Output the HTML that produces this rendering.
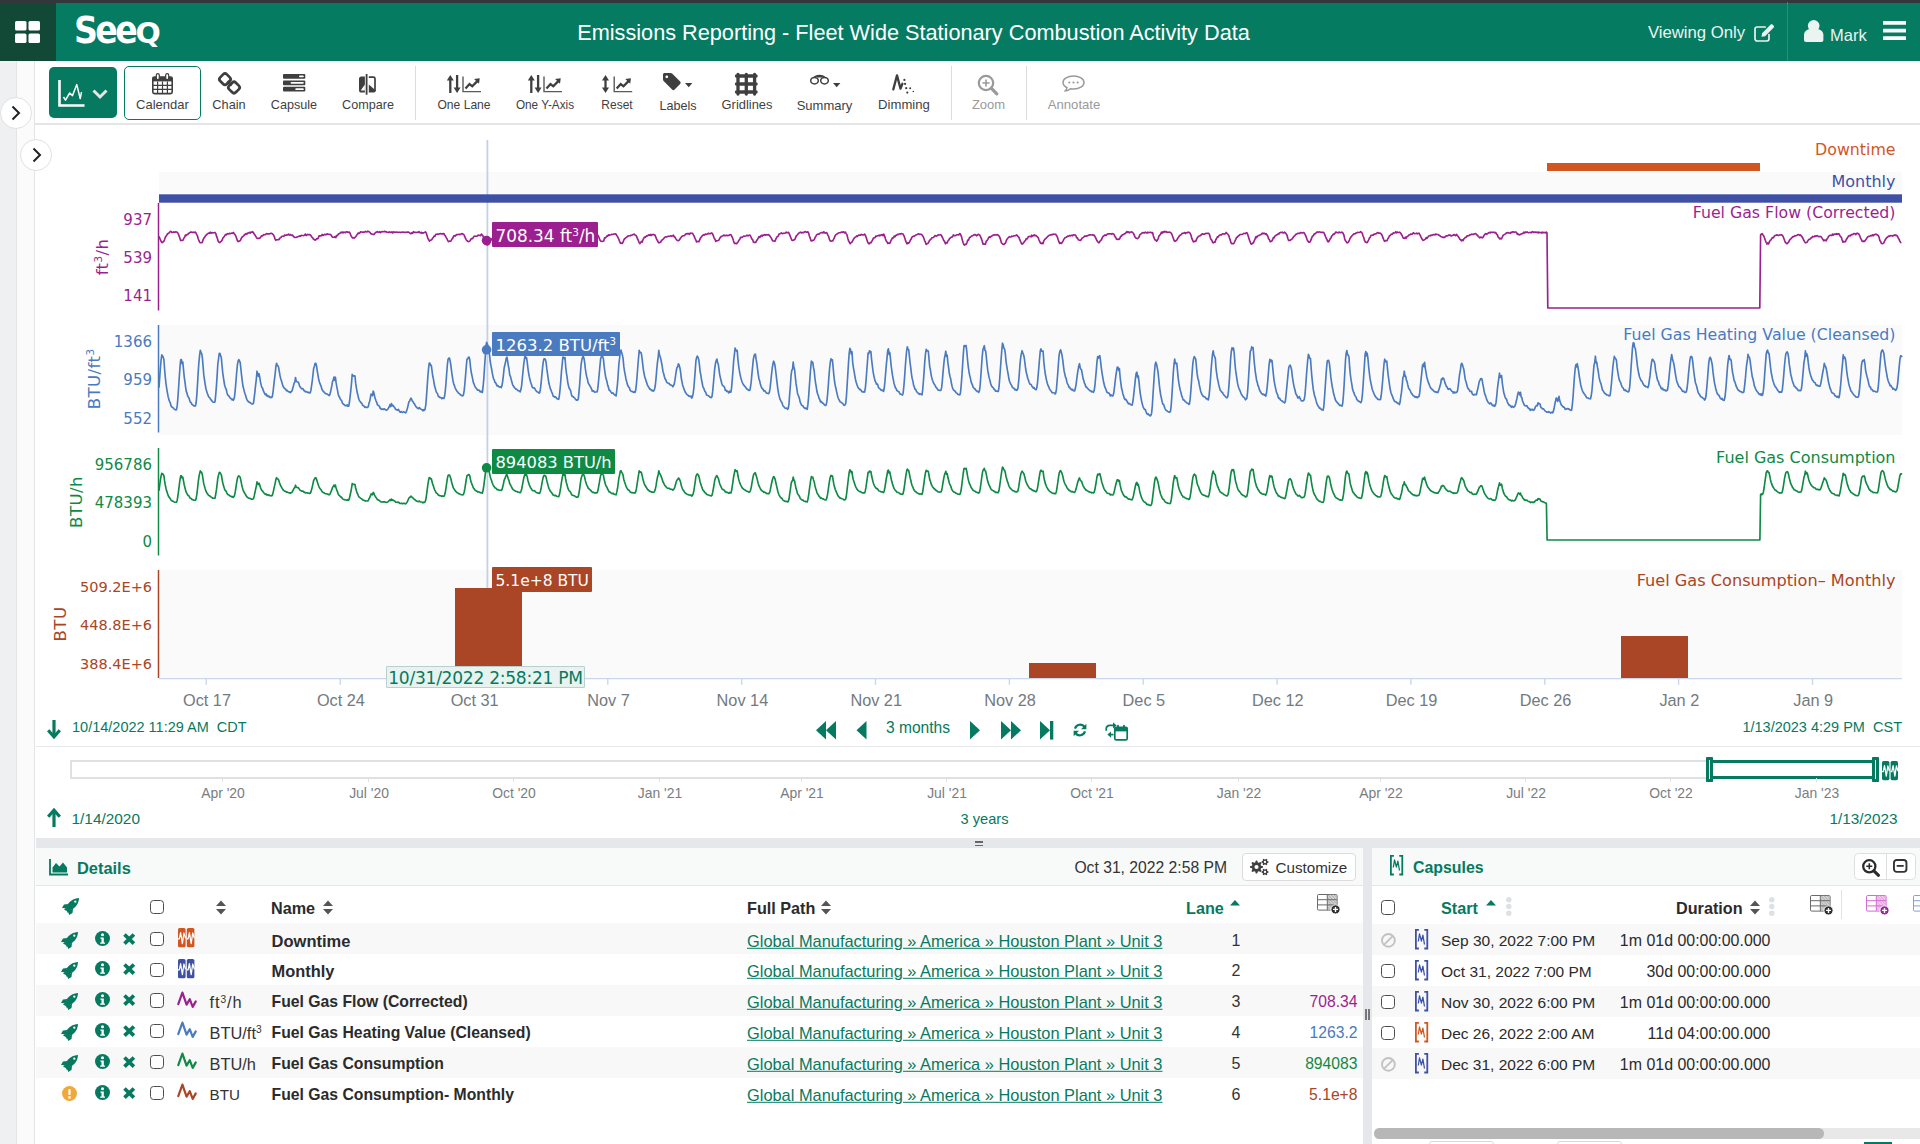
<!DOCTYPE html>
<html lang="en"><head><meta charset="utf-8"><title>Seeq - Emissions Reporting</title>
<style>
*{box-sizing:border-box;margin:0;padding:0}
html,body{width:1920px;height:1144px;overflow:hidden;background:#fff}
body{font-family:"Liberation Sans",sans-serif;color:#3a3a3a;position:relative}
.abs{position:absolute}
.t{position:absolute;white-space:pre;line-height:1}
.ui{font-family:"Liberation Sans",sans-serif}
.dv{font-family:"DejaVu Sans","Liberation Sans",sans-serif}
.g{color:#067a60}
svg{position:absolute;overflow:visible}
#hdr{position:absolute;left:0;top:0;width:1920px;height:61.300px;background:#057b62}
#hdr .strip{position:absolute;left:0;top:0;width:1920px;height:2.500px;background:#33363b}
#hdr .home{position:absolute;left:0;top:2.500px;width:56px;height:58.800px;background:#114836}
#tb{position:absolute;left:35px;top:61px;width:1885px;height:64px;background:#fff;border-bottom:2px solid #e4e5e6}
.tbl{position:absolute;top:98px;font-size:13px;color:#3f3f3f;white-space:pre;line-height:13px;transform:translateX(-50%)}
.tbl.dis{color:#9a9a9a}
.sep{position:absolute;top:66px;width:1px;height:54px;background:#dcdcdc}
#lp0{position:absolute;left:0;top:61px;width:16px;height:1083px;background:#eff0f2}
#lp1{position:absolute;left:16px;top:61px;width:19px;height:1083px;background:#fbfbfb;border-left:1px solid #e3e4e6;border-right:1px solid #e3e4e6}
.circ{position:absolute;width:32px;height:32px;border-radius:16px;background:#fff;border:1px solid #e1e1e1}
.cb{position:absolute;width:14.200px;height:14.200px;border:1.500px solid #4d4d4d;border-radius:3.500px;background:#fff}
.row{position:absolute;height:31px}
.rowg{background:#f8f8f8}
a.path{position:absolute;color:#067a60;text-decoration:underline;font-size:16.4px;white-space:pre;line-height:1}
</style></head>
<body>
<div id="hdr"><div class="strip"></div><div class="home"></div></div>
<svg style="left:15px;top:20.5px" width="25" height="22" viewBox="0 0 25 22" ><rect x="0" y="0" width="11.5" height="9.6" rx="1.6" fill="#fff"/><rect x="0" y="12.4" width="11.5" height="9.6" rx="1.6" fill="#fff"/><rect x="13.5" y="0" width="11.5" height="9.6" rx="1.6" fill="#fff"/><rect x="13.5" y="12.4" width="11.5" height="9.6" rx="1.6" fill="#fff"/></svg>
<div class="t dv" style="left:73.500px;top:12.400px;font-size:37.800px;font-weight:700;color:#fff;letter-spacing:-3px;transform:scaleX(.88);transform-origin:0 0">See<span style="font-size:28.200px;display:inline-block;transform:scaleX(1.2);transform-origin:0 50%;letter-spacing:0;margin-left:.600px">Q</span></div>
<div class="t ui" style="left:913.5px;top:33px;font-size:21.7px;color:#fff;font-weight:400;transform:translate(-50%,-50%);">Emissions Reporting - Fleet Wide Stationary Combustion Activity Data</div>
<div class="t ui" style="left:1648px;top:33px;font-size:16.7px;color:#ecf4f1;font-weight:400;transform:translateY(-50%);">Viewing Only</div>
<svg style="left:1753.5px;top:23px" width="21" height="19" viewBox="0 0 21 19" ><path d="M15 11.5v4.300c0 1.200-1 2.200-2.200 2.200H3.200C2 18 1 17 1 15.800V6.200C1 5 2 4 3.200 4h8" fill="none" stroke="#ecf4f1" stroke-width="1.7" stroke-linecap="round"/><path d="M7.5 13.800l.6-3.600 8.600-8.600c.5-.5 1.300-.5 1.800 0l1.200 1.200c.5.5.5 1.300 0 1.800l-8.600 8.600z" fill="#ecf4f1"/></svg>
<div class="abs" style="left:1787px;top:2px;width:1px;height:60px;background:#2b8f79"></div>
<svg style="left:1803.6px;top:20.4px" width="19.4" height="22" viewBox="0 0 19.4 22" ><circle cx="9.700" cy="5.800" r="5.800" fill="#ecf4f1"/><path d="M0 20v-5c0-3.300 2.600-5.800 5.800-5.800h7.800c3.200 0 5.800 2.500 5.800 5.800v5c0 1.100-.9 2-2 2H2c-1.100 0-2-.9-2-2z" fill="#ecf4f1"/></svg>
<div class="t ui" style="left:1830px;top:35px;font-size:16.5px;color:#ecf4f1;font-weight:400;transform:translateY(-50%);">Mark</div>
<svg style="left:1883.2px;top:21.1px" width="23" height="19" viewBox="0 0 23 19" ><rect x="0" y="0" width="23" height="3.700" rx=".5" fill="#fff"/><rect x="0" y="7.7" width="23" height="3.700" rx=".5" fill="#fff"/><rect x="0" y="15.3" width="23" height="3.700" rx=".5" fill="#fff"/></svg>
<div id="lp0"></div><div id="lp1"></div>
<div id="tb"></div>
<div class="circ" style="left:0px;top:97px"></div>
<svg style="left:10.7px;top:105px" width="10" height="16" viewBox="0 0 10 16" ><path d="M1.5 1.5l6.5 6.5-6.5 6.5" fill="none" stroke="#222" stroke-width="2"/></svg>
<div class="abs" style="left:49px;top:67px;width:68px;height:51px;border-radius:5px;background:#067a60"></div>
<svg style="left:57.5px;top:80px" width="28" height="28" viewBox="0 0 28 28" ><path d="M1.5 0v25.5h25" fill="none" stroke="#fff" stroke-width="2.6"/><path d="M5.5 17l2 3.2 4.2-7.2 2.8 2.6 4.3-11 3.4 14 1.3-6.5" fill="none" stroke="#fff" stroke-width="1.5" stroke-linejoin="round"/></svg>
<svg style="left:92px;top:89px" width="16" height="10" viewBox="0 0 16 10" ><path d="M1.5 1.5l6.5 6.5 6.5-6.5" fill="none" stroke="#e6e6e6" stroke-width="3"/></svg>
<div class="abs" style="left:124px;top:66px;width:77px;height:54px;border-radius:5px;border:1.5px solid #067a60;background:#fff"></div>
<svg style="left:151.5px;top:72.5px" width="21" height="21.5" viewBox="0 0 21 21.5" ><rect x="0.8" y="4" width="19.4" height="16.6" rx="1.6" fill="none" stroke="#3f3f3f" stroke-width="1.6"/><rect x="0.8" y="4" width="19.4" height="4.4" fill="#3f3f3f"/><path d="M0.8 12.4h19.4M0.8 16.4h19.4M5.6 8.4v12M10.5 8.4v12M15.4 8.4v12" stroke="#3f3f3f" stroke-width="1.2"/><rect x="4.3" y="0.6" width="3" height="6" rx="1.5" fill="#fff" stroke="#3f3f3f" stroke-width="1.2"/><rect x="13.7" y="0.6" width="3" height="6" rx="1.5" fill="#fff" stroke="#3f3f3f" stroke-width="1.2"/></svg>
<svg style="left:219px;top:72.5px" width="21" height="21" viewBox="0 0 21 21" ><g fill="none" stroke="#3f3f3f" stroke-width="2.700"><rect x="-4.700" y="-4.700" width="9.400" height="9.400" rx="2.600" transform="translate(6 6.200) rotate(45)"/><rect x="-4.700" y="-4.700" width="9.400" height="9.400" rx="2.600" transform="translate(15 14.500) rotate(45)"/></g><path d="M8.300 8.300l4.400 4.100" stroke="#3f3f3f" stroke-width="2.700"/></svg>
<svg style="left:282.7px;top:74.4px" width="22.3" height="17.5" viewBox="0 0 22.3 17.5" ><rect x="0" y="0" width="22.300" height="4.700" rx="0.900" fill="#3f3f3f"/><rect x="16" y="1.5" width="4.800000000000001" height="1.700" rx="0.850" fill="#fff"/><rect x="0" y="6.5" width="22.300" height="4.700" rx="0.900" fill="#3f3f3f"/><rect x="7.6" y="8.0" width="13.200000000000001" height="1.700" rx="0.850" fill="#fff"/><rect x="0" y="12.8" width="22.300" height="4.700" rx="0.900" fill="#3f3f3f"/><rect x="12.3" y="14.3" width="8.5" height="1.700" rx="0.850" fill="#fff"/></svg>
<svg style="left:359.3px;top:74px" width="17" height="21" viewBox="0 0 17 21" ><rect x="6.700" y="0" width="1.800" height="20.800" rx=".5" fill="#3f3f3f"/><path d="M5.900 2.400H2.200C1 2.400 0 3.400 0 4.600v11.800c0 1.200 1 2.200 2.200 2.200h3.700z" fill="#3f3f3f"/><path d="M1.700 16.600h4.200v-6z" fill="#fff"/><path d="M9.800 3.200h4.600c.9 0 1.600 .7 1.600 1.600v12.200" fill="none" stroke="#3f3f3f" stroke-width="1.700"/><path d="M9.800 10.400v8.200h5c1.100 0 2-.9 2-2z" fill="#3f3f3f"/></svg>
<svg style="left:446.8px;top:75px" width="35" height="18" viewBox="0 0 35 18" ><path d="M3.300 3v15" stroke="#3f3f3f" stroke-width="2.300"/><path d="M-.200 5.600l3.500-5.600 3.500 5.600z" fill="#3f3f3f"/><path d="M10.100 0v15" stroke="#3f3f3f" stroke-width="2.300"/><path d="M6.600 12.400l3.500 5.600 3.500-5.600z" fill="#3f3f3f"/><g transform="translate(15.3 1.600)"><path d="M0.700 0v15h18" fill="none" stroke="#5a5a5a" stroke-width="1.400"/><path d="M3.200 11.800l4-4.400 2.800 2.300 5-5.200" fill="none" stroke="#3f3f3f" stroke-width="2.300"/><path d="M11.800 2.300l5.600-.700-.700 5.600z" fill="#3f3f3f"/></g></svg>
<svg style="left:527.8px;top:75px" width="35" height="18" viewBox="0 0 35 18" ><path d="M3.300 3v15" stroke="#3f3f3f" stroke-width="2.300"/><path d="M-.200 5.600l3.500-5.600 3.500 5.600z" fill="#3f3f3f"/><path d="M10.100 0v15" stroke="#3f3f3f" stroke-width="2.300"/><path d="M6.600 12.400l3.500 5.600 3.500-5.600z" fill="#3f3f3f"/><g transform="translate(15.3 1.600)"><path d="M0.700 0v15h18" fill="none" stroke="#5a5a5a" stroke-width="1.400"/><path d="M3.200 11.800l4-4.400 2.800 2.300 5-5.200" fill="none" stroke="#3f3f3f" stroke-width="2.300"/><path d="M11.800 2.300l5.600-.700-.700 5.600z" fill="#3f3f3f"/></g></svg>
<svg style="left:601.5px;top:75px" width="31" height="18" viewBox="0 0 31 18" ><path d="M3.500 3v12" stroke="#3f3f3f" stroke-width="2.300"/><path d="M0 5.600l3.500-5.600 3.500 5.600z" fill="#3f3f3f"/><path d="M0 12.400l3.500 5.600 3.500-5.600z" fill="#3f3f3f"/><g transform="translate(11.5 1.600)"><path d="M0.700 0v15h18" fill="none" stroke="#5a5a5a" stroke-width="1.400"/><path d="M3.200 11.800l4-4.400 2.800 2.300 5-5.200" fill="none" stroke="#3f3f3f" stroke-width="2.300"/><path d="M11.800 2.300l5.600-.700-.700 5.600z" fill="#3f3f3f"/></g></svg>
<svg style="left:663px;top:72.7px" width="18" height="18" viewBox="0 0 18 18" ><path d="M0 1.600C0 .700 .700 0 1.600 0h6c.600 0 1.100 .200 1.500 .600l8 8c.700 .700 .700 1.800 0 2.500l-5.500 5.500c-.700 .700-1.800 .700-2.500 0l-8.500-8.500C.200 7.700 0 7.200 0 6.600z" fill="#3f3f3f"/><circle cx="3.800" cy="3.800" r="1.400" fill="#fff"/></svg>
<svg style="left:684.9px;top:82.9px" width="8" height="5" viewBox="0 0 8 5" ><path d="M0 0h7.4l-3.7 4.2z" fill="#3f3f3f"/></svg>
<svg style="left:735.3px;top:72.6px" width="22.6" height="22.6" viewBox="0 0 22.6 22.6" ><path d="M3 1.500v19.600M11.300 1.500v19.600M19.600 1.500v19.600M1.500 3h19.600M1.500 11h19.600M1.500 19h19.600" stroke="#3f3f3f" stroke-width="3.300" stroke-linecap="round"/></svg>
<svg style="left:809.6px;top:75.4px" width="19" height="10" viewBox="0 0 19 10" ><ellipse cx="4.500" cy="5.700" rx="3.800" ry="3.200" fill="none" stroke="#3f3f3f" stroke-width="1.500"/><ellipse cx="14.500" cy="5.700" rx="3.800" ry="3.200" fill="none" stroke="#3f3f3f" stroke-width="1.500"/><path d="M4.200 2.300C6 .600 7.800 .500 9.500 .500s3.500 .100 5.300 1.800" fill="none" stroke="#3f3f3f" stroke-width="1.600"/><path d="M7 1.700h5" stroke="#3f3f3f" stroke-width="1.600"/></svg>
<svg style="left:832.8px;top:82.9px" width="8" height="5" viewBox="0 0 8 5" ><path d="M0 0h7.4l-3.7 4.2z" fill="#3f3f3f"/></svg>
<svg style="left:891.5px;top:74px" width="23" height="20" viewBox="0 0 23 20" ><polyline points="1.300,15.400 5,1.400 8.500,14.600 10.400,9.800" fill="none" stroke="#3f3f3f" stroke-width="2.300" stroke-linejoin="round" stroke-linecap="round"/><circle cx="12.4" cy="5.9" r="1.1" fill="#3f3f3f"/><circle cx="13.1" cy="9.9" r="1.1" fill="#3f3f3f"/><circle cx="14.2" cy="14.2" r="1.1" fill="#3f3f3f"/><circle cx="18.2" cy="14.2" r="1" fill="#3f3f3f"/><circle cx="15.3" cy="18.6" r="1.1" fill="#3f3f3f"/><circle cx="21.3" cy="17.5" r="0.8" fill="#3f3f3f"/></svg>
<svg style="left:977px;top:74px" width="21" height="21" viewBox="0 0 21 21" ><circle cx="9" cy="9" r="7.2" fill="none" stroke="#9a9a9a" stroke-width="2.2"/><path d="M14.2 14.2l5.6 5.6" stroke="#9a9a9a" stroke-width="3.2" stroke-linecap="round"/><path d="M5.4 9h7.2M9 5.4v7.2" stroke="#9a9a9a" stroke-width="1.6"/></svg>
<svg style="left:1062px;top:75px" width="23" height="17" viewBox="0 0 23 17" ><path d="M11.500 1C5.700 1 1 3.900 1 7.500c0 2.100 1.600 4 4.100 5.200-.300 1.300-1 2.500-2.200 3.400 2.200-.1 4.200-1 5.500-2.300 1 .2 2 .300 3.100.300 5.800 0 10.500-2.900 10.500-6.500S17.300 1 11.500 1z" fill="none" stroke="#9a9a9a" stroke-width="0"/><path d="M11.5 1C5.7 1 1 3.9 1 7.5c0 2.1 1.6 4 4.1 5.2-.3 1.300-1 2.500-2.200 3.400 2.200-.1 4.200-1 5.500-2.300 1 .2 2 .3 3.100 .3 5.800 0 10.500-2.900 10.500-6.600S17.300 1 11.500 1z" fill="none" stroke="#9a9a9a" stroke-width="1.5" stroke-linejoin="round"/><circle cx="7.3" cy="7.5" r="1.1" fill="#9a9a9a"/><circle cx="11.5" cy="7.5" r="1.1" fill="#9a9a9a"/><circle cx="15.7" cy="7.500" r="1.1" fill="#9a9a9a"/></svg>
<div class="tbl" style="left:162.5px;top:98px;transform:translateX(-50%) scaleX(1)">Calendar</div>
<div class="tbl" style="left:229px;top:98px;transform:translateX(-50%) scaleX(0.98)">Chain</div>
<div class="tbl" style="left:293.5px;top:98px;transform:translateX(-50%) scaleX(0.97)">Capsule</div>
<div class="tbl" style="left:367.5px;top:98px;transform:translateX(-50%) scaleX(0.97)">Compare</div>
<div class="tbl" style="left:463.5px;top:98px;transform:translateX(-50%) scaleX(0.93)">One Lane</div>
<div class="tbl" style="left:544.5px;top:98px;transform:translateX(-50%) scaleX(0.905)">One Y-Axis</div>
<div class="tbl" style="left:616.5px;top:98px;transform:translateX(-50%) scaleX(0.92)">Reset</div>
<div class="tbl" style="left:677.5px;top:98.6px;transform:translateX(-50%) scaleX(0.97)">Labels</div>
<div class="tbl" style="left:746.5px;top:98px;transform:translateX(-50%) scaleX(0.99)">Gridlines</div>
<div class="tbl" style="left:824.5px;top:98.6px;transform:translateX(-50%) scaleX(1)">Summary</div>
<div class="tbl" style="left:903.5px;top:98px;transform:translateX(-50%) scaleX(1.01)">Dimming</div>
<div class="tbl dis" style="left:988.5px;top:98px;transform:translateX(-50%) scaleX(1)">Zoom</div>
<div class="tbl dis" style="left:1074px;top:98px;transform:translateX(-50%) scaleX(1.01)">Annotate</div>
<div class="sep" style="left:415px"></div>
<div class="sep" style="left:951px"></div>
<div class="sep" style="left:1026px"></div>
<div class="circ" style="left:20px;top:139px"></div>
<svg style="left:32px;top:147px" width="10" height="16" viewBox="0 0 10 16" ><path d="M1.5 1.5l6.5 6.5-6.5 6.5" fill="none" stroke="#222" stroke-width="2"/></svg>
<div class="abs" style="left:159px;top:172px;width:1743px;height:21px;background:#fafafa"></div>
<div class="abs" style="left:159px;top:325px;width:1743px;height:110px;background:#fafafa"></div>
<div class="abs" style="left:159px;top:570px;width:1743px;height:108px;background:#fafafa"></div>
<svg style="left:0;top:0" width="1920" height="760" viewBox="0 0 1920 760"><path d="M487.400 140v548" stroke="#c3d1e6" stroke-width="1.800"/><rect x="1547" y="163" width="213" height="8" fill="#d1561f"/><rect x="159" y="194.300" width="1743" height="8.400" fill="#3f51a5"/><path d="M158.500 203v107.500" stroke="#9c1f8f" stroke-width="1.500"/><path d="M158.500 325v107.500" stroke="#4a7ac0" stroke-width="1.500"/><path d="M158.500 448v107.500" stroke="#0e8a45" stroke-width="1.500"/><path d="M158.500 570v108" stroke="#aa4424" stroke-width="1.500"/><path d="M159 678.600H1902" stroke="#ccd6eb" stroke-width="1.300"/><path d="M206.3 678v6.800M340.2 678v6.800M474.0 678v6.800M607.8 678v6.800M741.7 678v6.800M875.5 678v6.800M1009.4 678v6.800M1143.2 678v6.800M1277.1 678v6.800M1410.9 678v6.800M1544.8 678v6.800M1678.6 678v6.800M1812.5 678v6.800" stroke="#ccd6eb" stroke-width="1.400"/><rect x="455" y="588" width="67" height="90" fill="#aa4525"/><rect x="1029" y="663" width="67" height="15" fill="#aa4525"/><rect x="1621" y="636" width="67" height="42" fill="#aa4525"/><path d="M159.0,236.2 159.8,238.4 160.6,240.1 161.4,242.0 162.2,242.6 163.0,242.0 163.8,241.3 164.6,239.5 165.4,237.1 166.2,236.0 167.0,234.8 167.8,233.5 168.6,233.4 169.4,232.5 170.2,231.6 171.0,231.4 171.8,232.6 172.6,232.3 173.4,231.9 174.2,232.3 175.0,232.1 175.8,231.9 176.6,232.0 177.4,232.4 178.2,233.6 179.0,235.7 179.8,238.1 180.6,240.4 181.4,240.3 182.2,240.5 183.0,240.2 183.8,238.2 184.6,237.3 185.4,235.1 186.2,235.6 187.0,234.6 187.8,234.5 188.6,233.3 189.4,233.0 190.2,232.4 191.0,231.9 191.8,232.2 192.6,232.4 193.4,232.2 194.2,232.6 195.0,232.1 195.8,232.5 196.6,234.3 197.4,235.7 198.2,238.7 199.0,240.7 199.8,242.5 200.6,242.7 201.4,242.7 202.2,242.4 203.0,239.9 203.8,238.3 204.6,237.2 205.4,236.1 206.2,235.1 207.0,234.2 207.8,233.7 208.6,233.0 209.4,233.4 210.2,232.2 211.0,233.3 211.8,232.5 212.6,232.8 213.4,232.8 214.2,232.7 215.0,232.4 215.8,233.6 216.6,236.4 217.4,238.4 218.2,241.3 219.0,242.2 219.8,242.6 220.6,241.7 221.4,241.3 222.2,240.0 223.0,237.8 223.8,237.1 224.6,235.9 225.4,234.6 226.2,235.0 227.0,233.9 227.8,233.7 228.6,234.0 229.4,233.3 230.2,233.7 231.0,233.4 231.8,233.1 232.6,233.3 233.4,232.5 234.2,233.7 235.0,234.6 235.8,235.9 236.6,238.2 237.4,240.7 238.2,241.6 239.0,241.1 239.8,240.9 240.6,240.0 241.4,238.2 242.2,237.0 243.0,236.4 243.8,235.8 244.6,234.4 245.4,234.6 246.2,233.5 247.0,234.1 247.8,233.1 248.6,233.0 249.4,232.4 250.2,233.1 251.0,232.1 251.8,232.3 252.6,231.7 253.4,232.6 254.2,234.0 255.0,235.1 255.8,236.4 256.6,237.8 257.4,238.5 258.2,238.3 259.0,238.5 259.8,238.1 260.6,237.3 261.4,235.9 262.2,235.9 263.0,235.5 263.8,234.5 264.6,234.7 265.4,234.7 266.2,233.8 267.0,233.6 267.8,234.1 268.6,233.8 269.4,233.9 270.2,233.6 271.0,233.3 271.8,233.6 272.6,234.0 273.4,234.8 274.2,236.3 275.0,238.8 275.8,240.3 276.6,239.7 277.4,239.7 278.2,239.5 279.0,239.7 279.8,238.3 280.6,237.4 281.4,237.0 282.2,236.2 283.0,236.2 283.8,236.4 284.6,235.0 285.4,235.3 286.2,235.2 287.0,234.8 287.8,234.9 288.6,234.1 289.4,235.1 290.2,234.6 291.0,235.0 291.8,235.5 292.6,235.1 293.4,236.4 294.2,237.1 295.0,237.5 295.8,237.5 296.6,237.3 297.4,236.8 298.2,236.5 299.0,236.4 299.8,235.9 300.6,236.1 301.4,235.4 302.2,235.5 303.0,235.5 303.8,235.6 304.6,235.3 305.4,234.0 306.2,235.4 307.0,235.0 307.8,234.4 308.6,234.7 309.4,234.5 310.2,234.8 311.0,235.6 311.8,237.1 312.6,237.6 313.4,239.0 314.2,239.5 315.0,240.2 315.8,239.7 316.6,238.8 317.4,238.8 318.2,238.3 319.0,235.9 319.8,235.9 320.6,235.9 321.4,235.8 322.2,234.4 323.0,235.5 323.8,234.9 324.6,234.3 325.4,234.8 326.2,234.6 327.0,233.9 327.8,234.1 328.6,234.2 329.4,234.5 330.2,234.3 331.0,235.0 331.8,236.4 332.6,237.2 333.4,237.2 334.2,237.3 335.0,236.6 335.8,237.6 336.6,235.5 337.4,235.7 338.2,234.3 339.0,233.8 339.8,233.4 340.6,232.4 341.4,232.6 342.2,232.0 343.0,233.0 343.8,232.1 344.6,232.2 345.4,232.7 346.2,231.9 347.0,231.8 347.8,232.3 348.6,232.4 349.4,232.1 350.2,233.5 351.0,235.8 351.8,236.9 352.6,237.9 353.4,237.7 354.2,238.1 355.0,237.3 355.8,236.7 356.6,235.3 357.4,234.4 358.2,233.0 359.0,233.4 359.8,233.0 360.6,231.8 361.4,232.0 362.2,232.2 363.0,231.9 363.8,232.3 364.6,231.9 365.4,231.3 366.2,232.0 367.0,231.9 367.8,231.2 368.6,231.6 369.4,232.0 370.2,232.7 371.0,233.9 371.8,233.9 372.6,234.2 373.4,234.6 374.2,234.2 375.0,233.0 375.8,232.3 376.6,232.1 377.4,231.5 378.2,232.2 379.0,232.2 379.8,231.7 380.6,232.6 381.4,231.7 382.2,231.5 383.0,231.8 383.8,231.7 384.6,231.3 385.4,231.8 386.2,231.7 387.0,232.2 387.8,232.3 388.6,232.6 389.4,231.8 390.2,232.4 391.0,232.5 391.8,231.8 392.6,232.9 393.4,231.8 394.2,232.5 395.0,232.0 395.8,232.2 396.6,232.0 397.4,232.2 398.2,232.4 399.0,232.3 399.8,232.2 400.6,232.6 401.4,232.2 402.2,232.3 403.0,232.0 403.8,232.3 404.6,232.4 405.4,232.4 406.2,232.3 407.0,232.0 407.8,232.3 408.6,232.1 409.4,232.7 410.2,233.4 411.0,233.8 411.8,232.9 412.6,233.3 413.4,231.7 414.2,232.3 415.0,232.3 415.8,232.4 416.6,232.5 417.4,232.2 418.2,232.4 419.0,231.7 419.8,232.5 420.6,233.0 421.4,232.4 422.2,233.2 423.0,232.7 423.8,232.9 424.6,232.4 425.4,231.8 426.2,232.9 427.0,235.4 427.8,238.1 428.6,239.5 429.4,241.2 430.2,240.3 431.0,240.1 431.8,239.7 432.6,238.2 433.4,237.2 434.2,236.1 435.0,236.3 435.8,234.4 436.6,234.3 437.4,234.0 438.2,234.4 439.0,234.1 439.8,233.8 440.6,233.6 441.4,233.9 442.2,233.7 443.0,234.0 443.8,233.5 444.6,235.0 445.4,235.9 446.2,237.6 447.0,238.8 447.8,240.7 448.6,241.6 449.4,241.1 450.2,241.3 451.0,241.0 451.8,239.2 452.6,238.6 453.4,236.6 454.2,235.6 455.0,236.2 455.8,235.4 456.6,234.6 457.4,234.6 458.2,234.5 459.0,234.3 459.8,234.6 460.6,234.4 461.4,233.7 462.2,233.6 463.0,234.3 463.8,234.6 464.6,236.1 465.4,238.2 466.2,239.7 467.0,240.7 467.8,241.4 468.6,241.6 469.4,241.3 470.2,240.5 471.0,239.0 471.8,238.5 472.6,238.6 473.4,237.3 474.2,236.3 475.0,236.1 475.8,236.2 476.6,236.2 477.4,236.0 478.2,235.1 479.0,235.5 479.8,235.3 480.6,235.7 481.4,234.1 482.2,235.0 483.0,236.1 483.8,238.3 484.6,240.2 485.4,243.1 486.2,244.7 487.0,244.5 487.8,244.9 488.6,244.3 489.4,243.2 490.2,241.2 491.0,240.2 491.8,238.7 492.6,238.4 493.4,237.9 494.2,237.5 495.0,237.2 495.8,237.0 496.6,236.8 497.4,237.1 498.2,236.4 499.0,236.3 499.8,235.7 500.6,235.7 501.4,236.2 502.2,236.0 503.0,237.6 503.8,239.0 504.6,240.5 505.4,240.7 506.2,241.4 507.0,240.6 507.8,240.6 508.6,240.1 509.4,239.0 510.2,236.8 511.0,237.0 511.8,236.9 512.6,235.8 513.4,235.9 514.2,236.1 515.0,235.7 515.8,234.5 516.6,235.1 517.4,234.8 518.2,234.9 519.0,234.0 519.8,235.1 520.6,235.1 521.4,235.1 522.2,236.9 523.0,238.8 523.8,240.8 524.6,241.7 525.4,241.4 526.2,241.8 527.0,241.4 527.8,240.8 528.6,238.8 529.4,237.9 530.2,236.9 531.0,236.0 531.8,236.0 532.6,236.6 533.4,235.6 534.2,235.2 535.0,235.0 535.8,235.8 536.6,235.5 537.4,236.0 538.2,234.3 539.0,234.8 539.8,234.6 540.6,236.4 541.4,237.3 542.2,239.1 543.0,240.9 543.8,242.4 544.6,241.9 545.4,241.6 546.2,241.6 547.0,239.4 547.8,237.6 548.6,237.1 549.4,236.9 550.2,235.5 551.0,235.0 551.8,235.0 552.6,233.8 553.4,234.0 554.2,233.8 555.0,233.3 555.8,232.8 556.6,233.1 557.4,233.1 558.2,233.5 559.0,233.6 559.8,234.7 560.6,236.5 561.4,239.0 562.2,239.7 563.0,241.5 563.8,241.7 564.6,241.4 565.4,241.4 566.2,239.6 567.0,238.1 567.8,237.1 568.6,235.9 569.4,234.9 570.2,235.9 571.0,234.7 571.8,234.1 572.6,234.3 573.4,234.6 574.2,233.5 575.0,233.0 575.8,233.1 576.6,233.2 577.4,233.2 578.2,232.8 579.0,235.1 579.8,237.4 580.6,239.1 581.4,240.4 582.2,241.9 583.0,241.2 583.8,241.7 584.6,240.8 585.4,238.5 586.2,237.9 587.0,237.5 587.8,236.3 588.6,236.2 589.4,235.7 590.2,235.0 591.0,234.7 591.8,234.1 592.6,234.4 593.4,234.3 594.2,234.2 595.0,234.4 595.8,234.5 596.6,233.8 597.4,234.6 598.2,235.9 599.0,237.4 599.8,239.8 600.6,240.9 601.4,241.2 602.2,241.5 603.0,241.2 603.8,240.7 604.6,237.8 605.4,237.9 606.2,237.0 607.0,235.9 607.8,236.1 608.6,234.8 609.4,235.3 610.2,235.0 611.0,234.8 611.8,234.3 612.6,234.5 613.4,234.3 614.2,233.9 615.0,234.0 615.8,233.9 616.6,235.2 617.4,236.4 618.2,238.0 619.0,239.7 619.8,241.9 620.6,243.4 621.4,243.1 622.2,243.4 623.0,242.3 623.8,240.0 624.6,238.7 625.4,238.2 626.2,237.4 627.0,237.1 627.8,236.0 628.6,235.9 629.4,235.7 630.2,235.8 631.0,235.2 631.8,235.3 632.6,234.7 633.4,234.4 634.2,234.1 635.0,235.1 635.8,235.4 636.6,236.3 637.4,238.7 638.2,240.0 639.0,242.3 639.8,243.7 640.6,242.4 641.4,241.4 642.2,242.1 643.0,239.7 643.8,238.2 644.6,237.1 645.4,237.3 646.2,236.2 647.0,235.8 647.8,235.8 648.6,234.9 649.4,235.3 650.2,234.5 651.0,235.6 651.8,234.5 652.6,234.8 653.4,234.4 654.2,234.9 655.0,235.1 655.8,237.0 656.6,239.3 657.4,240.4 658.2,242.2 659.0,242.8 659.8,242.4 660.6,242.3 661.4,240.7 662.2,239.9 663.0,239.3 663.8,238.4 664.6,237.4 665.4,236.9 666.2,237.0 667.0,236.9 667.8,236.4 668.6,236.2 669.4,236.3 670.2,236.1 671.0,235.8 671.8,236.2 672.6,236.0 673.4,235.2 674.2,236.9 675.0,237.1 675.8,238.6 676.6,239.8 677.4,240.5 678.2,240.6 679.0,240.4 679.8,239.2 680.6,238.0 681.4,237.0 682.2,236.2 683.0,235.8 683.8,235.7 684.6,235.4 685.4,234.3 686.2,233.7 687.0,234.0 687.8,233.5 688.6,233.5 689.4,234.5 690.2,233.1 691.0,233.3 691.8,233.2 692.6,233.3 693.4,234.9 694.2,236.2 695.0,238.4 695.8,240.0 696.6,241.9 697.4,241.5 698.2,241.4 699.0,241.7 699.8,239.5 700.6,238.0 701.4,236.9 702.2,235.8 703.0,235.2 703.8,234.7 704.6,235.1 705.4,234.0 706.2,234.5 707.0,234.2 707.8,233.6 708.6,233.4 709.4,233.6 710.2,233.7 711.0,233.2 711.8,232.9 712.6,233.9 713.4,236.0 714.2,238.1 715.0,239.3 715.8,241.4 716.6,240.7 717.4,240.7 718.2,240.4 719.0,240.0 719.8,238.2 720.6,237.1 721.4,236.3 722.2,236.1 723.0,235.8 723.8,235.0 724.6,235.6 725.4,235.6 726.2,235.4 727.0,235.4 727.8,235.6 728.6,235.4 729.4,235.2 730.2,234.5 731.0,234.7 731.8,236.3 732.6,238.0 733.4,240.6 734.2,242.9 735.0,243.6 735.8,243.3 736.6,243.7 737.4,242.7 738.2,241.7 739.0,240.2 739.8,239.2 740.6,237.4 741.4,237.3 742.2,237.3 743.0,236.7 743.8,236.0 744.6,236.2 745.4,236.0 746.2,235.7 747.0,235.3 747.8,235.8 748.6,235.6 749.4,235.1 750.2,235.3 751.0,237.0 751.8,238.9 752.6,239.6 753.4,242.1 754.2,242.5 755.0,242.3 755.8,242.4 756.6,240.7 757.4,239.6 758.2,238.2 759.0,236.6 759.8,237.5 760.6,236.3 761.4,235.4 762.2,236.2 763.0,235.1 763.8,235.3 764.6,234.6 765.4,235.2 766.2,234.6 767.0,234.9 767.8,235.0 768.6,234.6 769.4,235.5 770.2,236.4 771.0,237.6 771.8,239.1 772.6,240.8 773.4,241.0 774.2,241.1 775.0,241.2 775.8,239.2 776.6,237.6 777.4,236.6 778.2,236.2 779.0,234.1 779.8,233.8 780.6,233.4 781.4,232.8 782.2,233.6 783.0,233.5 783.8,233.2 784.6,233.3 785.4,232.9 786.2,232.2 787.0,232.8 787.8,232.6 788.6,232.4 789.4,234.1 790.2,236.2 791.0,238.0 791.8,240.1 792.6,240.5 793.4,240.3 794.2,239.8 795.0,239.3 795.8,237.0 796.6,235.5 797.4,234.8 798.2,233.8 799.0,233.0 799.8,232.6 800.6,232.2 801.4,233.0 802.2,232.6 803.0,232.8 803.8,232.3 804.6,231.9 805.4,231.5 806.2,232.2 807.0,232.3 807.8,231.8 808.6,233.0 809.4,236.0 810.2,238.1 811.0,240.7 811.8,241.0 812.6,240.4 813.4,240.3 814.2,239.7 815.0,237.7 815.8,236.4 816.6,234.9 817.4,234.3 818.2,234.1 819.0,234.1 819.8,233.3 820.6,233.0 821.4,232.6 822.2,232.6 823.0,233.0 823.8,231.8 824.6,232.8 825.4,233.2 826.2,232.6 827.0,232.9 827.8,235.1 828.6,236.4 829.4,239.4 830.2,240.7 831.0,241.2 831.8,241.0 832.6,241.0 833.4,239.6 834.2,238.2 835.0,235.9 835.8,234.8 836.6,234.2 837.4,233.8 838.2,233.2 839.0,232.8 839.8,232.7 840.6,232.6 841.4,232.1 842.2,232.4 843.0,231.8 843.8,232.1 844.6,233.0 845.4,232.2 846.2,233.6 847.0,234.9 847.8,238.3 848.6,240.9 849.4,242.4 850.2,243.7 851.0,242.6 851.8,242.2 852.6,241.0 853.4,239.3 854.2,238.2 855.0,237.4 855.8,236.9 856.6,235.9 857.4,236.5 858.2,235.4 859.0,235.0 859.8,235.1 860.6,235.2 861.4,234.4 862.2,234.7 863.0,234.9 863.8,235.0 864.6,234.1 865.4,235.3 866.2,237.6 867.0,240.0 867.8,242.5 868.6,243.6 869.4,243.8 870.2,242.5 871.0,242.7 871.8,241.4 872.6,239.9 873.4,238.2 874.2,237.7 875.0,237.6 875.8,236.0 876.6,236.5 877.4,235.8 878.2,235.7 879.0,235.1 879.8,235.8 880.6,235.2 881.4,234.7 882.2,234.5 883.0,235.7 883.8,234.2 884.6,236.0 885.4,238.8 886.2,241.0 887.0,241.8 887.8,243.5 888.6,243.0 889.4,243.3 890.2,242.6 891.0,240.5 891.8,239.1 892.6,237.8 893.4,237.8 894.2,236.1 895.0,236.7 895.8,235.5 896.6,235.0 897.4,234.4 898.2,234.7 899.0,234.0 899.8,233.8 900.6,234.1 901.4,233.6 902.2,233.8 903.0,234.1 903.8,235.5 904.6,237.5 905.4,240.1 906.2,242.3 907.0,243.9 907.8,242.6 908.6,243.3 909.4,242.4 910.2,240.5 911.0,239.3 911.8,237.6 912.6,236.6 913.4,236.1 914.2,236.4 915.0,235.7 915.8,235.1 916.6,234.7 917.4,234.4 918.2,233.8 919.0,234.0 919.8,234.5 920.6,234.2 921.4,234.2 922.2,235.2 923.0,236.3 923.8,238.0 924.6,240.6 925.4,242.2 926.2,244.4 927.0,243.7 927.8,243.5 928.6,242.4 929.4,240.7 930.2,239.7 931.0,239.2 931.8,237.8 932.6,237.7 933.4,237.5 934.2,236.7 935.0,235.6 935.8,235.9 936.6,236.1 937.4,235.6 938.2,234.7 939.0,234.9 939.8,235.0 940.6,234.7 941.4,235.5 942.2,237.0 943.0,238.7 943.8,240.6 944.6,241.4 945.4,243.8 946.2,242.7 947.0,243.1 947.8,241.2 948.6,240.3 949.4,238.9 950.2,238.0 951.0,237.5 951.8,236.8 952.6,236.8 953.4,234.9 954.2,235.5 955.0,235.8 955.8,235.5 956.6,234.8 957.4,234.7 958.2,234.9 959.0,234.8 959.8,233.5 960.6,234.6 961.4,236.4 962.2,239.6 963.0,242.3 963.8,244.5 964.6,245.2 965.4,244.2 966.2,244.3 967.0,242.5 967.8,240.0 968.6,240.1 969.4,237.7 970.2,237.3 971.0,236.5 971.8,236.1 972.6,235.8 973.4,235.1 974.2,235.0 975.0,234.5 975.8,234.9 976.6,235.8 977.4,235.1 978.2,234.4 979.0,234.6 979.8,235.2 980.6,236.8 981.4,238.9 982.2,241.0 983.0,244.1 983.8,244.1 984.6,244.0 985.4,244.3 986.2,241.4 987.0,240.6 987.8,239.4 988.6,237.8 989.4,236.8 990.2,237.3 991.0,236.5 991.8,236.0 992.6,235.6 993.4,235.0 994.2,234.8 995.0,235.0 995.8,234.8 996.6,235.0 997.4,234.6 998.2,235.1 999.0,236.0 999.8,237.4 1000.6,239.6 1001.4,242.8 1002.2,243.5 1003.0,244.3 1003.8,244.6 1004.6,243.7 1005.4,243.2 1006.2,240.9 1007.0,239.2 1007.8,238.3 1008.6,237.3 1009.4,236.7 1010.2,237.0 1011.0,236.9 1011.8,236.2 1012.6,236.4 1013.4,236.1 1014.2,235.7 1015.0,235.8 1015.8,235.5 1016.6,234.9 1017.4,235.8 1018.2,236.7 1019.0,237.4 1019.8,239.9 1020.6,241.5 1021.4,243.3 1022.2,244.1 1023.0,243.5 1023.8,242.5 1024.6,241.2 1025.4,240.6 1026.2,238.7 1027.0,239.0 1027.8,237.8 1028.6,236.5 1029.4,236.5 1030.2,236.3 1031.0,236.9 1031.8,235.2 1032.6,236.1 1033.4,235.7 1034.2,234.8 1035.0,235.7 1035.8,235.4 1036.6,236.2 1037.4,236.9 1038.2,237.6 1039.0,240.0 1039.8,241.6 1040.6,243.3 1041.4,243.6 1042.2,242.9 1043.0,243.6 1043.8,240.9 1044.6,239.6 1045.4,238.8 1046.2,238.1 1047.0,237.3 1047.8,236.4 1048.6,235.8 1049.4,235.2 1050.2,234.9 1051.0,235.0 1051.8,234.5 1052.6,234.7 1053.4,234.1 1054.2,234.2 1055.0,234.2 1055.8,234.4 1056.6,235.7 1057.4,237.2 1058.2,239.8 1059.0,242.0 1059.8,243.5 1060.6,242.8 1061.4,243.4 1062.2,242.3 1063.0,241.1 1063.8,239.4 1064.6,238.1 1065.4,237.5 1066.2,237.2 1067.0,236.8 1067.8,236.0 1068.6,236.2 1069.4,235.6 1070.2,235.9 1071.0,235.3 1071.8,235.4 1072.6,235.8 1073.4,234.8 1074.2,235.0 1075.0,234.9 1075.8,235.4 1076.6,237.7 1077.4,237.9 1078.2,239.5 1079.0,240.1 1079.8,240.3 1080.6,240.5 1081.4,239.3 1082.2,238.0 1083.0,237.7 1083.8,237.1 1084.6,236.1 1085.4,236.0 1086.2,236.1 1087.0,235.9 1087.8,235.5 1088.6,235.4 1089.4,234.8 1090.2,234.8 1091.0,235.0 1091.8,235.0 1092.6,234.7 1093.4,235.4 1094.2,235.2 1095.0,236.6 1095.8,238.1 1096.6,240.0 1097.4,241.2 1098.2,242.4 1099.0,242.9 1099.8,241.6 1100.6,240.5 1101.4,239.9 1102.2,237.9 1103.0,236.3 1103.8,236.1 1104.6,235.0 1105.4,235.0 1106.2,235.4 1107.0,234.4 1107.8,233.9 1108.6,233.8 1109.4,233.9 1110.2,233.8 1111.0,233.7 1111.8,234.2 1112.6,233.6 1113.4,233.9 1114.2,234.8 1115.0,236.6 1115.8,237.5 1116.6,239.3 1117.4,239.5 1118.2,239.1 1119.0,239.5 1119.8,238.5 1120.6,236.4 1121.4,236.2 1122.2,234.9 1123.0,234.7 1123.8,234.3 1124.6,233.6 1125.4,233.5 1126.2,232.4 1127.0,231.5 1127.8,232.5 1128.6,231.9 1129.4,232.8 1130.2,232.2 1131.0,232.0 1131.8,231.9 1132.6,232.6 1133.4,233.1 1134.2,235.2 1135.0,236.9 1135.8,238.0 1136.6,238.3 1137.4,238.7 1138.2,238.0 1139.0,237.1 1139.8,234.9 1140.6,234.2 1141.4,233.6 1142.2,232.8 1143.0,232.6 1143.8,232.9 1144.6,233.0 1145.4,232.1 1146.2,232.7 1147.0,233.1 1147.8,232.2 1148.6,232.6 1149.4,232.5 1150.2,232.3 1151.0,232.3 1151.8,232.9 1152.6,232.6 1153.4,236.0 1154.2,238.2 1155.0,239.8 1155.8,240.3 1156.6,241.2 1157.4,240.0 1158.2,238.6 1159.0,236.1 1159.8,235.0 1160.6,234.3 1161.4,232.2 1162.2,233.1 1163.0,231.8 1163.8,232.4 1164.6,231.3 1165.4,232.0 1166.2,231.5 1167.0,232.6 1167.8,232.3 1168.6,232.2 1169.4,232.1 1170.2,232.4 1171.0,232.9 1171.8,234.2 1172.6,236.2 1173.4,238.6 1174.2,240.6 1175.0,241.3 1175.8,240.8 1176.6,240.5 1177.4,238.8 1178.2,237.8 1179.0,236.3 1179.8,235.5 1180.6,234.9 1181.4,234.6 1182.2,233.3 1183.0,233.2 1183.8,233.1 1184.6,232.5 1185.4,233.6 1186.2,232.7 1187.0,232.8 1187.8,232.3 1188.6,232.4 1189.4,232.4 1190.2,233.5 1191.0,235.2 1191.8,238.4 1192.6,240.2 1193.4,241.9 1194.2,241.7 1195.0,241.0 1195.8,241.3 1196.6,239.1 1197.4,237.6 1198.2,236.7 1199.0,236.0 1199.8,236.0 1200.6,235.1 1201.4,234.9 1202.2,233.8 1203.0,234.1 1203.8,234.0 1204.6,234.2 1205.4,233.6 1206.2,233.4 1207.0,233.5 1207.8,233.3 1208.6,233.3 1209.4,234.3 1210.2,237.3 1211.0,239.5 1211.8,240.1 1212.6,242.4 1213.4,242.8 1214.2,242.0 1215.0,242.2 1215.8,239.8 1216.6,238.5 1217.4,236.9 1218.2,237.0 1219.0,235.6 1219.8,235.1 1220.6,234.8 1221.4,234.9 1222.2,234.0 1223.0,233.9 1223.8,233.8 1224.6,234.1 1225.4,233.7 1226.2,232.4 1227.0,233.5 1227.8,234.2 1228.6,235.1 1229.4,237.8 1230.2,239.9 1231.0,242.7 1231.8,243.7 1232.6,243.6 1233.4,243.7 1234.2,243.0 1235.0,240.8 1235.8,239.4 1236.6,237.4 1237.4,237.3 1238.2,235.9 1239.0,235.8 1239.8,234.6 1240.6,234.5 1241.4,234.5 1242.2,234.3 1243.0,233.9 1243.8,233.4 1244.6,233.5 1245.4,233.6 1246.2,232.9 1247.0,232.8 1247.8,234.7 1248.6,237.2 1249.4,239.9 1250.2,242.0 1251.0,244.0 1251.8,244.1 1252.6,243.0 1253.4,243.0 1254.2,240.9 1255.0,239.1 1255.8,236.9 1256.6,237.7 1257.4,236.1 1258.2,235.8 1259.0,235.4 1259.8,235.0 1260.6,234.8 1261.4,234.1 1262.2,233.2 1263.0,233.8 1263.8,233.3 1264.6,233.4 1265.4,234.3 1266.2,233.7 1267.0,235.1 1267.8,236.2 1268.6,238.8 1269.4,239.8 1270.2,241.7 1271.0,241.4 1271.8,241.0 1272.6,239.7 1273.4,237.5 1274.2,237.8 1275.0,235.9 1275.8,235.6 1276.6,234.9 1277.4,234.8 1278.2,233.6 1279.0,234.0 1279.8,232.8 1280.6,232.4 1281.4,232.5 1282.2,232.2 1283.0,232.9 1283.8,233.0 1284.6,232.2 1285.4,232.8 1286.2,233.9 1287.0,235.2 1287.8,238.3 1288.6,240.5 1289.4,240.3 1290.2,240.4 1291.0,239.7 1291.8,239.1 1292.6,238.3 1293.4,237.0 1294.2,236.1 1295.0,235.6 1295.8,234.2 1296.6,234.1 1297.4,233.6 1298.2,233.3 1299.0,233.4 1299.8,233.4 1300.6,232.5 1301.4,232.6 1302.2,233.1 1303.0,232.6 1303.8,232.6 1304.6,233.6 1305.4,235.1 1306.2,236.9 1307.0,239.3 1307.8,241.1 1308.6,242.1 1309.4,242.2 1310.2,241.7 1311.0,239.9 1311.8,237.5 1312.6,236.1 1313.4,235.7 1314.2,233.9 1315.0,233.9 1315.8,233.2 1316.6,232.3 1317.4,231.9 1318.2,232.4 1319.0,231.9 1319.8,232.0 1320.6,232.3 1321.4,232.3 1322.2,232.3 1323.0,232.4 1323.8,232.6 1324.6,234.1 1325.4,236.3 1326.2,238.3 1327.0,239.6 1327.8,241.6 1328.6,241.8 1329.4,240.5 1330.2,238.8 1331.0,237.9 1331.8,235.9 1332.6,235.3 1333.4,234.0 1334.2,234.3 1335.0,233.3 1335.8,232.0 1336.6,232.2 1337.4,232.7 1338.2,232.8 1339.0,232.0 1339.8,232.4 1340.6,232.7 1341.4,232.2 1342.2,232.4 1343.0,233.2 1343.8,234.8 1344.6,238.4 1345.4,240.7 1346.2,241.6 1347.0,242.9 1347.8,242.6 1348.6,241.8 1349.4,240.1 1350.2,238.0 1351.0,237.1 1351.8,235.9 1352.6,235.3 1353.4,234.2 1354.2,233.8 1355.0,233.8 1355.8,233.1 1356.6,233.0 1357.4,232.4 1358.2,232.5 1359.0,232.5 1359.8,232.3 1360.6,231.7 1361.4,232.2 1362.2,233.3 1363.0,235.8 1363.8,237.7 1364.6,240.7 1365.4,242.2 1366.2,242.2 1367.0,242.7 1367.8,241.6 1368.6,240.0 1369.4,238.1 1370.2,237.2 1371.0,235.3 1371.8,235.2 1372.6,235.1 1373.4,235.1 1374.2,234.0 1375.0,234.1 1375.8,233.7 1376.6,233.6 1377.4,232.5 1378.2,232.8 1379.0,233.2 1379.8,233.1 1380.6,233.5 1381.4,234.2 1382.2,235.5 1383.0,237.9 1383.8,239.8 1384.6,241.3 1385.4,240.5 1386.2,240.7 1387.0,240.7 1387.8,238.8 1388.6,237.8 1389.4,235.7 1390.2,235.4 1391.0,234.5 1391.8,234.0 1392.6,234.1 1393.4,232.7 1394.2,233.0 1395.0,232.9 1395.8,231.7 1396.6,232.9 1397.4,232.1 1398.2,232.5 1399.0,232.5 1399.8,232.2 1400.6,233.1 1401.4,234.3 1402.2,235.7 1403.0,237.8 1403.8,238.3 1404.6,238.5 1405.4,237.2 1406.2,238.1 1407.0,236.6 1407.8,236.3 1408.6,235.4 1409.4,234.7 1410.2,234.6 1411.0,233.9 1411.8,234.4 1412.6,233.8 1413.4,232.7 1414.2,233.4 1415.0,233.7 1415.8,233.5 1416.6,233.2 1417.4,233.9 1418.2,233.4 1419.0,233.2 1419.8,234.6 1420.6,236.1 1421.4,238.0 1422.2,239.2 1423.0,240.4 1423.8,240.2 1424.6,239.6 1425.4,239.1 1426.2,237.5 1427.0,238.3 1427.8,237.3 1428.6,236.1 1429.4,235.7 1430.2,235.8 1431.0,235.1 1431.8,235.4 1432.6,235.0 1433.4,234.5 1434.2,234.5 1435.0,235.0 1435.8,234.0 1436.6,234.5 1437.4,234.5 1438.2,234.6 1439.0,235.3 1439.8,235.6 1440.6,236.5 1441.4,236.7 1442.2,237.0 1443.0,237.5 1443.8,237.3 1444.6,237.5 1445.4,236.6 1446.2,235.9 1447.0,235.9 1447.8,235.8 1448.6,235.0 1449.4,235.1 1450.2,235.0 1451.0,236.0 1451.8,235.9 1452.6,235.2 1453.4,235.1 1454.2,234.5 1455.0,235.3 1455.8,235.7 1456.6,234.3 1457.4,235.7 1458.2,236.4 1459.0,237.7 1459.8,239.2 1460.6,239.7 1461.4,240.8 1462.2,239.8 1463.0,240.7 1463.8,238.9 1464.6,238.3 1465.4,237.4 1466.2,237.3 1467.0,235.8 1467.8,236.0 1468.6,235.5 1469.4,235.5 1470.2,234.5 1471.0,234.7 1471.8,234.1 1472.6,234.5 1473.4,234.5 1474.2,233.9 1475.0,233.7 1475.8,233.6 1476.6,234.9 1477.4,235.0 1478.2,236.3 1479.0,237.0 1479.8,237.8 1480.6,237.1 1481.4,237.2 1482.2,237.9 1483.0,237.3 1483.8,235.8 1484.6,234.6 1485.4,233.7 1486.2,234.1 1487.0,233.9 1487.8,233.5 1488.6,232.7 1489.4,232.4 1490.2,233.0 1491.0,232.2 1491.8,232.3 1492.6,232.3 1493.4,232.3 1494.2,232.3 1495.0,232.8 1495.8,232.6 1496.6,234.3 1497.4,234.8 1498.2,237.2 1499.0,237.8 1499.8,239.0 1500.6,238.3 1501.4,238.8 1502.2,237.3 1503.0,235.5 1503.8,234.9 1504.6,234.4 1505.4,233.9 1506.2,233.1 1507.0,232.9 1507.8,232.5 1508.6,232.9 1509.4,233.0 1510.2,233.3 1511.0,232.2 1511.8,232.7 1512.6,231.8 1513.4,231.9 1514.2,232.2 1515.0,232.0 1515.8,232.0 1516.6,232.6 1517.4,234.3 1518.2,234.1 1519.0,234.9 1519.8,234.6 1520.6,234.4 1521.4,233.7 1522.2,233.6 1523.0,233.5 1523.8,232.2 1524.6,233.0 1525.4,232.0 1526.2,232.4 1527.0,231.8 1527.8,232.4 1528.6,232.7 1529.4,232.5 1530.2,232.4 1531.0,232.8 1531.8,232.1 1532.6,231.7 1533.4,232.5 1534.2,232.1 1535.0,232.4 1535.8,232.0 1536.6,232.4 1537.4,232.2 1538.2,233.0 1539.0,232.1 1539.8,232.6 1540.6,232.5 1541.4,232.9 1542.2,232.1 1543.0,232.8 1543.8,232.4 1544.6,232.5 1545.4,232.9 1546.2,232.0 1547.0,232.8 1547.8,308.0 1548.6,308.0 1549.4,308.0 1550.2,308.0 1551.0,308.0 1551.8,308.0 1552.6,308.0 1553.4,308.0 1554.2,308.0 1555.0,308.0 1555.8,308.0 1556.6,308.0 1557.4,308.0 1558.2,308.0 1559.0,308.0 1559.8,308.0 1560.6,308.0 1561.4,308.0 1562.2,308.0 1563.0,308.0 1563.8,308.0 1564.6,308.0 1565.4,308.0 1566.2,308.0 1567.0,308.0 1567.8,308.0 1568.6,308.0 1569.4,308.0 1570.2,308.0 1571.0,308.0 1571.8,308.0 1572.6,308.0 1573.4,308.0 1574.2,308.0 1575.0,308.0 1575.8,308.0 1576.6,308.0 1577.4,308.0 1578.2,308.0 1579.0,308.0 1579.8,308.0 1580.6,308.0 1581.4,308.0 1582.2,308.0 1583.0,308.0 1583.8,308.0 1584.6,308.0 1585.4,308.0 1586.2,308.0 1587.0,308.0 1587.8,308.0 1588.6,308.0 1589.4,308.0 1590.2,308.0 1591.0,308.0 1591.8,308.0 1592.6,308.0 1593.4,308.0 1594.2,308.0 1595.0,308.0 1595.8,308.0 1596.6,308.0 1597.4,308.0 1598.2,308.0 1599.0,308.0 1599.8,308.0 1600.6,308.0 1601.4,308.0 1602.2,308.0 1603.0,308.0 1603.8,308.0 1604.6,308.0 1605.4,308.0 1606.2,308.0 1607.0,308.0 1607.8,308.0 1608.6,308.0 1609.4,308.0 1610.2,308.0 1611.0,308.0 1611.8,308.0 1612.6,308.0 1613.4,308.0 1614.2,308.0 1615.0,308.0 1615.8,308.0 1616.6,308.0 1617.4,308.0 1618.2,308.0 1619.0,308.0 1619.8,308.0 1620.6,308.0 1621.4,308.0 1622.2,308.0 1623.0,308.0 1623.8,308.0 1624.6,308.0 1625.4,308.0 1626.2,308.0 1627.0,308.0 1627.8,308.0 1628.6,308.0 1629.4,308.0 1630.2,308.0 1631.0,308.0 1631.8,308.0 1632.6,308.0 1633.4,308.0 1634.2,308.0 1635.0,308.0 1635.8,308.0 1636.6,308.0 1637.4,308.0 1638.2,308.0 1639.0,308.0 1639.8,308.0 1640.6,308.0 1641.4,308.0 1642.2,308.0 1643.0,308.0 1643.8,308.0 1644.6,308.0 1645.4,308.0 1646.2,308.0 1647.0,308.0 1647.8,308.0 1648.6,308.0 1649.4,308.0 1650.2,308.0 1651.0,308.0 1651.8,308.0 1652.6,308.0 1653.4,308.0 1654.2,308.0 1655.0,308.0 1655.8,308.0 1656.6,308.0 1657.4,308.0 1658.2,308.0 1659.0,308.0 1659.8,308.0 1660.6,308.0 1661.4,308.0 1662.2,308.0 1663.0,308.0 1663.8,308.0 1664.6,308.0 1665.4,308.0 1666.2,308.0 1667.0,308.0 1667.8,308.0 1668.6,308.0 1669.4,308.0 1670.2,308.0 1671.0,308.0 1671.8,308.0 1672.6,308.0 1673.4,308.0 1674.2,308.0 1675.0,308.0 1675.8,308.0 1676.6,308.0 1677.4,308.0 1678.2,308.0 1679.0,308.0 1679.8,308.0 1680.6,308.0 1681.4,308.0 1682.2,308.0 1683.0,308.0 1683.8,308.0 1684.6,308.0 1685.4,308.0 1686.2,308.0 1687.0,308.0 1687.8,308.0 1688.6,308.0 1689.4,308.0 1690.2,308.0 1691.0,308.0 1691.8,308.0 1692.6,308.0 1693.4,308.0 1694.2,308.0 1695.0,308.0 1695.8,308.0 1696.6,308.0 1697.4,308.0 1698.2,308.0 1699.0,308.0 1699.8,308.0 1700.6,308.0 1701.4,308.0 1702.2,308.0 1703.0,308.0 1703.8,308.0 1704.6,308.0 1705.4,308.0 1706.2,308.0 1707.0,308.0 1707.8,308.0 1708.6,308.0 1709.4,308.0 1710.2,308.0 1711.0,308.0 1711.8,308.0 1712.6,308.0 1713.4,308.0 1714.2,308.0 1715.0,308.0 1715.8,308.0 1716.6,308.0 1717.4,308.0 1718.2,308.0 1719.0,308.0 1719.8,308.0 1720.6,308.0 1721.4,308.0 1722.2,308.0 1723.0,308.0 1723.8,308.0 1724.6,308.0 1725.4,308.0 1726.2,308.0 1727.0,308.0 1727.8,308.0 1728.6,308.0 1729.4,308.0 1730.2,308.0 1731.0,308.0 1731.8,308.0 1732.6,308.0 1733.4,308.0 1734.2,308.0 1735.0,308.0 1735.8,308.0 1736.6,308.0 1737.4,308.0 1738.2,308.0 1739.0,308.0 1739.8,308.0 1740.6,308.0 1741.4,308.0 1742.2,308.0 1743.0,308.0 1743.8,308.0 1744.6,308.0 1745.4,308.0 1746.2,308.0 1747.0,308.0 1747.8,308.0 1748.6,308.0 1749.4,308.0 1750.2,308.0 1751.0,308.0 1751.8,308.0 1752.6,308.0 1753.4,308.0 1754.2,308.0 1755.0,308.0 1755.8,308.0 1756.6,308.0 1757.4,308.0 1758.2,308.0 1759.0,308.0 1759.8,308.0 1760.6,234.9 1761.4,234.1 1762.2,233.7 1763.0,235.0 1763.8,236.0 1764.6,238.2 1765.4,240.5 1766.2,242.5 1767.0,244.1 1767.8,242.9 1768.6,244.0 1769.4,241.7 1770.2,240.4 1771.0,239.8 1771.8,238.4 1772.6,237.6 1773.4,237.7 1774.2,236.4 1775.0,235.5 1775.8,235.3 1776.6,234.9 1777.4,235.1 1778.2,235.5 1779.0,235.4 1779.8,234.9 1780.6,235.0 1781.4,234.8 1782.2,235.2 1783.0,236.2 1783.8,238.3 1784.6,240.5 1785.4,242.4 1786.2,243.2 1787.0,243.7 1787.8,242.9 1788.6,242.2 1789.4,240.4 1790.2,239.3 1791.0,238.6 1791.8,237.7 1792.6,236.7 1793.4,236.8 1794.2,236.2 1795.0,235.7 1795.8,235.8 1796.6,235.4 1797.4,235.1 1798.2,234.5 1799.0,234.7 1799.8,235.5 1800.6,234.9 1801.4,235.9 1802.2,237.0 1803.0,238.5 1803.8,240.3 1804.6,241.6 1805.4,242.8 1806.2,242.6 1807.0,242.3 1807.8,240.9 1808.6,239.7 1809.4,239.2 1810.2,239.0 1811.0,237.9 1811.8,237.7 1812.6,236.4 1813.4,236.8 1814.2,236.6 1815.0,235.9 1815.8,236.3 1816.6,235.8 1817.4,235.7 1818.2,236.4 1819.0,236.7 1819.8,236.4 1820.6,236.5 1821.4,237.1 1822.2,238.4 1823.0,239.5 1823.8,240.9 1824.6,240.1 1825.4,240.0 1826.2,240.8 1827.0,238.9 1827.8,237.9 1828.6,236.3 1829.4,235.7 1830.2,235.3 1831.0,235.5 1831.8,235.5 1832.6,234.0 1833.4,235.1 1834.2,234.2 1835.0,234.0 1835.8,234.2 1836.6,233.7 1837.4,234.2 1838.2,233.7 1839.0,233.8 1839.8,235.4 1840.6,236.7 1841.4,237.5 1842.2,240.0 1843.0,242.2 1843.8,241.4 1844.6,241.9 1845.4,241.8 1846.2,239.8 1847.0,238.5 1847.8,237.2 1848.6,236.1 1849.4,235.5 1850.2,235.9 1851.0,235.0 1851.8,234.5 1852.6,234.7 1853.4,233.8 1854.2,233.6 1855.0,233.8 1855.8,234.7 1856.6,233.3 1857.4,233.3 1858.2,233.6 1859.0,234.4 1859.8,236.0 1860.6,238.1 1861.4,239.7 1862.2,241.3 1863.0,241.6 1863.8,241.0 1864.6,241.4 1865.4,240.2 1866.2,239.2 1867.0,237.8 1867.8,236.9 1868.6,236.4 1869.4,236.4 1870.2,235.9 1871.0,235.5 1871.8,235.8 1872.6,234.9 1873.4,235.6 1874.2,234.5 1875.0,234.6 1875.8,234.2 1876.6,234.4 1877.4,235.2 1878.2,235.4 1879.0,237.0 1879.8,240.4 1880.6,241.5 1881.4,243.3 1882.2,243.7 1883.0,243.5 1883.8,242.8 1884.6,241.2 1885.4,239.4 1886.2,238.4 1887.0,237.5 1887.8,236.9 1888.6,236.1 1889.4,236.3 1890.2,235.6 1891.0,235.8 1891.8,235.7 1892.6,236.1 1893.4,235.4 1894.2,235.5 1895.0,234.9 1895.8,235.5 1896.6,235.3 1897.4,236.1 1898.2,237.9 1899.0,239.1 1899.8,241.1 1900.6,242.4 1901.4,242.7" fill="none" stroke="#9c1f8f" stroke-width="1.650" stroke-linejoin="round"/><path d="M159.0,387.7 159.7,377.6 160.4,367.5 161.1,360.0 161.8,354.9 162.5,356.0 163.2,357.2 163.9,359.5 164.6,369.3 165.3,377.2 166.0,383.6 166.7,388.6 167.4,392.7 168.1,396.4 168.8,399.4 169.5,401.3 170.2,402.5 170.9,405.5 171.6,406.8 172.3,407.2 173.0,407.7 173.7,408.6 174.4,409.2 175.1,409.6 175.8,409.9 176.5,409.7 177.2,405.9 177.9,398.0 178.6,387.8 179.3,376.8 180.0,366.9 180.7,359.8 181.4,359.6 182.1,363.6 182.8,362.1 183.5,369.3 184.2,376.6 184.9,381.7 185.6,387.1 186.3,391.4 187.0,393.1 187.7,396.0 188.4,397.1 189.1,398.2 189.8,400.9 190.5,402.3 191.2,402.7 191.9,404.3 192.6,404.8 193.3,405.4 194.0,406.0 194.7,405.9 195.4,406.0 196.1,403.0 196.8,395.4 197.5,384.6 198.2,372.2 198.9,362.3 199.6,355.4 200.3,350.4 201.0,352.3 201.7,353.7 202.4,357.9 203.1,366.6 203.8,374.9 204.5,379.8 205.2,384.3 205.9,388.5 206.6,391.0 207.3,393.3 208.0,395.1 208.7,396.8 209.4,397.5 210.1,398.3 210.8,399.6 211.5,400.4 212.2,401.2 212.9,402.1 213.6,402.2 214.3,402.3 215.0,401.8 215.7,395.0 216.4,386.4 217.1,376.1 217.8,364.4 218.5,359.0 219.2,353.6 219.9,353.3 220.6,355.4 221.3,357.4 222.0,365.2 222.7,372.5 223.4,377.4 224.1,382.0 224.8,386.0 225.5,387.8 226.2,389.2 226.9,392.4 227.6,394.9 228.3,395.5 229.0,396.1 229.7,397.4 230.4,398.1 231.1,398.6 231.8,399.7 232.5,399.1 233.2,400.3 233.9,399.3 234.6,396.1 235.3,389.2 236.0,381.0 236.7,372.0 237.4,364.9 238.1,361.0 238.8,359.6 239.5,360.9 240.2,362.6 240.9,369.0 241.6,375.7 242.3,381.4 243.0,386.3 243.7,388.9 244.4,391.8 245.1,394.0 245.8,396.0 246.5,398.6 247.2,400.1 247.9,401.1 248.6,401.9 249.3,402.1 250.0,402.5 250.7,403.1 251.4,403.7 252.1,404.0 252.8,403.9 253.5,403.1 254.2,397.7 254.9,391.8 255.6,385.2 256.3,379.3 257.0,371.2 257.7,373.3 258.4,376.3 259.1,373.9 259.8,377.7 260.5,382.1 261.2,385.1 261.9,387.6 262.6,388.2 263.3,390.7 264.0,392.2 264.7,393.7 265.4,394.7 266.1,393.9 266.8,396.0 267.5,395.4 268.2,396.7 268.9,396.1 269.6,397.0 270.3,397.6 271.0,397.3 271.7,397.5 272.4,396.2 273.1,391.5 273.8,385.2 274.5,379.1 275.2,373.5 275.9,366.3 276.6,363.3 277.3,365.5 278.0,365.7 278.7,367.8 279.4,372.2 280.1,376.0 280.8,379.0 281.5,381.1 282.2,383.5 282.9,385.9 283.6,387.3 284.3,388.2 285.0,388.8 285.7,389.2 286.4,390.7 287.1,390.4 287.8,391.2 288.5,391.8 289.2,392.1 289.9,391.9 290.6,392.7 291.3,391.4 292.0,391.0 292.7,388.5 293.4,386.0 294.1,383.1 294.8,382.3 295.5,377.5 296.2,381.0 296.9,381.8 297.6,382.0 298.3,382.0 299.0,383.9 299.7,386.3 300.4,387.2 301.1,388.1 301.8,388.8 302.5,388.6 303.2,389.0 303.9,390.6 304.6,390.5 305.3,391.8 306.0,391.9 306.7,391.7 307.4,392.1 308.1,392.6 308.8,392.4 309.5,393.0 310.2,392.8 310.9,390.4 311.6,385.7 312.3,380.5 313.0,374.5 313.7,368.1 314.4,366.5 315.1,363.3 315.8,363.3 316.5,365.7 317.2,370.6 317.9,374.7 318.6,378.7 319.3,381.7 320.0,383.7 320.7,385.3 321.4,387.3 322.1,389.8 322.8,390.6 323.5,391.7 324.2,392.0 324.9,393.1 325.6,393.6 326.3,393.8 327.0,394.0 327.7,394.5 328.4,394.7 329.1,395.6 329.8,394.8 330.5,392.1 331.2,388.8 331.9,385.4 332.6,381.3 333.3,379.8 334.0,377.0 334.7,380.3 335.4,377.2 336.1,382.7 336.8,386.8 337.5,390.1 338.2,394.2 338.9,396.2 339.6,397.3 340.3,399.0 341.0,399.9 341.7,400.8 342.4,403.0 343.1,403.9 343.8,404.5 344.5,404.8 345.2,405.6 345.9,405.6 346.6,405.7 347.3,404.9 348.0,406.3 348.7,406.1 349.4,402.5 350.1,396.6 350.8,390.4 351.5,383.3 352.2,374.4 352.9,375.6 353.6,376.1 354.3,375.8 355.0,376.1 355.7,383.4 356.4,387.8 357.1,392.1 357.8,394.7 358.5,398.1 359.2,400.1 359.9,401.2 360.6,402.1 361.3,402.9 362.0,403.7 362.7,405.5 363.4,405.6 364.1,406.2 364.8,407.3 365.5,406.8 366.2,407.3 366.9,407.3 367.6,407.4 368.3,406.5 369.0,403.1 369.7,401.2 370.4,397.6 371.1,394.0 371.8,394.9 372.5,395.6 373.2,391.1 373.9,392.8 374.6,396.2 375.3,398.8 376.0,400.8 376.7,402.3 377.4,404.7 378.1,405.3 378.8,405.7 379.5,406.6 380.2,408.4 380.9,408.6 381.6,409.4 382.3,409.3 383.0,408.9 383.7,409.5 384.4,408.8 385.1,409.5 385.8,409.9 386.5,410.2 387.2,409.8 387.9,409.0 388.6,407.8 389.3,406.7 390.0,404.7 390.7,406.6 391.4,403.5 392.1,406.0 392.8,405.1 393.5,406.1 394.2,407.0 394.9,407.9 395.6,409.4 396.3,409.6 397.0,409.8 397.7,410.2 398.4,409.3 399.1,410.7 399.8,411.9 400.5,412.2 401.2,411.5 401.9,412.3 402.6,412.4 403.3,411.9 404.0,411.8 404.7,412.4 405.4,412.8 406.1,412.2 406.8,410.2 407.5,408.1 408.2,404.9 408.9,401.8 409.6,401.2 410.3,399.2 411.0,398.2 411.7,399.5 412.4,401.2 413.1,401.7 413.8,403.4 414.5,403.9 415.2,405.4 415.9,406.7 416.6,407.0 417.3,408.2 418.0,408.4 418.7,408.6 419.4,407.5 420.1,408.6 420.8,409.2 421.5,409.4 422.2,409.7 422.9,410.8 423.6,409.7 424.3,410.3 425.0,409.5 425.7,405.6 426.4,397.6 427.1,387.6 427.8,377.4 428.5,369.2 429.2,363.0 429.9,363.3 430.6,365.3 431.3,365.3 432.0,370.5 432.7,376.0 433.4,378.9 434.1,383.5 434.8,386.8 435.5,389.1 436.2,391.9 436.9,392.9 437.6,393.9 438.3,396.4 439.0,396.6 439.7,397.4 440.4,397.4 441.1,397.8 441.8,398.7 442.5,397.8 443.2,398.3 443.9,398.5 444.6,396.0 445.3,390.8 446.0,383.0 446.7,373.3 447.4,364.5 448.1,359.1 448.8,358.1 449.5,358.1 450.2,361.4 450.9,365.3 451.6,371.4 452.3,376.4 453.0,380.7 453.7,383.8 454.4,385.4 455.1,387.8 455.8,389.2 456.5,390.5 457.2,391.6 457.9,392.2 458.6,393.4 459.3,393.5 460.0,394.2 460.7,395.1 461.4,395.4 462.1,395.6 462.8,395.9 463.5,394.6 464.2,390.3 464.9,383.5 465.6,374.9 466.3,366.4 467.0,359.2 467.7,358.8 468.4,357.3 469.1,357.1 469.8,359.8 470.5,366.8 471.2,372.0 471.9,375.4 472.6,378.6 473.3,382.4 474.0,383.8 474.7,386.1 475.4,387.1 476.1,388.1 476.8,388.9 477.5,390.2 478.2,390.0 478.9,390.1 479.6,391.0 480.3,391.9 481.0,391.2 481.7,392.0 482.4,392.5 483.1,386.7 483.8,378.7 484.5,367.9 485.2,357.8 485.9,345.9 486.6,342.4 487.3,344.1 488.0,345.9 488.7,349.5 489.4,353.6 490.1,360.5 490.8,364.8 491.5,368.4 492.2,372.5 492.9,376.1 493.6,378.9 494.3,380.1 495.0,382.5 495.7,382.8 496.4,384.3 497.1,385.9 497.8,385.6 498.5,386.2 499.2,387.1 499.9,387.0 500.6,386.9 501.3,387.6 502.0,385.6 502.7,381.1 503.4,375.3 504.1,368.3 504.8,365.3 505.5,362.3 506.2,358.4 506.9,357.0 507.6,360.8 508.3,365.6 509.0,368.8 509.7,374.8 510.4,376.3 511.1,379.1 511.8,381.8 512.5,384.3 513.2,385.8 513.9,386.8 514.6,387.9 515.3,388.2 516.0,389.3 516.7,389.4 517.4,389.9 518.1,390.8 518.8,390.7 519.5,391.1 520.2,391.8 520.9,389.6 521.6,385.8 522.3,378.7 523.0,371.5 523.7,364.5 524.4,359.4 525.1,355.7 525.8,358.5 526.5,357.5 527.2,361.8 527.9,368.1 528.6,373.0 529.3,376.7 530.0,379.6 530.7,382.5 531.4,384.3 532.1,386.8 532.8,387.7 533.5,387.9 534.2,387.8 534.9,388.7 535.6,390.1 536.3,391.1 537.0,391.7 537.7,392.1 538.4,392.4 539.1,393.2 539.8,392.4 540.5,388.3 541.2,382.1 541.9,374.7 542.6,367.4 543.3,361.6 544.0,358.8 544.7,358.9 545.4,359.4 546.1,362.5 546.8,368.7 547.5,373.7 548.2,378.7 548.9,383.3 549.6,385.9 550.3,388.6 551.0,390.2 551.7,392.0 552.4,393.6 553.1,396.1 553.8,396.3 554.5,397.1 555.2,396.8 555.9,397.2 556.6,398.3 557.3,398.9 558.0,398.8 558.7,399.3 559.4,395.7 560.1,388.8 560.8,380.7 561.5,371.1 562.2,364.1 562.9,357.0 563.6,357.4 564.3,358.7 565.0,357.5 565.7,366.8 566.4,372.8 567.1,377.2 567.8,382.6 568.5,385.7 569.2,388.2 569.9,389.3 570.6,390.6 571.3,393.9 572.0,396.2 572.7,396.4 573.4,397.0 574.1,397.6 574.8,398.1 575.5,399.2 576.2,400.1 576.9,399.9 577.6,400.1 578.3,398.9 579.0,391.9 579.7,383.8 580.4,373.7 581.1,364.7 581.8,360.3 582.5,357.4 583.2,356.3 583.9,358.0 584.6,361.9 585.3,368.4 586.0,373.1 586.7,376.7 587.4,378.9 588.1,382.7 588.8,384.0 589.5,385.2 590.2,386.4 590.9,387.7 591.6,389.1 592.3,391.2 593.0,390.7 593.7,390.9 594.4,392.1 595.1,392.0 595.8,392.0 596.5,392.0 597.2,391.8 597.9,387.6 598.6,380.5 599.3,373.2 600.0,365.1 600.7,358.4 601.4,356.9 602.1,354.4 602.8,357.0 603.5,359.3 604.2,366.9 604.9,372.0 605.6,376.7 606.3,379.3 607.0,381.8 607.7,385.3 608.4,387.1 609.1,390.1 609.8,390.2 610.5,391.5 611.2,392.3 611.9,393.4 612.6,393.0 613.3,393.1 614.0,394.5 614.7,394.9 615.4,395.1 616.1,395.8 616.8,390.1 617.5,383.8 618.2,374.3 618.9,363.6 619.6,358.4 620.3,350.7 621.0,350.1 621.7,352.7 622.4,355.1 623.1,358.7 623.8,366.4 624.5,371.1 625.2,374.6 625.9,378.7 626.6,381.4 627.3,384.1 628.0,386.0 628.7,387.2 629.4,387.7 630.1,390.1 630.8,390.8 631.5,391.4 632.2,391.3 632.9,392.0 633.6,392.3 634.3,391.6 635.0,392.4 635.7,390.2 636.4,384.1 637.1,376.0 637.8,366.7 638.5,358.3 639.2,350.4 639.9,352.8 640.6,352.4 641.3,353.1 642.0,357.9 642.7,364.2 643.4,369.8 644.1,373.7 644.8,377.3 645.5,379.0 646.2,381.4 646.9,383.3 647.6,385.6 648.3,386.5 649.0,387.7 649.7,389.1 650.4,389.0 651.1,389.9 651.8,390.7 652.5,390.4 653.2,391.2 653.9,390.6 654.6,389.0 655.3,385.5 656.0,378.7 656.7,370.2 657.4,362.6 658.1,358.2 658.8,350.3 659.5,355.0 660.2,356.8 660.9,359.4 661.6,363.0 662.3,366.9 663.0,371.4 663.7,373.7 664.4,376.5 665.1,378.9 665.8,379.6 666.5,381.9 667.2,382.6 667.9,383.2 668.6,383.4 669.3,383.6 670.0,384.7 670.7,385.2 671.4,385.1 672.1,385.6 672.8,386.7 673.5,385.7 674.2,384.1 674.9,380.4 675.6,375.5 676.3,370.7 677.0,367.5 677.7,366.9 678.4,363.8 679.1,365.0 679.8,367.4 680.5,371.3 681.2,377.5 681.9,381.4 682.6,384.9 683.3,387.0 684.0,389.0 684.7,390.9 685.4,392.4 686.1,393.2 686.8,394.3 687.5,395.0 688.2,395.3 688.9,396.1 689.6,396.0 690.3,396.7 691.0,396.1 691.7,398.1 692.4,396.8 693.1,393.7 693.8,388.6 694.5,380.0 695.2,371.0 695.9,361.0 696.6,357.7 697.3,356.1 698.0,357.3 698.7,359.4 699.4,364.4 700.1,371.3 700.8,374.9 701.5,379.6 702.2,383.0 702.9,386.9 703.6,387.9 704.3,389.7 705.0,391.6 705.7,392.1 706.4,394.6 707.1,395.3 707.8,395.4 708.5,395.9 709.2,396.4 709.9,397.1 710.6,397.3 711.3,397.7 712.0,396.5 712.7,391.2 713.4,383.7 714.1,375.5 714.8,367.8 715.5,363.2 716.2,360.6 716.9,359.1 717.6,362.5 718.3,364.3 719.0,369.3 719.7,374.6 720.4,377.8 721.1,380.7 721.8,383.5 722.5,385.5 723.2,385.7 723.9,386.5 724.6,387.4 725.3,390.3 726.0,390.1 726.7,391.4 727.4,391.1 728.1,392.0 728.8,392.9 729.5,391.2 730.2,392.2 730.9,392.1 731.6,387.6 732.3,379.1 733.0,370.2 733.7,360.3 734.4,354.4 735.1,348.1 735.8,349.9 736.5,351.2 737.2,350.4 737.9,359.0 738.6,365.6 739.3,370.2 740.0,374.0 740.7,377.2 741.4,379.8 742.1,382.1 742.8,383.5 743.5,384.9 744.2,385.5 744.9,386.6 745.6,387.0 746.3,388.4 747.0,389.1 747.7,389.2 748.4,390.2 749.1,390.5 749.8,390.3 750.5,387.0 751.2,382.0 751.9,373.9 752.6,366.8 753.3,359.5 754.0,356.1 754.7,354.3 755.4,354.2 756.1,359.2 756.8,363.0 757.5,368.8 758.2,374.1 758.9,378.4 759.6,380.8 760.3,383.8 761.0,386.1 761.7,387.8 762.4,388.8 763.1,389.2 763.8,391.0 764.5,390.6 765.2,391.2 765.9,392.3 766.6,393.2 767.3,393.3 768.0,393.3 768.7,393.7 769.4,392.2 770.1,387.9 770.8,381.6 771.5,374.6 772.2,368.5 772.9,364.2 773.6,361.2 774.3,362.7 775.0,365.5 775.7,371.0 776.4,377.2 777.1,383.1 777.8,388.8 778.5,393.1 779.2,396.2 779.9,398.8 780.6,400.3 781.3,401.7 782.0,402.7 782.7,405.0 783.4,406.5 784.1,406.9 784.8,407.9 785.5,408.2 786.2,408.4 786.9,408.1 787.6,409.3 788.3,408.2 789.0,403.8 789.7,393.8 790.4,385.2 791.1,375.0 791.8,370.1 792.5,369.5 793.2,362.1 793.9,367.5 794.6,369.5 795.3,376.6 796.0,383.4 796.7,387.5 797.4,392.7 798.1,395.1 798.8,396.5 799.5,398.8 800.2,402.2 800.9,403.6 801.6,405.1 802.3,405.7 803.0,405.8 803.7,407.3 804.4,407.9 805.1,408.5 805.8,408.2 806.5,408.8 807.2,409.3 807.9,404.4 808.6,397.0 809.3,386.9 810.0,377.0 810.7,368.0 811.4,361.1 812.1,362.6 812.8,362.4 813.5,367.7 814.2,370.8 814.9,377.9 815.6,383.1 816.3,387.2 817.0,391.8 817.7,394.1 818.4,395.8 819.1,398.6 819.8,399.5 820.5,402.0 821.2,401.4 821.9,402.4 822.6,403.2 823.3,403.3 824.0,404.4 824.7,405.1 825.4,405.5 826.1,405.2 826.8,401.9 827.5,395.5 828.2,386.7 828.9,376.9 829.6,368.5 830.3,362.0 831.0,358.9 831.7,360.5 832.4,359.9 833.1,367.2 833.8,375.0 834.5,381.0 835.2,385.3 835.9,388.3 836.6,391.6 837.3,394.6 838.0,397.5 838.7,399.1 839.4,400.3 840.1,401.8 840.8,402.0 841.5,402.8 842.2,403.1 842.9,403.6 843.6,405.0 844.3,405.4 845.0,404.9 845.7,403.7 846.4,396.6 847.1,385.7 847.8,374.2 848.5,362.9 849.2,353.0 849.9,348.4 850.6,349.8 851.3,354.0 852.0,351.9 852.7,362.5 853.4,367.6 854.1,371.3 854.8,375.6 855.5,379.5 856.2,382.2 856.9,384.6 857.6,386.3 858.3,387.8 859.0,388.7 859.7,389.6 860.4,389.4 861.1,390.6 861.8,391.5 862.5,392.0 863.2,391.7 863.9,392.1 864.6,392.0 865.3,388.3 866.0,381.3 866.7,371.7 867.4,362.5 868.1,353.0 868.8,353.6 869.5,350.8 870.2,351.8 870.9,351.6 871.6,359.6 872.3,365.4 873.0,370.9 873.7,375.1 874.4,378.2 875.1,380.9 875.8,382.3 876.5,384.1 877.2,383.8 877.9,385.2 878.6,387.7 879.3,388.4 880.0,388.9 880.7,389.6 881.4,390.3 882.1,390.0 882.8,390.7 883.5,391.5 884.2,388.5 884.9,381.9 885.6,373.5 886.3,365.1 887.0,358.1 887.7,350.5 888.4,348.8 889.1,354.4 889.8,352.5 890.5,358.8 891.2,366.0 891.9,371.1 892.6,375.9 893.3,379.4 894.0,383.4 894.7,385.4 895.4,387.8 896.1,388.5 896.8,390.6 897.5,390.8 898.2,391.4 898.9,391.7 899.6,393.2 900.3,394.2 901.0,394.3 901.7,394.6 902.4,395.1 903.1,393.2 903.8,387.0 904.5,378.4 905.2,368.3 905.9,358.9 906.6,351.2 907.3,346.8 908.0,349.5 908.7,349.5 909.4,356.2 910.1,363.0 910.8,368.2 911.5,374.3 912.2,378.6 912.9,381.1 913.6,385.3 914.3,387.0 915.0,389.3 915.7,389.4 916.4,391.2 917.1,392.1 917.8,392.8 918.5,393.4 919.2,394.3 919.9,393.7 920.6,394.1 921.3,394.3 922.0,394.9 922.7,389.8 923.4,381.2 924.1,371.6 924.8,361.4 925.5,353.7 926.2,349.3 926.9,351.1 927.6,350.7 928.3,351.0 929.0,358.8 929.7,366.6 930.4,369.8 931.1,374.6 931.8,377.7 932.5,380.3 933.2,382.0 933.9,383.7 934.6,384.6 935.3,385.8 936.0,387.3 936.7,387.8 937.4,389.0 938.1,390.1 938.8,390.3 939.5,390.4 940.2,390.3 940.9,390.4 941.6,387.9 942.3,381.3 943.0,372.6 943.7,365.2 944.4,358.5 945.1,355.1 945.8,351.2 946.5,356.5 947.2,355.2 947.9,363.0 948.6,367.7 949.3,373.3 950.0,376.4 950.7,378.8 951.4,383.3 952.1,386.3 952.8,388.6 953.5,389.9 954.2,390.5 954.9,391.0 955.6,392.2 956.3,392.9 957.0,393.3 957.7,394.3 958.4,394.6 959.1,394.6 959.8,395.0 960.5,392.6 961.2,385.2 961.9,375.7 962.6,365.0 963.3,354.4 964.0,345.8 964.7,345.6 965.4,346.5 966.1,345.5 966.8,351.3 967.5,359.5 968.2,366.1 968.9,371.2 969.6,375.0 970.3,377.6 971.0,381.3 971.7,383.5 972.4,384.8 973.1,387.2 973.8,387.9 974.5,388.9 975.2,388.9 975.9,390.5 976.6,390.9 977.3,391.5 978.0,391.4 978.7,392.5 979.4,391.0 980.1,385.9 980.8,376.6 981.5,366.6 982.2,356.6 982.9,349.8 983.6,347.8 984.3,345.7 985.0,350.4 985.7,351.1 986.4,358.0 987.1,364.7 987.8,370.7 988.5,374.3 989.2,377.9 989.9,380.4 990.6,383.3 991.3,385.5 992.0,386.6 992.7,387.3 993.4,387.9 994.1,389.3 994.8,389.6 995.5,391.1 996.2,391.0 996.9,391.1 997.6,391.5 998.3,391.4 999.0,387.4 999.7,378.5 1000.4,368.8 1001.1,359.2 1001.8,350.2 1002.5,343.2 1003.2,345.0 1003.9,348.3 1004.6,349.1 1005.3,353.3 1006.0,361.1 1006.7,365.9 1007.4,370.2 1008.1,373.9 1008.8,378.0 1009.5,381.2 1010.2,382.9 1010.9,384.5 1011.6,385.3 1012.3,387.3 1013.0,387.7 1013.7,388.0 1014.4,389.1 1015.1,390.0 1015.8,389.4 1016.5,390.4 1017.2,390.0 1017.9,388.5 1018.6,382.2 1019.3,373.6 1020.0,364.1 1020.7,357.4 1021.4,353.5 1022.1,350.7 1022.8,352.7 1023.5,354.5 1024.2,357.5 1024.9,362.7 1025.6,368.5 1026.3,372.6 1027.0,375.0 1027.7,378.2 1028.4,380.0 1029.1,382.3 1029.8,384.0 1030.5,384.4 1031.2,384.6 1031.9,386.3 1032.6,386.8 1033.3,388.1 1034.0,387.5 1034.7,388.8 1035.4,389.5 1036.1,389.7 1036.8,387.8 1037.5,382.9 1038.2,374.9 1038.9,366.8 1039.6,358.1 1040.3,350.7 1041.0,348.9 1041.7,351.2 1042.4,351.3 1043.1,351.0 1043.8,361.5 1044.5,368.2 1045.2,373.5 1045.9,377.1 1046.6,380.6 1047.3,383.2 1048.0,385.5 1048.7,386.7 1049.4,388.6 1050.1,389.7 1050.8,390.7 1051.5,391.6 1052.2,392.7 1052.9,392.7 1053.6,392.8 1054.3,393.0 1055.0,394.0 1055.7,393.2 1056.4,389.4 1057.1,381.2 1057.8,372.4 1058.5,362.5 1059.2,354.4 1059.9,351.4 1060.6,349.8 1061.3,352.3 1062.0,355.2 1062.7,359.6 1063.4,365.6 1064.1,370.9 1064.8,374.2 1065.5,377.2 1066.2,378.5 1066.9,382.2 1067.6,383.9 1068.3,385.2 1069.0,387.3 1069.7,387.2 1070.4,388.9 1071.1,389.1 1071.8,389.9 1072.5,389.3 1073.2,390.5 1073.9,390.9 1074.6,391.0 1075.3,388.6 1076.0,384.8 1076.7,379.7 1077.4,374.2 1078.1,369.7 1078.8,366.0 1079.5,363.7 1080.2,367.9 1080.9,369.2 1081.6,370.1 1082.3,374.1 1083.0,378.3 1083.7,380.3 1084.4,383.1 1085.1,384.2 1085.8,386.8 1086.5,386.8 1087.2,388.1 1087.9,388.6 1088.6,389.6 1089.3,389.9 1090.0,390.8 1090.7,390.7 1091.4,391.8 1092.1,391.3 1092.8,391.8 1093.5,392.3 1094.2,390.4 1094.9,385.7 1095.6,378.0 1096.3,370.4 1097.0,361.4 1097.7,356.6 1098.4,358.2 1099.1,356.3 1099.8,355.6 1100.5,360.5 1101.2,366.9 1101.9,372.1 1102.6,376.4 1103.3,380.3 1104.0,383.8 1104.7,386.6 1105.4,388.2 1106.1,389.8 1106.8,392.0 1107.5,392.6 1108.2,392.9 1108.9,393.1 1109.6,394.0 1110.3,396.0 1111.0,394.9 1111.7,395.6 1112.4,396.0 1113.1,395.5 1113.8,392.8 1114.5,387.2 1115.2,381.0 1115.9,375.7 1116.6,370.9 1117.3,367.1 1118.0,367.2 1118.7,370.4 1119.4,368.5 1120.1,377.0 1120.8,382.6 1121.5,388.0 1122.2,390.4 1122.9,394.0 1123.6,395.9 1124.3,398.3 1125.0,399.6 1125.7,399.2 1126.4,400.2 1127.1,401.4 1127.8,402.8 1128.5,403.8 1129.2,403.5 1129.9,404.0 1130.6,404.6 1131.3,404.7 1132.0,405.2 1132.7,402.6 1133.4,397.7 1134.1,391.0 1134.8,384.8 1135.5,377.8 1136.2,373.2 1136.9,372.1 1137.6,377.4 1138.3,375.9 1139.0,381.6 1139.7,388.7 1140.4,394.3 1141.1,398.3 1141.8,402.1 1142.5,404.8 1143.2,407.1 1143.9,408.5 1144.6,409.4 1145.3,409.6 1146.0,411.6 1146.7,413.4 1147.4,414.3 1148.1,413.8 1148.8,414.9 1149.5,415.1 1150.2,416.0 1150.9,415.3 1151.6,413.2 1152.3,406.1 1153.0,394.8 1153.7,383.9 1154.4,373.2 1155.1,365.0 1155.8,362.2 1156.5,363.9 1157.2,367.4 1157.9,371.1 1158.6,377.5 1159.3,384.7 1160.0,390.5 1160.7,395.0 1161.4,398.1 1162.1,401.6 1162.8,404.1 1163.5,404.2 1164.2,406.3 1164.9,408.3 1165.6,409.7 1166.3,410.4 1167.0,410.8 1167.7,411.5 1168.4,411.8 1169.1,412.1 1169.8,412.3 1170.5,411.2 1171.2,405.3 1171.9,395.6 1172.6,384.1 1173.3,372.7 1174.0,364.4 1174.7,359.1 1175.4,363.6 1176.1,363.1 1176.8,363.3 1177.5,370.8 1178.2,378.2 1178.9,383.2 1179.6,387.1 1180.3,390.4 1181.0,392.6 1181.7,395.9 1182.4,397.4 1183.1,399.9 1183.8,399.9 1184.5,400.5 1185.2,401.6 1185.9,402.0 1186.6,402.8 1187.3,403.1 1188.0,403.3 1188.7,404.4 1189.4,404.1 1190.1,399.8 1190.8,391.4 1191.5,381.8 1192.2,371.8 1192.9,362.9 1193.6,358.7 1194.3,356.6 1195.0,358.0 1195.7,359.0 1196.4,366.1 1197.1,373.4 1197.8,378.2 1198.5,380.1 1199.2,384.4 1199.9,387.6 1200.6,390.9 1201.3,392.9 1202.0,394.8 1202.7,395.3 1203.4,396.5 1204.1,396.8 1204.8,396.8 1205.5,397.5 1206.2,398.9 1206.9,398.5 1207.6,399.1 1208.3,399.9 1209.0,396.1 1209.7,389.3 1210.4,380.4 1211.1,369.7 1211.8,361.5 1212.5,354.4 1213.2,350.8 1213.9,355.0 1214.6,356.5 1215.3,358.1 1216.0,368.1 1216.7,373.6 1217.4,378.5 1218.1,381.4 1218.8,384.9 1219.5,387.6 1220.2,390.2 1220.9,390.8 1221.6,392.2 1222.3,392.2 1223.0,393.5 1223.7,395.0 1224.4,395.2 1225.1,396.2 1225.8,397.0 1226.5,397.8 1227.2,397.7 1227.9,395.9 1228.6,389.9 1229.3,380.6 1230.0,369.4 1230.7,357.8 1231.4,350.6 1232.1,347.7 1232.8,349.7 1233.5,348.0 1234.2,353.2 1234.9,362.8 1235.6,370.2 1236.3,374.9 1237.0,379.7 1237.7,383.9 1238.4,386.7 1239.1,388.8 1239.8,390.1 1240.5,392.0 1241.2,393.9 1241.9,395.1 1242.6,396.0 1243.3,396.9 1244.0,397.4 1244.7,398.1 1245.4,399.8 1246.1,399.2 1246.8,398.5 1247.5,392.9 1248.2,383.4 1248.9,372.0 1249.6,360.6 1250.3,351.1 1251.0,350.4 1251.7,346.9 1252.4,348.5 1253.1,347.7 1253.8,356.6 1254.5,364.7 1255.2,371.1 1255.9,375.6 1256.6,380.5 1257.3,382.5 1258.0,385.8 1258.7,386.9 1259.4,389.7 1260.1,391.2 1260.8,392.3 1261.5,393.4 1262.2,394.0 1262.9,394.6 1263.6,394.2 1264.3,395.1 1265.0,394.8 1265.7,396.2 1266.4,393.3 1267.1,387.8 1267.8,380.4 1268.5,371.9 1269.2,363.6 1269.9,359.3 1270.6,361.7 1271.3,360.0 1272.0,360.7 1272.7,367.6 1273.4,374.6 1274.1,380.6 1274.8,384.6 1275.5,387.9 1276.2,391.2 1276.9,393.4 1277.6,394.7 1278.3,397.5 1279.0,398.6 1279.7,398.2 1280.4,399.9 1281.1,400.4 1281.8,400.9 1282.5,401.0 1283.2,402.0 1283.9,402.2 1284.6,402.9 1285.3,401.6 1286.0,395.5 1286.7,388.4 1287.4,380.9 1288.1,373.4 1288.8,367.3 1289.5,365.9 1290.2,365.1 1290.9,367.2 1291.6,369.7 1292.3,376.1 1293.0,380.8 1293.7,384.8 1294.4,388.1 1295.1,390.5 1295.8,393.7 1296.5,394.7 1297.2,396.1 1297.9,397.9 1298.6,397.9 1299.3,396.5 1300.0,398.1 1300.7,399.6 1301.4,400.8 1302.1,400.9 1302.8,401.0 1303.5,400.4 1304.2,399.7 1304.9,395.4 1305.6,387.2 1306.3,377.4 1307.0,368.2 1307.7,360.2 1308.4,354.4 1309.1,355.8 1309.8,358.5 1310.5,358.5 1311.2,368.6 1311.9,377.2 1312.6,383.6 1313.3,389.7 1314.0,393.0 1314.7,396.3 1315.4,398.0 1316.1,400.9 1316.8,403.4 1317.5,404.8 1318.2,406.2 1318.9,407.0 1319.6,408.3 1320.3,408.1 1321.0,409.1 1321.7,409.8 1322.4,409.7 1323.1,410.2 1323.8,406.8 1324.5,397.8 1325.2,387.6 1325.9,376.7 1326.6,367.5 1327.3,360.9 1328.0,360.3 1328.7,360.6 1329.4,363.4 1330.1,369.3 1330.8,376.7 1331.5,382.0 1332.2,386.5 1332.9,389.9 1333.6,393.6 1334.3,395.9 1335.0,398.6 1335.7,400.5 1336.4,401.6 1337.1,402.3 1337.8,403.1 1338.5,403.9 1339.2,404.8 1339.9,405.6 1340.6,405.3 1341.3,405.5 1342.0,406.1 1342.7,403.5 1343.4,395.8 1344.1,385.2 1344.8,372.5 1345.5,360.2 1346.2,352.9 1346.9,350.6 1347.6,354.9 1348.3,355.0 1349.0,357.2 1349.7,367.7 1350.4,375.0 1351.1,380.2 1351.8,384.1 1352.5,388.8 1353.2,391.3 1353.9,392.5 1354.6,394.9 1355.3,396.1 1356.0,397.1 1356.7,399.3 1357.4,400.0 1358.1,401.0 1358.8,401.4 1359.5,401.4 1360.2,402.3 1360.9,402.7 1361.6,401.0 1362.3,395.7 1363.0,386.7 1363.7,375.9 1364.4,365.5 1365.1,354.4 1365.8,351.5 1366.5,355.8 1367.2,353.2 1367.9,358.2 1368.6,366.3 1369.3,372.5 1370.0,378.2 1370.7,382.1 1371.4,385.3 1372.1,388.7 1372.8,390.8 1373.5,392.5 1374.2,394.3 1374.9,395.5 1375.6,396.8 1376.3,397.7 1377.0,398.2 1377.7,399.4 1378.4,399.3 1379.1,399.5 1379.8,399.7 1380.5,399.5 1381.2,395.5 1381.9,389.1 1382.6,381.2 1383.3,372.2 1384.0,364.2 1384.7,359.2 1385.4,361.0 1386.1,362.1 1386.8,361.2 1387.5,368.9 1388.2,375.4 1388.9,380.3 1389.6,385.3 1390.3,389.8 1391.0,392.7 1391.7,394.7 1392.4,396.2 1393.1,398.1 1393.8,400.0 1394.5,401.2 1395.2,401.8 1395.9,401.9 1396.6,402.0 1397.3,403.4 1398.0,403.0 1398.7,403.7 1399.4,404.6 1400.1,402.0 1400.8,396.7 1401.5,392.2 1402.2,385.5 1402.9,377.4 1403.6,376.4 1404.3,371.2 1405.0,376.5 1405.7,376.1 1406.4,380.1 1407.1,381.6 1407.8,384.9 1408.5,387.8 1409.2,389.0 1409.9,390.0 1410.6,391.5 1411.3,393.2 1412.0,393.9 1412.7,395.2 1413.4,395.8 1414.1,396.1 1414.8,397.1 1415.5,396.6 1416.2,397.5 1416.9,396.9 1417.6,397.6 1418.3,396.7 1419.0,396.5 1419.7,392.9 1420.4,385.8 1421.1,379.1 1421.8,372.6 1422.5,365.6 1423.2,364.0 1423.9,366.6 1424.6,362.4 1425.3,368.3 1426.0,372.1 1426.7,376.5 1427.4,379.3 1428.1,381.9 1428.8,383.4 1429.5,385.3 1430.2,386.9 1430.9,388.3 1431.6,388.7 1432.3,389.8 1433.0,390.1 1433.7,390.9 1434.4,391.6 1435.1,392.0 1435.8,391.7 1436.5,392.4 1437.2,392.4 1437.9,392.5 1438.6,390.5 1439.3,388.4 1440.0,386.0 1440.7,383.6 1441.4,379.1 1442.1,379.6 1442.8,377.9 1443.5,378.5 1444.2,379.6 1444.9,382.7 1445.6,384.3 1446.3,386.4 1447.0,386.8 1447.7,388.6 1448.4,389.3 1449.1,388.9 1449.8,388.7 1450.5,389.4 1451.2,390.5 1451.9,391.3 1452.6,391.5 1453.3,393.1 1454.0,391.9 1454.7,392.9 1455.4,392.4 1456.1,392.6 1456.8,392.2 1457.5,390.8 1458.2,386.0 1458.9,380.0 1459.6,374.2 1460.3,371.0 1461.0,364.8 1461.7,363.3 1462.4,364.4 1463.1,367.2 1463.8,369.2 1464.5,374.2 1465.2,379.2 1465.9,381.4 1466.6,384.0 1467.3,386.7 1468.0,388.4 1468.7,389.1 1469.4,390.2 1470.1,391.6 1470.8,391.2 1471.5,391.2 1472.2,393.8 1472.9,394.5 1473.6,395.0 1474.3,394.6 1475.0,394.4 1475.7,394.7 1476.4,394.6 1477.1,391.5 1477.8,388.8 1478.5,385.4 1479.2,381.6 1479.9,380.4 1480.6,378.8 1481.3,378.5 1482.0,379.2 1482.7,383.4 1483.4,386.9 1484.1,391.1 1484.8,394.1 1485.5,395.6 1486.2,397.9 1486.9,399.9 1487.6,401.3 1488.3,402.5 1489.0,403.3 1489.7,403.8 1490.4,402.9 1491.1,403.2 1491.8,404.8 1492.5,405.1 1493.2,406.0 1493.9,405.1 1494.6,406.2 1495.3,405.5 1496.0,402.7 1496.7,396.7 1497.4,389.0 1498.1,383.4 1498.8,378.3 1499.5,373.2 1500.2,377.5 1500.9,376.6 1501.6,375.5 1502.3,383.1 1503.0,387.8 1503.7,392.2 1504.4,394.7 1505.1,397.1 1505.8,398.8 1506.5,399.0 1507.2,401.4 1507.9,403.4 1508.6,404.2 1509.3,405.5 1510.0,405.3 1510.7,406.0 1511.4,407.3 1512.1,406.2 1512.8,406.7 1513.5,407.4 1514.2,406.7 1514.9,406.1 1515.6,404.0 1516.3,401.0 1517.0,398.2 1517.7,394.4 1518.4,392.1 1519.1,392.6 1519.8,395.0 1520.5,392.4 1521.2,397.1 1521.9,397.7 1522.6,401.4 1523.3,402.6 1524.0,404.5 1524.7,405.7 1525.4,405.7 1526.1,405.9 1526.8,405.7 1527.5,407.1 1528.2,408.0 1528.9,408.6 1529.6,408.5 1530.3,410.5 1531.0,409.5 1531.7,409.7 1532.4,409.3 1533.1,410.4 1533.8,409.5 1534.5,409.6 1535.2,407.2 1535.9,406.1 1536.6,405.5 1537.3,405.9 1538.0,402.8 1538.7,403.9 1539.4,403.5 1540.1,404.2 1540.8,407.2 1541.5,407.8 1542.2,408.5 1542.9,409.0 1543.6,408.9 1544.3,409.9 1545.0,410.8 1545.7,411.4 1546.4,411.8 1547.1,412.2 1547.8,412.2 1548.5,411.6 1549.2,412.3 1549.9,412.2 1550.6,413.1 1551.3,412.5 1552.0,412.2 1552.7,412.8 1553.4,411.2 1554.1,408.3 1554.8,404.3 1555.5,401.3 1556.2,398.0 1556.9,398.5 1557.6,401.4 1558.3,399.6 1559.0,396.3 1559.7,400.6 1560.4,402.5 1561.1,404.6 1561.8,405.4 1562.5,406.1 1563.2,407.1 1563.9,406.9 1564.6,407.8 1565.3,409.4 1566.0,409.0 1566.7,408.9 1567.4,408.6 1568.1,408.9 1568.8,408.7 1569.5,409.8 1570.2,409.9 1570.9,410.4 1571.6,410.1 1572.3,405.1 1573.0,397.5 1573.7,387.1 1574.4,377.3 1575.1,369.5 1575.8,364.9 1576.5,366.9 1577.2,363.6 1577.9,366.8 1578.6,371.2 1579.3,376.5 1580.0,380.4 1580.7,384.7 1581.4,387.5 1582.1,389.8 1582.8,391.8 1583.5,392.7 1584.2,393.8 1584.9,394.8 1585.6,395.8 1586.3,397.1 1587.0,398.0 1587.7,398.0 1588.4,398.1 1589.1,398.7 1589.8,398.7 1590.5,398.8 1591.2,396.0 1591.9,391.0 1592.6,382.7 1593.3,373.6 1594.0,365.1 1594.7,362.5 1595.4,356.2 1596.1,362.9 1596.8,362.3 1597.5,367.4 1598.2,371.0 1598.9,376.2 1599.6,379.7 1600.3,382.1 1601.0,383.9 1601.7,386.7 1602.4,389.9 1603.1,390.7 1603.8,391.9 1604.5,393.2 1605.2,393.5 1605.9,394.1 1606.6,394.9 1607.3,395.0 1608.0,395.0 1608.7,395.7 1609.4,395.9 1610.1,395.5 1610.8,389.9 1611.5,383.0 1612.2,374.5 1612.9,366.6 1613.6,361.0 1614.3,356.4 1615.0,358.0 1615.7,358.8 1616.4,360.2 1617.1,367.2 1617.8,371.9 1618.5,376.2 1619.2,379.6 1619.9,381.4 1620.6,382.5 1621.3,384.7 1622.0,386.6 1622.7,387.7 1623.4,388.2 1624.1,390.2 1624.8,390.4 1625.5,389.9 1626.2,391.2 1626.9,391.2 1627.6,391.7 1628.3,392.0 1629.0,391.0 1629.7,386.9 1630.4,378.0 1631.1,367.3 1631.8,357.4 1632.5,347.6 1633.2,342.8 1633.9,343.0 1634.6,347.5 1635.3,348.3 1636.0,353.5 1636.7,359.7 1637.4,365.9 1638.1,370.1 1638.8,373.8 1639.5,376.7 1640.2,378.5 1640.9,380.4 1641.6,380.9 1642.3,382.0 1643.0,383.7 1643.7,384.8 1644.4,385.9 1645.1,385.8 1645.8,386.6 1646.5,386.7 1647.2,386.7 1647.9,387.7 1648.6,385.6 1649.3,380.7 1650.0,375.9 1650.7,369.2 1651.4,363.3 1652.1,359.6 1652.8,359.3 1653.5,360.9 1654.2,361.4 1654.9,364.3 1655.6,370.7 1656.3,373.9 1657.0,378.1 1657.7,380.5 1658.4,381.5 1659.1,384.2 1659.8,385.7 1660.5,386.5 1661.2,388.5 1661.9,389.0 1662.6,388.2 1663.3,390.0 1664.0,389.7 1664.7,389.7 1665.4,390.8 1666.1,390.3 1666.8,390.8 1667.5,389.8 1668.2,385.4 1668.9,378.6 1669.6,371.4 1670.3,364.3 1671.0,358.8 1671.7,354.6 1672.4,358.4 1673.1,361.3 1673.8,363.6 1674.5,368.0 1675.2,372.7 1675.9,376.8 1676.6,380.4 1677.3,382.7 1678.0,384.3 1678.7,386.3 1679.4,386.9 1680.1,387.6 1680.8,388.5 1681.5,389.4 1682.2,390.8 1682.9,391.5 1683.6,391.2 1684.3,391.9 1685.0,392.5 1685.7,392.3 1686.4,391.6 1687.1,388.0 1687.8,382.0 1688.5,373.8 1689.2,366.9 1689.9,360.2 1690.6,356.6 1691.3,356.5 1692.0,357.1 1692.7,361.3 1693.4,368.2 1694.1,374.0 1694.8,379.0 1695.5,383.0 1696.2,384.8 1696.9,387.2 1697.6,390.2 1698.3,392.9 1699.0,393.9 1699.7,394.7 1700.4,396.3 1701.1,397.0 1701.8,397.0 1702.5,397.9 1703.2,398.3 1703.9,398.7 1704.6,400.1 1705.3,399.0 1706.0,396.0 1706.7,388.6 1707.4,380.3 1708.1,371.1 1708.8,362.3 1709.5,358.4 1710.2,357.3 1710.9,358.7 1711.6,361.7 1712.3,365.2 1713.0,371.9 1713.7,377.4 1714.4,382.3 1715.1,385.7 1715.8,388.8 1716.5,391.3 1717.2,393.6 1717.9,394.3 1718.6,395.2 1719.3,395.9 1720.0,397.6 1720.7,398.6 1721.4,399.2 1722.1,398.3 1722.8,399.8 1723.5,400.3 1724.2,400.3 1724.9,397.3 1725.6,391.6 1726.3,383.4 1727.0,373.2 1727.7,364.6 1728.4,359.2 1729.1,355.5 1729.8,359.5 1730.5,359.2 1731.2,360.5 1731.9,367.4 1732.6,372.6 1733.3,375.9 1734.0,380.1 1734.7,381.6 1735.4,383.6 1736.1,386.0 1736.8,387.3 1737.5,389.1 1738.2,390.0 1738.9,390.5 1739.6,391.0 1740.3,391.6 1741.0,391.8 1741.7,391.9 1742.4,392.6 1743.1,392.5 1743.8,392.1 1744.5,386.7 1745.2,380.7 1745.9,372.3 1746.6,364.9 1747.3,361.0 1748.0,354.4 1748.7,356.7 1749.4,357.2 1750.1,360.7 1750.8,366.1 1751.5,371.5 1752.2,376.5 1752.9,378.8 1753.6,381.7 1754.3,385.7 1755.0,387.3 1755.7,389.1 1756.4,390.5 1757.1,391.6 1757.8,392.1 1758.5,393.4 1759.2,394.4 1759.9,393.8 1760.6,395.0 1761.3,393.8 1762.0,395.4 1762.7,394.6 1763.4,390.4 1764.1,382.8 1764.8,372.7 1765.5,363.4 1766.2,354.1 1766.9,351.0 1767.6,350.2 1768.3,353.1 1769.0,353.3 1769.7,359.3 1770.4,366.2 1771.1,371.8 1771.8,375.4 1772.5,379.0 1773.2,381.5 1773.9,383.6 1774.6,385.4 1775.3,386.9 1776.0,387.4 1776.7,388.6 1777.4,389.7 1778.1,390.8 1778.8,391.6 1779.5,392.4 1780.2,391.8 1780.9,392.2 1781.6,392.2 1782.3,390.0 1783.0,383.3 1783.7,375.5 1784.4,366.5 1785.1,359.5 1785.8,354.0 1786.5,352.5 1787.2,351.9 1787.9,353.3 1788.6,357.4 1789.3,364.4 1790.0,368.9 1790.7,374.2 1791.4,376.8 1792.1,379.9 1792.8,382.4 1793.5,384.0 1794.2,386.2 1794.9,386.5 1795.6,387.5 1796.3,388.1 1797.0,388.7 1797.7,389.8 1798.4,390.6 1799.1,390.3 1799.8,390.7 1800.5,390.7 1801.2,389.8 1801.9,385.3 1802.6,377.9 1803.3,370.0 1804.0,362.1 1804.7,358.7 1805.4,350.9 1806.1,356.3 1806.8,353.7 1807.5,355.9 1808.2,362.2 1808.9,367.4 1809.6,371.5 1810.3,374.1 1811.0,376.7 1811.7,378.2 1812.4,380.2 1813.1,380.7 1813.8,382.1 1814.5,382.4 1815.2,383.0 1815.9,384.8 1816.6,385.4 1817.3,385.0 1818.0,386.0 1818.7,385.8 1819.4,386.3 1820.1,386.1 1820.8,383.6 1821.5,379.7 1822.2,375.7 1822.9,371.5 1823.6,368.2 1824.3,363.4 1825.0,365.8 1825.7,366.7 1826.4,369.3 1827.1,373.5 1827.8,377.9 1828.5,382.1 1829.2,384.7 1829.9,388.0 1830.6,389.3 1831.3,391.3 1832.0,392.8 1832.7,393.0 1833.4,393.5 1834.1,393.8 1834.8,395.5 1835.5,396.1 1836.2,396.4 1836.9,397.1 1837.6,396.3 1838.3,397.3 1839.0,397.7 1839.7,394.0 1840.4,387.7 1841.1,379.8 1841.8,370.9 1842.5,364.2 1843.2,354.8 1843.9,358.4 1844.6,357.1 1845.3,358.4 1846.0,363.4 1846.7,370.7 1847.4,376.2 1848.1,379.8 1848.8,383.9 1849.5,386.5 1850.2,388.5 1850.9,390.9 1851.6,391.6 1852.3,392.7 1853.0,393.6 1853.7,394.8 1854.4,395.3 1855.1,396.0 1855.8,397.0 1856.5,397.0 1857.2,397.3 1857.9,397.4 1858.6,396.0 1859.3,391.5 1860.0,383.6 1860.7,376.0 1861.4,366.0 1862.1,361.6 1862.8,360.4 1863.5,360.9 1864.2,359.6 1864.9,363.5 1865.6,370.3 1866.3,373.6 1867.0,376.5 1867.7,378.9 1868.4,382.2 1869.1,385.3 1869.8,386.9 1870.5,387.1 1871.2,389.5 1871.9,389.5 1872.6,390.1 1873.3,391.5 1874.0,391.3 1874.7,391.2 1875.4,391.7 1876.1,391.9 1876.8,392.0 1877.5,391.7 1878.2,387.5 1878.9,379.2 1879.6,369.6 1880.3,360.9 1881.0,353.3 1881.7,350.8 1882.4,349.9 1883.1,351.2 1883.8,353.2 1884.5,359.0 1885.2,364.6 1885.9,369.6 1886.6,373.4 1887.3,377.5 1888.0,380.3 1888.7,382.3 1889.4,383.5 1890.1,385.7 1890.8,385.3 1891.5,386.8 1892.2,387.3 1892.9,389.1 1893.6,388.7 1894.3,389.2 1895.0,389.8 1895.7,390.3 1896.4,389.2 1897.1,387.4 1897.8,381.8 1898.5,374.3 1899.2,366.7 1899.9,359.5 1900.6,355.8 1901.3,355.8 1902.0,357.2" fill="none" stroke="#4a7ac0" stroke-width="1.650" stroke-linejoin="round"/><path d="M159.0,490.6 159.7,485.3 160.4,479.9 161.1,476.0 161.8,473.3 162.5,473.9 163.2,474.5 163.9,475.7 164.6,480.9 165.3,485.0 166.0,488.5 166.7,491.1 167.4,493.3 168.1,495.2 168.8,496.8 169.5,497.8 170.2,498.4 170.9,500.0 171.6,500.7 172.3,500.9 173.0,501.2 173.7,501.7 174.4,502.0 175.1,502.2 175.8,502.3 176.5,502.2 177.2,500.2 177.9,496.0 178.6,490.7 179.3,484.9 180.0,479.6 180.7,475.9 181.4,475.8 182.1,477.9 182.8,477.1 183.5,480.9 184.2,484.7 184.9,487.5 185.6,490.3 186.3,492.6 187.0,493.5 187.7,495.0 188.4,495.6 189.1,496.2 189.8,497.6 190.5,498.3 191.2,498.5 191.9,499.4 192.6,499.6 193.3,499.9 194.0,500.2 194.7,500.2 195.4,500.3 196.1,498.7 196.8,494.7 197.5,489.0 198.2,482.4 198.9,477.2 199.6,473.6 200.3,470.9 201.0,471.9 201.7,472.6 202.4,474.9 203.1,479.5 203.8,483.9 204.5,486.4 205.2,488.8 205.9,491.0 206.6,492.3 207.3,493.6 208.0,494.5 208.7,495.4 209.4,495.8 210.1,496.2 210.8,496.9 211.5,497.3 212.2,497.8 212.9,498.2 213.6,498.2 214.3,498.3 215.0,498.1 215.7,494.5 216.4,489.9 217.1,484.5 217.8,478.3 218.5,475.4 219.2,472.6 219.9,472.4 220.6,473.6 221.3,474.6 222.0,478.7 222.7,482.6 223.4,485.2 224.1,487.6 224.8,489.7 225.5,490.7 226.2,491.4 226.9,493.1 227.6,494.4 228.3,494.7 229.0,495.0 229.7,495.7 230.4,496.1 231.1,496.3 231.8,496.9 232.5,496.6 233.2,497.3 233.9,496.7 234.6,495.1 235.3,491.4 236.0,487.0 236.7,482.3 237.4,478.6 238.1,476.5 238.8,475.8 239.5,476.5 240.2,477.3 240.9,480.7 241.6,484.2 242.3,487.3 243.0,489.8 243.7,491.3 244.4,492.8 245.1,493.9 245.8,495.0 246.5,496.3 247.2,497.2 247.9,497.7 248.6,498.1 249.3,498.2 250.0,498.4 250.7,498.7 251.4,499.1 252.1,499.2 252.8,499.2 253.5,498.7 254.2,495.9 254.9,492.8 255.6,489.3 256.3,486.2 257.0,481.9 257.7,483.0 258.4,484.6 259.1,483.3 259.8,485.3 260.5,487.6 261.2,489.2 261.9,490.6 262.6,490.9 263.3,492.2 264.0,493.0 264.7,493.8 265.4,494.3 266.1,493.9 266.8,495.0 267.5,494.7 268.2,495.3 268.9,495.0 269.6,495.5 270.3,495.8 271.0,495.6 271.7,495.8 272.4,495.1 273.1,492.6 273.8,489.3 274.5,486.1 275.2,483.1 275.9,479.3 276.6,477.7 277.3,478.9 278.0,479.0 278.7,480.1 279.4,482.4 280.1,484.4 280.8,486.0 281.5,487.1 282.2,488.4 282.9,489.7 283.6,490.4 284.3,490.9 285.0,491.2 285.7,491.4 286.4,492.2 287.1,492.0 287.8,492.4 288.5,492.8 289.2,492.9 289.9,492.8 290.6,493.3 291.3,492.5 292.0,492.4 292.7,491.0 293.4,489.7 294.1,488.2 294.8,487.8 295.5,485.2 296.2,487.1 296.9,487.5 297.6,487.6 298.3,487.6 299.0,488.6 299.7,489.8 300.4,490.3 301.1,490.8 301.8,491.2 302.5,491.1 303.2,491.3 303.9,492.1 304.6,492.1 305.3,492.8 306.0,492.8 306.7,492.7 307.4,492.9 308.1,493.2 308.8,493.1 309.5,493.4 310.2,493.3 310.9,492.0 311.6,489.5 312.3,486.8 313.0,483.6 313.7,480.2 314.4,479.4 315.1,477.7 315.8,477.7 316.5,479.0 317.2,481.6 317.9,483.7 318.6,485.8 319.3,487.5 320.0,488.5 320.7,489.3 321.4,490.4 322.1,491.7 322.8,492.1 323.5,492.7 324.2,492.9 324.9,493.4 325.6,493.7 326.3,493.8 327.0,493.9 327.7,494.2 328.4,494.3 329.1,494.8 329.8,494.3 330.5,492.9 331.2,491.2 331.9,489.4 332.6,487.2 333.3,486.5 334.0,485.0 334.7,486.7 335.4,485.1 336.1,488.0 336.8,490.1 337.5,491.8 338.2,494.0 338.9,495.1 339.6,495.7 340.3,496.5 341.0,497.0 341.7,497.5 342.4,498.7 343.1,499.2 343.8,499.5 344.5,499.6 345.2,500.0 345.9,500.0 346.6,500.1 347.3,499.7 348.0,500.4 348.7,500.3 349.4,498.4 350.1,495.3 350.8,492.0 351.5,488.3 352.2,483.6 352.9,484.2 353.6,484.5 354.3,484.3 355.0,484.5 355.7,488.3 356.4,490.7 357.1,492.9 357.8,494.3 358.5,496.1 359.2,497.1 359.9,497.7 360.6,498.2 361.3,498.6 362.0,499.1 362.7,500.0 363.4,500.0 364.1,500.4 364.8,500.9 365.5,500.7 366.2,501.0 366.9,501.0 367.6,501.0 368.3,500.5 369.0,498.7 369.7,497.7 370.4,495.9 371.1,493.9 371.8,494.4 372.5,494.8 373.2,492.4 373.9,493.3 374.6,495.1 375.3,496.5 376.0,497.5 376.7,498.3 377.4,499.6 378.1,499.9 378.8,500.1 379.5,500.6 380.2,501.5 380.9,501.7 381.6,502.0 382.3,502.0 383.0,501.8 383.7,502.1 384.4,501.7 385.1,502.1 385.8,502.3 386.5,502.5 387.2,502.3 387.9,501.8 388.6,501.2 389.3,500.6 390.0,499.6 390.7,500.6 391.4,499.0 392.1,500.3 392.8,499.8 393.5,500.3 394.2,500.8 394.9,501.2 395.6,502.1 396.3,502.2 397.0,502.3 397.7,502.5 398.4,502.0 399.1,502.7 399.8,503.4 400.5,503.5 401.2,503.2 401.9,503.6 402.6,503.6 403.3,503.4 404.0,503.3 404.7,503.6 405.4,503.9 406.1,503.5 406.8,502.5 407.5,501.4 408.2,499.7 408.9,498.0 409.6,497.7 410.3,496.7 411.0,496.2 411.7,496.8 412.4,497.7 413.1,498.0 413.8,498.9 414.5,499.2 415.2,500.0 415.9,500.6 416.6,500.8 417.3,501.4 418.0,501.5 418.7,501.6 419.4,501.0 420.1,501.6 420.8,502.0 421.5,502.0 422.2,502.2 422.9,502.8 423.6,502.2 424.3,502.5 425.0,502.1 425.7,500.1 426.4,495.8 427.1,490.6 427.8,485.1 428.5,480.8 429.2,477.6 429.9,477.7 430.6,478.8 431.3,478.8 432.0,481.5 432.7,484.4 433.4,485.9 434.1,488.4 434.8,490.1 435.5,491.4 436.2,492.8 436.9,493.3 437.6,493.9 438.3,495.2 439.0,495.3 439.7,495.7 440.4,495.7 441.1,495.9 441.8,496.4 442.5,495.9 443.2,496.2 443.9,496.3 444.6,495.0 445.3,492.3 446.0,488.1 446.7,483.0 447.4,478.4 448.1,475.5 448.8,475.0 449.5,475.0 450.2,476.7 450.9,478.8 451.6,482.0 452.3,484.6 453.0,486.9 453.7,488.5 454.4,489.4 455.1,490.6 455.8,491.4 456.5,492.1 457.2,492.7 457.9,493.0 458.6,493.6 459.3,493.7 460.0,494.1 460.7,494.5 461.4,494.7 462.1,494.8 462.8,494.9 463.5,494.3 464.2,492.0 464.9,488.4 465.6,483.9 466.3,479.3 467.0,475.6 467.7,475.4 468.4,474.5 469.1,474.5 469.8,475.9 470.5,479.6 471.2,482.3 471.9,484.1 472.6,485.8 473.3,487.8 474.0,488.5 474.7,489.8 475.4,490.3 476.1,490.8 476.8,491.2 477.5,491.9 478.2,491.8 478.9,491.9 479.6,492.3 480.3,492.8 481.0,492.5 481.7,492.9 482.4,493.1 483.1,490.1 483.8,485.9 484.5,480.1 485.2,474.8 485.9,468.5 486.6,466.7 487.3,467.6 488.0,468.5 488.7,470.4 489.4,472.6 490.1,476.2 490.8,478.5 491.5,480.4 492.2,482.6 492.9,484.5 493.6,485.9 494.3,486.6 495.0,487.9 495.7,488.0 496.4,488.8 497.1,489.6 497.8,489.5 498.5,489.8 499.2,490.3 499.9,490.2 500.6,490.2 501.3,490.5 502.0,489.5 502.7,487.1 503.4,484.1 504.1,480.4 504.8,478.8 505.5,477.2 506.2,475.1 506.9,474.4 507.6,476.4 508.3,479.0 509.0,480.6 509.7,483.8 510.4,484.6 511.1,486.1 511.8,487.5 512.5,488.8 513.2,489.6 513.9,490.1 514.6,490.7 515.3,490.8 516.0,491.5 516.7,491.5 517.4,491.8 518.1,492.2 518.8,492.2 519.5,492.4 520.2,492.7 520.9,491.6 521.6,489.6 522.3,485.8 523.0,482.1 523.7,478.3 524.4,475.7 525.1,473.7 525.8,475.2 526.5,474.6 527.2,476.9 527.9,480.2 528.6,482.9 529.3,484.8 530.0,486.3 530.7,487.9 531.4,488.8 532.1,490.1 532.8,490.6 533.5,490.7 534.2,490.6 534.9,491.1 535.6,491.9 536.3,492.4 537.0,492.7 537.7,492.9 538.4,493.1 539.1,493.5 539.8,493.1 540.5,490.9 541.2,487.7 541.9,483.7 542.6,479.9 543.3,476.8 544.0,475.3 544.7,475.4 545.4,475.7 546.1,477.3 546.8,480.6 547.5,483.2 548.2,485.9 548.9,488.3 549.6,489.6 550.3,491.1 551.0,491.9 551.7,492.9 552.4,493.7 553.1,495.0 553.8,495.2 554.5,495.6 555.2,495.4 555.9,495.6 556.6,496.2 557.3,496.5 558.0,496.5 558.7,496.7 559.4,494.8 560.1,491.2 560.8,486.9 561.5,481.9 562.2,478.1 562.9,474.4 563.6,474.6 564.3,475.3 565.0,474.7 565.7,479.5 566.4,482.7 567.1,485.1 567.8,487.9 568.5,489.6 569.2,490.8 569.9,491.4 570.6,492.2 571.3,493.9 572.0,495.1 572.7,495.2 573.4,495.5 574.1,495.8 574.8,496.1 575.5,496.7 576.2,497.2 576.9,497.0 577.6,497.1 578.3,496.5 579.0,492.8 579.7,488.6 580.4,483.2 581.1,478.4 581.8,476.2 582.5,474.6 583.2,474.0 583.9,474.9 584.6,477.0 585.3,480.4 586.0,482.9 586.7,484.8 587.4,486.0 588.1,488.0 588.8,488.6 589.5,489.3 590.2,489.9 590.9,490.6 591.6,491.4 592.3,492.4 593.0,492.2 593.7,492.3 594.4,492.9 595.1,492.9 595.8,492.9 596.5,492.9 597.2,492.7 597.9,490.6 598.6,486.8 599.3,483.0 600.0,478.6 600.7,475.1 601.4,474.3 602.1,473.0 602.8,474.4 603.5,475.6 604.2,479.6 604.9,482.3 605.6,484.8 606.3,486.2 607.0,487.5 607.7,489.3 608.4,490.3 609.1,491.9 609.8,491.9 610.5,492.6 611.2,493.1 611.9,493.6 612.6,493.4 613.3,493.4 614.0,494.2 614.7,494.4 615.4,494.5 616.1,494.9 616.8,491.9 617.5,488.5 618.2,483.5 618.9,477.9 619.6,475.1 620.3,471.1 621.0,470.7 621.7,472.1 622.4,473.4 623.1,475.3 623.8,479.4 624.5,481.8 625.2,483.7 625.9,485.8 626.6,487.3 627.3,488.7 628.0,489.7 628.7,490.3 629.4,490.6 630.1,491.9 630.8,492.2 631.5,492.6 632.2,492.5 632.9,492.9 633.6,493.0 634.3,492.7 635.0,493.1 635.7,491.9 636.4,488.7 637.1,484.4 637.8,479.5 638.5,475.1 639.2,470.9 639.9,472.2 640.6,472.0 641.3,472.3 642.0,474.9 642.7,478.2 643.4,481.1 644.1,483.2 644.8,485.1 645.5,486.0 646.2,487.3 646.9,488.3 647.6,489.5 648.3,490.0 649.0,490.6 649.7,491.4 650.4,491.3 651.1,491.8 651.8,492.2 652.5,492.0 653.2,492.4 653.9,492.2 654.6,491.3 655.3,489.4 656.0,485.9 656.7,481.3 657.4,477.4 658.1,475.0 658.8,470.8 659.5,473.3 660.2,474.3 660.9,475.7 661.6,477.6 662.3,479.6 663.0,482.0 663.7,483.2 664.4,484.7 665.1,485.9 665.8,486.3 666.5,487.5 667.2,487.9 667.9,488.2 668.6,488.3 669.3,488.4 670.0,489.0 670.7,489.3 671.4,489.2 672.1,489.5 672.8,490.1 673.5,489.5 674.2,488.7 674.9,486.7 675.6,484.2 676.3,481.6 677.0,480.0 677.7,479.6 678.4,478.0 679.1,478.6 679.8,479.9 680.5,481.9 681.2,485.2 681.9,487.3 682.6,489.1 683.3,490.3 684.0,491.3 684.7,492.3 685.4,493.1 686.1,493.5 686.8,494.1 687.5,494.5 688.2,494.6 688.9,495.0 689.6,495.0 690.3,495.3 691.0,495.0 691.7,496.1 692.4,495.4 693.1,493.8 693.8,491.1 694.5,486.5 695.2,481.8 695.9,476.5 696.6,474.8 697.3,473.9 698.0,474.6 698.7,475.7 699.4,478.3 700.1,481.9 700.8,483.9 701.5,486.3 702.2,488.1 702.9,490.2 703.6,490.7 704.3,491.7 705.0,492.7 705.7,493.0 706.4,494.2 707.1,494.6 707.8,494.7 708.5,495.0 709.2,495.2 709.9,495.6 710.6,495.7 711.3,495.9 712.0,495.2 712.7,492.4 713.4,488.5 714.1,484.1 714.8,480.1 715.5,477.7 716.2,476.3 716.9,475.5 717.6,477.3 718.3,478.2 719.0,480.9 719.7,483.7 720.4,485.4 721.1,486.9 721.8,488.4 722.5,489.5 723.2,489.5 723.9,490.0 724.6,490.4 725.3,492.0 726.0,491.9 726.7,492.5 727.4,492.4 728.1,492.9 728.8,493.3 729.5,492.4 730.2,493.0 730.9,492.9 731.6,490.5 732.3,486.1 733.0,481.4 733.7,476.2 734.4,473.0 735.1,469.7 735.8,470.7 736.5,471.3 737.2,470.9 737.9,475.5 738.6,478.9 739.3,481.4 740.0,483.4 740.7,485.0 741.4,486.4 742.1,487.6 742.8,488.4 743.5,489.1 744.2,489.5 744.9,490.0 745.6,490.2 746.3,491.0 747.0,491.3 747.7,491.4 748.4,491.9 749.1,492.1 749.8,492.0 750.5,490.2 751.2,487.6 751.9,483.3 752.6,479.5 753.3,475.7 754.0,473.9 754.7,473.0 755.4,472.9 756.1,475.6 756.8,477.6 757.5,480.6 758.2,483.4 758.9,485.7 759.6,487.0 760.3,488.5 761.0,489.8 761.7,490.7 762.4,491.2 763.1,491.4 763.8,492.4 764.5,492.1 765.2,492.4 765.9,493.0 766.6,493.5 767.3,493.6 768.0,493.6 768.7,493.8 769.4,493.0 770.1,490.7 770.8,487.4 771.5,483.7 772.2,480.5 772.9,478.2 773.6,476.6 774.3,477.4 775.0,478.9 775.7,481.8 776.4,485.1 777.1,488.1 777.8,491.2 778.5,493.5 779.2,495.1 779.9,496.4 780.6,497.3 781.3,498.0 782.0,498.5 782.7,499.7 783.4,500.5 784.1,500.7 784.8,501.3 785.5,501.4 786.2,501.5 786.9,501.4 787.6,502.0 788.3,501.4 789.0,499.1 789.7,493.8 790.4,489.3 791.1,483.9 791.8,481.3 792.5,481.0 793.2,477.1 793.9,479.9 794.6,481.0 795.3,484.8 796.0,488.3 796.7,490.5 797.4,493.3 798.1,494.5 798.8,495.3 799.5,496.5 800.2,498.3 800.9,499.0 801.6,499.8 802.3,500.1 803.0,500.1 803.7,500.9 804.4,501.3 805.1,501.6 805.8,501.4 806.5,501.8 807.2,502.0 807.9,499.4 808.6,495.5 809.3,490.2 810.0,485.0 810.7,480.2 811.4,476.6 812.1,477.4 812.8,477.2 813.5,480.0 814.2,481.7 814.9,485.4 815.6,488.2 816.3,490.3 817.0,492.8 817.7,494.0 818.4,494.9 819.1,496.4 819.8,496.9 820.5,498.2 821.2,497.9 821.9,498.4 822.6,498.8 823.3,498.8 824.0,499.4 824.7,499.8 825.4,500.0 826.1,499.9 826.8,498.1 827.5,494.7 828.2,490.1 828.9,484.9 829.6,480.5 830.3,477.1 831.0,475.4 831.7,476.2 832.4,475.9 833.1,479.8 833.8,483.9 834.5,487.1 835.2,489.3 835.9,490.9 836.6,492.6 837.3,494.2 838.0,495.8 838.7,496.6 839.4,497.3 840.1,498.1 840.8,498.1 841.5,498.5 842.2,498.8 842.9,499.0 843.6,499.7 844.3,499.9 845.0,499.7 845.7,499.0 846.4,495.3 847.1,489.6 847.8,483.5 848.5,477.5 849.2,472.3 849.9,469.8 850.6,470.6 851.3,472.8 852.0,471.7 852.7,477.3 853.4,480.0 854.1,482.0 854.8,484.2 855.5,486.3 856.2,487.7 856.9,489.0 857.6,489.9 858.3,490.7 859.0,491.2 859.7,491.6 860.4,491.5 861.1,492.1 861.8,492.6 862.5,492.9 863.2,492.7 863.9,492.9 864.6,492.9 865.3,490.9 866.0,487.2 866.7,482.2 867.4,477.3 868.1,472.3 868.8,472.6 869.5,471.1 870.2,471.7 870.9,471.5 871.6,475.8 872.3,478.8 873.0,481.7 873.7,484.0 874.4,485.6 875.1,487.0 875.8,487.8 876.5,488.7 877.2,488.6 877.9,489.3 878.6,490.6 879.3,491.0 880.0,491.2 880.7,491.6 881.4,492.0 882.1,491.8 882.8,492.2 883.5,492.6 884.2,491.0 884.9,487.5 885.6,483.1 886.3,478.7 887.0,475.0 887.7,470.9 888.4,470.1 889.1,473.0 889.8,472.0 890.5,475.3 891.2,479.1 891.9,481.8 892.6,484.4 893.3,486.2 894.0,488.4 894.7,489.4 895.4,490.6 896.1,491.0 896.8,492.1 897.5,492.2 898.2,492.5 898.9,492.7 899.6,493.5 900.3,494.0 901.0,494.1 901.7,494.2 902.4,494.5 903.1,493.5 903.8,490.3 904.5,485.7 905.2,480.4 905.9,475.4 906.6,471.3 907.3,469.0 908.0,470.4 908.7,470.4 909.4,474.0 910.1,477.6 910.8,480.3 911.5,483.5 912.2,485.8 912.9,487.1 913.6,489.3 914.3,490.3 915.0,491.4 915.7,491.5 916.4,492.5 917.1,492.9 917.8,493.3 918.5,493.6 919.2,494.1 919.9,493.7 920.6,494.0 921.3,494.1 922.0,494.4 922.7,491.7 923.4,487.2 924.1,482.1 924.8,476.7 925.5,472.7 926.2,470.3 926.9,471.3 927.6,471.1 928.3,471.2 929.0,475.3 929.7,479.4 930.4,481.2 931.1,483.7 931.8,485.3 932.5,486.7 933.2,487.6 933.9,488.5 934.6,489.0 935.3,489.6 936.0,490.4 936.7,490.6 937.4,491.3 938.1,491.9 938.8,492.0 939.5,492.1 940.2,492.0 940.9,492.0 941.6,490.7 942.3,487.2 943.0,482.6 943.7,478.7 944.4,475.2 945.1,473.4 945.8,471.3 946.5,474.1 947.2,473.5 947.9,477.6 948.6,480.0 949.3,483.0 950.0,484.6 950.7,485.9 951.4,488.3 952.1,489.9 952.8,491.1 953.5,491.7 954.2,492.1 954.9,492.4 955.6,493.0 956.3,493.3 957.0,493.6 957.7,494.1 958.4,494.2 959.1,494.3 959.8,494.5 960.5,493.2 961.2,489.3 961.9,484.3 962.6,478.6 963.3,473.0 964.0,468.5 964.7,468.4 965.4,468.9 966.1,468.3 966.8,471.4 967.5,475.7 968.2,479.2 968.9,481.9 969.6,483.9 970.3,485.3 971.0,487.2 971.7,488.4 972.4,489.1 973.1,490.3 973.8,490.7 974.5,491.2 975.2,491.2 975.9,492.1 976.6,492.3 977.3,492.6 978.0,492.6 978.7,493.1 979.4,492.3 980.1,489.6 980.8,484.7 981.5,479.5 982.2,474.2 982.9,470.6 983.6,469.5 984.3,468.4 985.0,470.9 985.7,471.3 986.4,474.9 987.1,478.5 987.8,481.6 988.5,483.5 989.2,485.4 989.9,486.7 990.6,488.3 991.3,489.5 992.0,490.0 992.7,490.4 993.4,490.7 994.1,491.4 994.8,491.6 995.5,492.4 996.2,492.3 996.9,492.4 997.6,492.6 998.3,492.6 999.0,490.5 999.7,485.8 1000.4,480.6 1001.1,475.5 1001.8,470.8 1002.5,467.1 1003.2,468.0 1003.9,469.8 1004.6,470.2 1005.3,472.4 1006.0,476.5 1006.7,479.1 1007.4,481.4 1008.1,483.3 1008.8,485.5 1009.5,487.1 1010.2,488.1 1010.9,488.9 1011.6,489.4 1012.3,490.4 1013.0,490.6 1013.7,490.7 1014.4,491.3 1015.1,491.8 1015.8,491.5 1016.5,492.0 1017.2,491.8 1017.9,491.0 1018.6,487.7 1019.3,483.1 1020.0,478.1 1020.7,474.6 1021.4,472.5 1022.1,471.1 1022.8,472.1 1023.5,473.1 1024.2,474.7 1024.9,477.4 1025.6,480.5 1026.3,482.6 1027.0,483.9 1027.7,485.6 1028.4,486.5 1029.1,487.7 1029.8,488.6 1030.5,488.9 1031.2,489.0 1031.9,489.9 1032.6,490.1 1033.3,490.8 1034.0,490.5 1034.7,491.2 1035.4,491.6 1036.1,491.7 1036.8,490.7 1037.5,488.1 1038.2,483.8 1038.9,479.5 1039.6,475.0 1040.3,471.1 1041.0,470.1 1041.7,471.4 1042.4,471.4 1043.1,471.2 1043.8,476.8 1044.5,480.3 1045.2,483.1 1045.9,485.0 1046.6,486.8 1047.3,488.2 1048.0,489.4 1048.7,490.1 1049.4,491.1 1050.1,491.6 1050.8,492.2 1051.5,492.7 1052.2,493.2 1052.9,493.3 1053.6,493.3 1054.3,493.4 1055.0,493.9 1055.7,493.5 1056.4,491.5 1057.1,487.2 1057.8,482.5 1058.5,477.3 1059.2,473.0 1059.9,471.4 1060.6,470.6 1061.3,471.9 1062.0,473.4 1062.7,475.7 1063.4,479.0 1064.1,481.7 1064.8,483.5 1065.5,485.0 1066.2,485.8 1066.9,487.7 1067.6,488.6 1068.3,489.3 1069.0,490.4 1069.7,490.3 1070.4,491.3 1071.1,491.3 1071.8,491.8 1072.5,491.5 1073.2,492.1 1073.9,492.3 1074.6,492.4 1075.3,491.1 1076.0,489.1 1076.7,486.4 1077.4,483.5 1078.1,481.1 1078.8,479.2 1079.5,477.9 1080.2,480.1 1080.9,480.9 1081.6,481.3 1082.3,483.4 1083.0,485.6 1083.7,486.7 1084.4,488.2 1085.1,488.8 1085.8,490.1 1086.5,490.1 1087.2,490.8 1087.9,491.1 1088.6,491.6 1089.3,491.8 1090.0,492.2 1090.7,492.2 1091.4,492.8 1092.1,492.5 1092.8,492.8 1093.5,493.0 1094.2,492.0 1094.9,489.6 1095.6,485.5 1096.3,481.5 1097.0,476.7 1097.7,474.2 1098.4,475.0 1099.1,474.0 1099.8,473.6 1100.5,476.2 1101.2,479.6 1101.9,482.4 1102.6,484.6 1103.3,486.7 1104.0,488.6 1104.7,490.0 1105.4,490.9 1106.1,491.7 1106.8,492.9 1107.5,493.2 1108.2,493.4 1108.9,493.5 1109.6,493.9 1110.3,495.0 1111.0,494.4 1111.7,494.8 1112.4,495.0 1113.1,494.7 1113.8,493.3 1114.5,490.4 1115.2,487.1 1115.9,484.3 1116.6,481.7 1117.3,479.7 1118.0,479.8 1118.7,481.5 1119.4,480.5 1120.1,484.9 1120.8,487.9 1121.5,490.8 1122.2,492.0 1122.9,493.9 1123.6,495.0 1124.3,496.2 1125.0,496.9 1125.7,496.7 1126.4,497.2 1127.1,497.8 1127.8,498.6 1128.5,499.1 1129.2,498.9 1129.9,499.2 1130.6,499.5 1131.3,499.6 1132.0,499.9 1132.7,498.5 1133.4,495.9 1134.1,492.3 1134.8,489.0 1135.5,485.4 1136.2,483.0 1136.9,482.3 1137.6,485.2 1138.3,484.4 1139.0,487.4 1139.7,491.2 1140.4,494.1 1141.1,496.2 1141.8,498.2 1142.5,499.6 1143.2,500.8 1143.9,501.6 1144.6,502.1 1145.3,502.2 1146.0,503.2 1146.7,504.2 1147.4,504.6 1148.1,504.4 1148.8,505.0 1149.5,505.1 1150.2,505.6 1150.9,505.2 1151.6,504.1 1152.3,500.3 1153.0,494.3 1153.7,488.6 1154.4,482.9 1155.1,478.6 1155.8,477.1 1156.5,478.0 1157.2,479.9 1157.9,481.8 1158.6,485.2 1159.3,489.0 1160.0,492.1 1160.7,494.5 1161.4,496.1 1162.1,497.9 1162.8,499.2 1163.5,499.3 1164.2,500.4 1164.9,501.5 1165.6,502.2 1166.3,502.6 1167.0,502.8 1167.7,503.2 1168.4,503.3 1169.1,503.5 1169.8,503.6 1170.5,503.0 1171.2,499.9 1171.9,494.8 1172.6,488.7 1173.3,482.7 1174.0,478.3 1174.7,475.5 1175.4,477.9 1176.1,477.6 1176.8,477.7 1177.5,481.7 1178.2,485.6 1178.9,488.2 1179.6,490.3 1180.3,492.0 1181.0,493.2 1181.7,495.0 1182.4,495.7 1183.1,497.0 1183.8,497.0 1184.5,497.3 1185.2,497.9 1185.9,498.2 1186.6,498.6 1187.3,498.7 1188.0,498.8 1188.7,499.4 1189.4,499.3 1190.1,497.0 1190.8,492.5 1191.5,487.5 1192.2,482.2 1192.9,477.5 1193.6,475.3 1194.3,474.2 1195.0,474.9 1195.7,475.5 1196.4,479.2 1197.1,483.0 1197.8,485.6 1198.5,486.6 1199.2,488.9 1199.9,490.6 1200.6,492.3 1201.3,493.4 1202.0,494.4 1202.7,494.6 1203.4,495.2 1204.1,495.4 1204.8,495.4 1205.5,495.8 1206.2,496.5 1206.9,496.3 1207.6,496.6 1208.3,497.0 1209.0,495.0 1209.7,491.4 1210.4,486.7 1211.1,481.1 1211.8,476.8 1212.5,473.0 1213.2,471.1 1213.9,473.3 1214.6,474.1 1215.3,475.0 1216.0,480.3 1216.7,483.2 1217.4,485.8 1218.1,487.3 1218.8,489.1 1219.5,490.6 1220.2,491.9 1220.9,492.2 1221.6,493.0 1222.3,493.0 1223.0,493.7 1223.7,494.5 1224.4,494.6 1225.1,495.1 1225.8,495.5 1226.5,495.9 1227.2,495.9 1227.9,494.9 1228.6,491.7 1229.3,486.8 1230.0,480.9 1230.7,474.8 1231.4,471.0 1232.1,469.5 1232.8,470.6 1233.5,469.6 1234.2,472.4 1234.9,477.5 1235.6,481.4 1236.3,483.8 1237.0,486.4 1237.7,488.6 1238.4,490.1 1239.1,491.2 1239.8,491.9 1240.5,492.9 1241.2,493.9 1241.9,494.5 1242.6,495.0 1243.3,495.5 1244.0,495.7 1244.7,496.1 1245.4,497.0 1246.1,496.7 1246.8,496.3 1247.5,493.4 1248.2,488.3 1248.9,482.3 1249.6,476.3 1250.3,471.3 1251.0,470.9 1251.7,469.0 1252.4,469.9 1253.1,469.5 1253.8,474.2 1254.5,478.4 1255.2,481.8 1255.9,484.2 1256.6,486.8 1257.3,487.8 1258.0,489.6 1258.7,490.2 1259.4,491.7 1260.1,492.5 1260.8,493.0 1261.5,493.6 1262.2,493.9 1262.9,494.2 1263.6,494.1 1264.3,494.5 1265.0,494.4 1265.7,495.1 1266.4,493.5 1267.1,490.7 1267.8,486.7 1268.5,482.3 1269.2,477.9 1269.9,475.6 1270.6,476.9 1271.3,476.0 1272.0,476.4 1272.7,480.0 1273.4,483.7 1274.1,486.9 1274.8,488.9 1275.5,490.7 1276.2,492.5 1276.9,493.6 1277.6,494.3 1278.3,495.8 1279.0,496.3 1279.7,496.1 1280.4,497.1 1281.1,497.3 1281.8,497.6 1282.5,497.6 1283.2,498.2 1283.9,498.3 1284.6,498.6 1285.3,497.9 1286.0,494.7 1286.7,491.0 1287.4,487.0 1288.1,483.0 1288.8,479.8 1289.5,479.1 1290.2,478.7 1290.9,479.8 1291.6,481.1 1292.3,484.5 1293.0,487.0 1293.7,489.1 1294.4,490.8 1295.1,492.1 1295.8,493.8 1296.5,494.3 1297.2,495.0 1297.9,496.0 1298.6,496.0 1299.3,495.3 1300.0,496.1 1300.7,496.9 1301.4,497.5 1302.1,497.6 1302.8,497.6 1303.5,497.3 1304.2,497.0 1304.9,494.7 1305.6,490.3 1306.3,485.1 1307.0,480.3 1307.7,476.1 1308.4,473.0 1309.1,473.8 1309.8,475.2 1310.5,475.2 1311.2,480.5 1311.9,485.1 1312.6,488.4 1313.3,491.7 1314.0,493.4 1314.7,495.1 1315.4,496.0 1316.1,497.6 1316.8,498.9 1317.5,499.6 1318.2,500.4 1318.9,500.8 1319.6,501.5 1320.3,501.4 1321.0,501.9 1321.7,502.3 1322.4,502.2 1323.1,502.5 1323.8,500.7 1324.5,495.9 1325.2,490.6 1325.9,484.8 1326.6,479.9 1327.3,476.4 1328.0,476.1 1328.7,476.3 1329.4,477.8 1330.1,480.9 1330.8,484.8 1331.5,487.6 1332.2,490.0 1332.9,491.7 1333.6,493.7 1334.3,494.9 1335.0,496.4 1335.7,497.3 1336.4,498.0 1337.1,498.3 1337.8,498.7 1338.5,499.1 1339.2,499.7 1339.9,500.1 1340.6,499.9 1341.3,500.0 1342.0,500.3 1342.7,498.9 1343.4,494.9 1344.1,489.3 1344.8,482.6 1345.5,476.1 1346.2,472.2 1346.9,471.0 1347.6,473.3 1348.3,473.4 1349.0,474.5 1349.7,480.0 1350.4,483.9 1351.1,486.6 1351.8,488.7 1352.5,491.2 1353.2,492.5 1353.9,493.1 1354.6,494.4 1355.3,495.0 1356.0,495.6 1356.7,496.7 1357.4,497.1 1358.1,497.6 1358.8,497.9 1359.5,497.8 1360.2,498.3 1360.9,498.5 1361.6,497.6 1362.3,494.8 1363.0,490.1 1363.7,484.4 1364.4,478.9 1365.1,473.0 1365.8,471.5 1366.5,473.8 1367.2,472.4 1367.9,475.0 1368.6,479.3 1369.3,482.6 1370.0,485.6 1370.7,487.6 1371.4,489.4 1372.1,491.1 1372.8,492.2 1373.5,493.1 1374.2,494.1 1374.9,494.7 1375.6,495.4 1376.3,495.9 1377.0,496.1 1377.7,496.8 1378.4,496.7 1379.1,496.9 1379.8,497.0 1380.5,496.8 1381.2,494.7 1381.9,491.3 1382.6,487.2 1383.3,482.4 1384.0,478.2 1384.7,475.6 1385.4,476.5 1386.1,477.1 1386.8,476.6 1387.5,480.7 1388.2,484.1 1388.9,486.7 1389.6,489.3 1390.3,491.7 1391.0,493.2 1391.7,494.3 1392.4,495.1 1393.1,496.1 1393.8,497.1 1394.5,497.8 1395.2,498.0 1395.9,498.1 1396.6,498.1 1397.3,498.9 1398.0,498.7 1398.7,499.0 1399.4,499.5 1400.1,498.2 1400.8,495.4 1401.5,493.0 1402.2,489.4 1402.9,485.2 1403.6,484.6 1404.3,481.9 1405.0,484.7 1405.7,484.5 1406.4,486.6 1407.1,487.4 1407.8,489.1 1408.5,490.7 1409.2,491.3 1409.9,491.8 1410.6,492.6 1411.3,493.5 1412.0,493.9 1412.7,494.6 1413.4,494.9 1414.1,495.0 1414.8,495.6 1415.5,495.3 1416.2,495.8 1416.9,495.5 1417.6,495.8 1418.3,495.3 1419.0,495.2 1419.7,493.3 1420.4,489.6 1421.1,486.1 1421.8,482.6 1422.5,478.9 1423.2,478.1 1423.9,479.5 1424.6,477.2 1425.3,480.4 1426.0,482.3 1426.7,484.7 1427.4,486.2 1428.1,487.5 1428.8,488.3 1429.5,489.4 1430.2,490.2 1430.9,490.9 1431.6,491.1 1432.3,491.7 1433.0,491.9 1433.7,492.3 1434.4,492.7 1435.1,492.9 1435.8,492.7 1436.5,493.1 1437.2,493.1 1437.9,493.2 1438.6,492.1 1439.3,491.0 1440.0,489.7 1440.7,488.4 1441.4,486.0 1442.1,486.3 1442.8,485.4 1443.5,485.8 1444.2,486.3 1444.9,487.9 1445.6,488.8 1446.3,489.9 1447.0,490.1 1447.7,491.1 1448.4,491.5 1449.1,491.2 1449.8,491.1 1450.5,491.5 1451.2,492.1 1451.9,492.5 1452.6,492.6 1453.3,493.5 1454.0,492.8 1454.7,493.3 1455.4,493.1 1456.1,493.2 1456.8,493.0 1457.5,492.2 1458.2,489.7 1458.9,486.5 1459.6,483.5 1460.3,481.8 1461.0,478.5 1461.7,477.7 1462.4,478.3 1463.1,479.8 1463.8,480.8 1464.5,483.5 1465.2,486.1 1465.9,487.3 1466.6,488.6 1467.3,490.1 1468.0,491.0 1468.7,491.4 1469.4,491.9 1470.1,492.6 1470.8,492.5 1471.5,492.4 1472.2,493.8 1472.9,494.2 1473.6,494.4 1474.3,494.2 1475.0,494.1 1475.7,494.3 1476.4,494.2 1477.1,492.6 1477.8,491.2 1478.5,489.4 1479.2,487.4 1479.9,486.8 1480.6,485.9 1481.3,485.7 1482.0,486.1 1482.7,488.3 1483.4,490.2 1484.1,492.4 1484.8,494.0 1485.5,494.8 1486.2,496.0 1486.9,497.0 1487.6,497.8 1488.3,498.4 1489.0,498.8 1489.7,499.1 1490.4,498.6 1491.1,498.8 1491.8,499.6 1492.5,499.8 1493.2,500.3 1493.9,499.8 1494.6,500.4 1495.3,500.0 1496.0,498.5 1496.7,495.4 1497.4,491.3 1498.1,488.3 1498.8,485.6 1499.5,482.9 1500.2,485.2 1500.9,484.7 1501.6,484.2 1502.3,488.2 1503.0,490.6 1503.7,493.0 1504.4,494.3 1505.1,495.5 1505.8,496.5 1506.5,496.6 1507.2,497.8 1507.9,498.9 1508.6,499.3 1509.3,500.0 1510.0,499.9 1510.7,500.3 1511.4,501.0 1512.1,500.4 1512.8,500.6 1513.5,501.0 1514.2,500.7 1514.9,500.3 1515.6,499.2 1516.3,497.6 1517.0,496.1 1517.7,494.1 1518.4,492.9 1519.1,493.2 1519.8,494.5 1520.5,493.1 1521.2,495.6 1521.9,495.9 1522.6,497.8 1523.3,498.5 1524.0,499.5 1524.7,500.1 1525.4,500.1 1526.1,500.2 1526.8,500.1 1527.5,500.9 1528.2,501.3 1528.9,501.6 1529.6,501.6 1530.3,502.6 1531.0,502.1 1531.7,502.2 1532.4,502.0 1533.1,502.6 1533.8,502.1 1534.5,502.2 1535.2,500.9 1535.9,500.3 1536.6,500.0 1537.3,500.2 1538.0,498.6 1538.7,499.1 1539.4,498.9 1540.1,499.3 1540.8,500.9 1541.5,501.2 1542.2,501.6 1542.9,501.8 1543.6,501.8 1544.3,502.3 1545.0,502.8 1545.7,503.1 1546.4,503.3 1547.1,540.0 1547.8,540.0 1548.5,540.0 1549.2,540.0 1549.9,540.0 1550.6,540.0 1551.3,540.0 1552.0,540.0 1552.7,540.0 1553.4,540.0 1554.1,540.0 1554.8,540.0 1555.5,540.0 1556.2,540.0 1556.9,540.0 1557.6,540.0 1558.3,540.0 1559.0,540.0 1559.7,540.0 1560.4,540.0 1561.1,540.0 1561.8,540.0 1562.5,540.0 1563.2,540.0 1563.9,540.0 1564.6,540.0 1565.3,540.0 1566.0,540.0 1566.7,540.0 1567.4,540.0 1568.1,540.0 1568.8,540.0 1569.5,540.0 1570.2,540.0 1570.9,540.0 1571.6,540.0 1572.3,540.0 1573.0,540.0 1573.7,540.0 1574.4,540.0 1575.1,540.0 1575.8,540.0 1576.5,540.0 1577.2,540.0 1577.9,540.0 1578.6,540.0 1579.3,540.0 1580.0,540.0 1580.7,540.0 1581.4,540.0 1582.1,540.0 1582.8,540.0 1583.5,540.0 1584.2,540.0 1584.9,540.0 1585.6,540.0 1586.3,540.0 1587.0,540.0 1587.7,540.0 1588.4,540.0 1589.1,540.0 1589.8,540.0 1590.5,540.0 1591.2,540.0 1591.9,540.0 1592.6,540.0 1593.3,540.0 1594.0,540.0 1594.7,540.0 1595.4,540.0 1596.1,540.0 1596.8,540.0 1597.5,540.0 1598.2,540.0 1598.9,540.0 1599.6,540.0 1600.3,540.0 1601.0,540.0 1601.7,540.0 1602.4,540.0 1603.1,540.0 1603.8,540.0 1604.5,540.0 1605.2,540.0 1605.9,540.0 1606.6,540.0 1607.3,540.0 1608.0,540.0 1608.7,540.0 1609.4,540.0 1610.1,540.0 1610.8,540.0 1611.5,540.0 1612.2,540.0 1612.9,540.0 1613.6,540.0 1614.3,540.0 1615.0,540.0 1615.7,540.0 1616.4,540.0 1617.1,540.0 1617.8,540.0 1618.5,540.0 1619.2,540.0 1619.9,540.0 1620.6,540.0 1621.3,540.0 1622.0,540.0 1622.7,540.0 1623.4,540.0 1624.1,540.0 1624.8,540.0 1625.5,540.0 1626.2,540.0 1626.9,540.0 1627.6,540.0 1628.3,540.0 1629.0,540.0 1629.7,540.0 1630.4,540.0 1631.1,540.0 1631.8,540.0 1632.5,540.0 1633.2,540.0 1633.9,540.0 1634.6,540.0 1635.3,540.0 1636.0,540.0 1636.7,540.0 1637.4,540.0 1638.1,540.0 1638.8,540.0 1639.5,540.0 1640.2,540.0 1640.9,540.0 1641.6,540.0 1642.3,540.0 1643.0,540.0 1643.7,540.0 1644.4,540.0 1645.1,540.0 1645.8,540.0 1646.5,540.0 1647.2,540.0 1647.9,540.0 1648.6,540.0 1649.3,540.0 1650.0,540.0 1650.7,540.0 1651.4,540.0 1652.1,540.0 1652.8,540.0 1653.5,540.0 1654.2,540.0 1654.9,540.0 1655.6,540.0 1656.3,540.0 1657.0,540.0 1657.7,540.0 1658.4,540.0 1659.1,540.0 1659.8,540.0 1660.5,540.0 1661.2,540.0 1661.9,540.0 1662.6,540.0 1663.3,540.0 1664.0,540.0 1664.7,540.0 1665.4,540.0 1666.1,540.0 1666.8,540.0 1667.5,540.0 1668.2,540.0 1668.9,540.0 1669.6,540.0 1670.3,540.0 1671.0,540.0 1671.7,540.0 1672.4,540.0 1673.1,540.0 1673.8,540.0 1674.5,540.0 1675.2,540.0 1675.9,540.0 1676.6,540.0 1677.3,540.0 1678.0,540.0 1678.7,540.0 1679.4,540.0 1680.1,540.0 1680.8,540.0 1681.5,540.0 1682.2,540.0 1682.9,540.0 1683.6,540.0 1684.3,540.0 1685.0,540.0 1685.7,540.0 1686.4,540.0 1687.1,540.0 1687.8,540.0 1688.5,540.0 1689.2,540.0 1689.9,540.0 1690.6,540.0 1691.3,540.0 1692.0,540.0 1692.7,540.0 1693.4,540.0 1694.1,540.0 1694.8,540.0 1695.5,540.0 1696.2,540.0 1696.9,540.0 1697.6,540.0 1698.3,540.0 1699.0,540.0 1699.7,540.0 1700.4,540.0 1701.1,540.0 1701.8,540.0 1702.5,540.0 1703.2,540.0 1703.9,540.0 1704.6,540.0 1705.3,540.0 1706.0,540.0 1706.7,540.0 1707.4,540.0 1708.1,540.0 1708.8,540.0 1709.5,540.0 1710.2,540.0 1710.9,540.0 1711.6,540.0 1712.3,540.0 1713.0,540.0 1713.7,540.0 1714.4,540.0 1715.1,540.0 1715.8,540.0 1716.5,540.0 1717.2,540.0 1717.9,540.0 1718.6,540.0 1719.3,540.0 1720.0,540.0 1720.7,540.0 1721.4,540.0 1722.1,540.0 1722.8,540.0 1723.5,540.0 1724.2,540.0 1724.9,540.0 1725.6,540.0 1726.3,540.0 1727.0,540.0 1727.7,540.0 1728.4,540.0 1729.1,540.0 1729.8,540.0 1730.5,540.0 1731.2,540.0 1731.9,540.0 1732.6,540.0 1733.3,540.0 1734.0,540.0 1734.7,540.0 1735.4,540.0 1736.1,540.0 1736.8,540.0 1737.5,540.0 1738.2,540.0 1738.9,540.0 1739.6,540.0 1740.3,540.0 1741.0,540.0 1741.7,540.0 1742.4,540.0 1743.1,540.0 1743.8,540.0 1744.5,540.0 1745.2,540.0 1745.9,540.0 1746.6,540.0 1747.3,540.0 1748.0,540.0 1748.7,540.0 1749.4,540.0 1750.1,540.0 1750.8,540.0 1751.5,540.0 1752.2,540.0 1752.9,540.0 1753.6,540.0 1754.3,540.0 1755.0,540.0 1755.7,540.0 1756.4,540.0 1757.1,540.0 1757.8,540.0 1758.5,540.0 1759.2,540.0 1759.9,540.0 1760.6,494.5 1761.3,493.8 1762.0,494.7 1762.7,494.2 1763.4,492.0 1764.1,488.0 1764.8,482.7 1765.5,477.8 1766.2,472.8 1766.9,471.2 1767.6,470.8 1768.3,472.4 1769.0,472.5 1769.7,475.6 1770.4,479.2 1771.1,482.2 1771.8,484.1 1772.5,486.0 1773.2,487.3 1773.9,488.4 1774.6,489.4 1775.3,490.2 1776.0,490.4 1776.7,491.1 1777.4,491.6 1778.1,492.2 1778.8,492.6 1779.5,493.1 1780.2,492.8 1780.9,493.0 1781.6,493.0 1782.3,491.8 1783.0,488.3 1783.7,484.1 1784.4,479.4 1785.1,475.7 1785.8,472.8 1786.5,472.0 1787.2,471.7 1787.9,472.4 1788.6,474.6 1789.3,478.3 1790.0,480.7 1790.7,483.5 1791.4,484.8 1792.1,486.5 1792.8,487.8 1793.5,488.6 1794.2,489.8 1794.9,490.0 1795.6,490.5 1796.3,490.8 1797.0,491.1 1797.7,491.7 1798.4,492.1 1799.1,492.0 1799.8,492.2 1800.5,492.2 1801.2,491.7 1801.9,489.3 1802.6,485.4 1803.3,481.2 1804.0,477.1 1804.7,475.3 1805.4,471.2 1806.1,474.0 1806.8,472.6 1807.5,473.8 1808.2,477.2 1808.9,479.9 1809.6,482.1 1810.3,483.4 1811.0,484.8 1811.7,485.6 1812.4,486.6 1813.1,486.9 1813.8,487.7 1814.5,487.8 1815.2,488.1 1815.9,489.1 1816.6,489.4 1817.3,489.2 1818.0,489.7 1818.7,489.6 1819.4,489.9 1820.1,489.7 1820.8,488.4 1821.5,486.4 1822.2,484.3 1822.9,482.0 1823.6,480.3 1824.3,477.8 1825.0,479.0 1825.7,479.5 1826.4,480.9 1827.1,483.1 1827.8,485.4 1828.5,487.6 1829.2,489.0 1829.9,490.7 1830.6,491.4 1831.3,492.5 1832.0,493.3 1832.7,493.4 1833.4,493.7 1834.1,493.8 1834.8,494.7 1835.5,495.0 1836.2,495.2 1836.9,495.5 1837.6,495.1 1838.3,495.7 1839.0,495.9 1839.7,493.9 1840.4,490.6 1841.1,486.4 1841.8,481.7 1842.5,478.2 1843.2,473.3 1843.9,475.1 1844.6,474.4 1845.3,475.1 1846.0,477.8 1846.7,481.6 1847.4,484.6 1848.1,486.4 1848.8,488.6 1849.5,490.0 1850.2,491.0 1850.9,492.3 1851.6,492.7 1852.3,493.2 1853.0,493.7 1853.7,494.3 1854.4,494.6 1855.1,495.0 1855.8,495.5 1856.5,495.5 1857.2,495.7 1857.9,495.7 1858.6,495.0 1859.3,492.6 1860.0,488.5 1860.7,484.4 1861.4,479.1 1862.1,476.8 1862.8,476.2 1863.5,476.5 1864.2,475.8 1864.9,477.8 1865.6,481.4 1866.3,483.2 1867.0,484.7 1867.7,485.9 1868.4,487.7 1869.1,489.3 1869.8,490.2 1870.5,490.3 1871.2,491.5 1871.9,491.5 1872.6,491.9 1873.3,492.6 1874.0,492.5 1874.7,492.5 1875.4,492.7 1876.1,492.8 1876.8,492.9 1877.5,492.7 1878.2,490.5 1878.9,486.1 1879.6,481.1 1880.3,476.5 1881.0,472.5 1881.7,471.1 1882.4,470.7 1883.1,471.3 1883.8,472.4 1884.5,475.4 1885.2,478.4 1885.9,481.0 1886.6,483.1 1887.3,485.2 1888.0,486.7 1888.7,487.7 1889.4,488.4 1890.1,489.6 1890.8,489.3 1891.5,490.1 1892.2,490.4 1892.9,491.4 1893.6,491.1 1894.3,491.4 1895.0,491.7 1895.7,492.0 1896.4,491.4 1897.1,490.5 1897.8,487.5 1898.5,483.5 1899.2,479.5 1899.9,475.7 1900.6,473.8 1901.3,473.8 1902.0,474.5" fill="none" stroke="#0e8a45" stroke-width="1.650" stroke-linejoin="round"/><circle cx="486.600" cy="240.500" r="4.800" fill="#9c1f8f"/><circle cx="486.600" cy="349.800" r="4.800" fill="#4a7ac0"/><circle cx="486.600" cy="467.800" r="4.800" fill="#0e8a45"/></svg>
<div class="t dv" style="left:1895.5px;top:150.3px;font-size:15.8px;color:#d1561f;font-weight:400;transform:translate(-100%,-50%);">Downtime</div>
<div class="t dv" style="left:1895.5px;top:182.3px;font-size:16px;color:#3f51a5;font-weight:400;transform:translate(-100%,-50%);">Monthly</div>
<div class="t dv" style="left:1895.5px;top:213.3px;font-size:15.75px;color:#9c1f8f;font-weight:400;transform:translate(-100%,-50%);">Fuel Gas Flow (Corrected)</div>
<div class="t dv" style="left:1895.5px;top:335.3px;font-size:15.75px;color:#4a7ac0;font-weight:400;transform:translate(-100%,-50%);">Fuel Gas Heating Value (Cleansed)</div>
<div class="t dv" style="left:1895.5px;top:458.3px;font-size:16px;color:#0e8a45;font-weight:400;transform:translate(-100%,-50%);">Fuel Gas Consumption</div>
<div class="t dv" style="left:1895.5px;top:581.3px;font-size:16.15px;color:#aa4525;font-weight:400;transform:translate(-100%,-50%);">Fuel Gas Consumption– Monthly</div>
<div class="t dv" style="left:152px;top:220px;font-size:15px;color:#9c1f8f;font-weight:400;transform:translate(-100%,-50%);">937</div>
<div class="t dv" style="left:152px;top:258px;font-size:15px;color:#9c1f8f;font-weight:400;transform:translate(-100%,-50%);">539</div>
<div class="t dv" style="left:152px;top:296px;font-size:15px;color:#9c1f8f;font-weight:400;transform:translate(-100%,-50%);">141</div>
<div class="t dv" style="left:152px;top:342px;font-size:15px;color:#4a7ac0;font-weight:400;transform:translate(-100%,-50%);">1366</div>
<div class="t dv" style="left:152px;top:380px;font-size:15px;color:#4a7ac0;font-weight:400;transform:translate(-100%,-50%);">959</div>
<div class="t dv" style="left:152px;top:419px;font-size:15px;color:#4a7ac0;font-weight:400;transform:translate(-100%,-50%);">552</div>
<div class="t dv" style="left:152px;top:465px;font-size:15px;color:#0e8a45;font-weight:400;transform:translate(-100%,-50%);">956786</div>
<div class="t dv" style="left:152px;top:503px;font-size:15px;color:#0e8a45;font-weight:400;transform:translate(-100%,-50%);">478393</div>
<div class="t dv" style="left:152px;top:542px;font-size:15px;color:#0e8a45;font-weight:400;transform:translate(-100%,-50%);">0</div>
<div class="t dv" style="left:152px;top:587px;font-size:14.5px;color:#aa4525;font-weight:400;transform:translate(-100%,-50%);">509.2E+6</div>
<div class="t dv" style="left:152px;top:625px;font-size:14.5px;color:#aa4525;font-weight:400;transform:translate(-100%,-50%);">448.8E+6</div>
<div class="t dv" style="left:152px;top:664px;font-size:14.5px;color:#aa4525;font-weight:400;transform:translate(-100%,-50%);">388.4E+6</div>
<div class="t dv" style="left:103px;top:257px;font-size:16.600px;letter-spacing:.400px;color:#9c1f8f;transform:translate(-50%,-50%) rotate(-90deg)">ft<span style="font-size:.62em;position:relative;top:-.55em">3</span>/h</div>
<div class="t dv" style="left:94.5px;top:379px;font-size:16.600px;letter-spacing:.400px;color:#4a7ac0;transform:translate(-50%,-50%) rotate(-90deg)">BTU/ft<span style="font-size:.62em;position:relative;top:-.55em">3</span></div>
<div class="t dv" style="left:76.5px;top:502px;font-size:16.600px;letter-spacing:.400px;color:#0e8a45;transform:translate(-50%,-50%) rotate(-90deg)">BTU/h</div>
<div class="t dv" style="left:60.5px;top:624px;font-size:16.600px;letter-spacing:.400px;color:#aa4525;transform:translate(-50%,-50%) rotate(-90deg)">BTU</div>
<div class="abs dv" style="left:492px;top:222.2px;width:105.6px;height:24.500px;background:#9c1f8f;border-radius:1px;color:#fff;font-size:16.9px;line-height:28.200px;padding-left:3.500px;white-space:pre;overflow:hidden">708.34 ft<span style="font-size:.62em;position:relative;top:-.55em">3</span>/h</div>
<div class="abs dv" style="left:492px;top:331.5px;width:127.5px;height:24.500px;background:#4a7ac0;border-radius:1px;color:#fff;font-size:16.5px;line-height:28.200px;padding-left:3.500px;white-space:pre;overflow:hidden">1263.2 BTU/ft<span style="font-size:.62em;position:relative;top:-.55em">3</span></div>
<div class="abs dv" style="left:492px;top:449.4px;width:123px;height:24.500px;background:#0e8a45;border-radius:1px;color:#fff;font-size:16.3px;line-height:28.200px;padding-left:3.500px;white-space:pre;overflow:hidden">894083 BTU/h</div>
<div class="abs dv" style="left:492px;top:567.3px;width:100px;height:24.500px;background:#aa4525;border-radius:1px;color:#fff;font-size:15.5px;line-height:28.200px;padding-left:3.500px;white-space:pre;overflow:hidden">5.1e+8 BTU</div>
<div class="abs dv" style="left:386px;top:666px;width:199px;height:22px;background:#e8f3f0;border:1px solid #b9cfd0;border-radius:1px;color:#067a60;font-size:17.100px;letter-spacing:-.280px;line-height:23px;text-align:center;overflow:hidden;white-space:pre">10/31/2022 2:58:21 PM</div>
<div class="t ui" style="left:207.0px;top:700px;font-size:16.3px;color:#737a80;font-weight:400;transform:translate(-50%,-50%);">Oct 17</div>
<div class="t ui" style="left:340.9px;top:700px;font-size:16.3px;color:#737a80;font-weight:400;transform:translate(-50%,-50%);">Oct 24</div>
<div class="t ui" style="left:474.7px;top:700px;font-size:16.3px;color:#737a80;font-weight:400;transform:translate(-50%,-50%);">Oct 31</div>
<div class="t ui" style="left:608.5px;top:700px;font-size:16.3px;color:#737a80;font-weight:400;transform:translate(-50%,-50%);">Nov 7</div>
<div class="t ui" style="left:742.4px;top:700px;font-size:16.3px;color:#737a80;font-weight:400;transform:translate(-50%,-50%);">Nov 14</div>
<div class="t ui" style="left:876.2px;top:700px;font-size:16.3px;color:#737a80;font-weight:400;transform:translate(-50%,-50%);">Nov 21</div>
<div class="t ui" style="left:1010.1px;top:700px;font-size:16.3px;color:#737a80;font-weight:400;transform:translate(-50%,-50%);">Nov 28</div>
<div class="t ui" style="left:1143.9px;top:700px;font-size:16.3px;color:#737a80;font-weight:400;transform:translate(-50%,-50%);">Dec 5</div>
<div class="t ui" style="left:1277.8px;top:700px;font-size:16.3px;color:#737a80;font-weight:400;transform:translate(-50%,-50%);">Dec 12</div>
<div class="t ui" style="left:1411.6px;top:700px;font-size:16.3px;color:#737a80;font-weight:400;transform:translate(-50%,-50%);">Dec 19</div>
<div class="t ui" style="left:1545.5px;top:700px;font-size:16.3px;color:#737a80;font-weight:400;transform:translate(-50%,-50%);">Dec 26</div>
<div class="t ui" style="left:1679.3px;top:700px;font-size:16.3px;color:#737a80;font-weight:400;transform:translate(-50%,-50%);">Jan 2</div>
<div class="t ui" style="left:1813.2px;top:700px;font-size:16.3px;color:#737a80;font-weight:400;transform:translate(-50%,-50%);">Jan 9</div>
<svg style="left:46.5px;top:720px" width="14" height="19" viewBox="0 0 14 19" ><path d="M7 0v15" stroke="#067a60" stroke-width="3.200"/><path d="M1.200 10.200l5.800 6.600 5.800-6.600" fill="none" stroke="#067a60" stroke-width="3.200" stroke-linejoin="miter"/></svg>
<div class="t ui" style="left:72px;top:726.7px;font-size:14.5px;color:#067a60;font-weight:400;transform:translateY(-50%);">10/14/2022 11:29 AM  CDT</div>
<div class="t ui" style="left:1902px;top:726.7px;font-size:14.5px;color:#067a60;font-weight:400;transform:translate(-100%,-50%);">1/13/2023 4:29 PM  CST</div>
<svg style="left:816px;top:720.7px" width="20" height="18.6" viewBox="0 0 20 18.6" ><path d="M10 0v18.600l-10-9.300z" fill="#067a60"/><path d="M20 0v18.600l-10-9.300z" fill="#067a60"/></svg>
<svg style="left:854.7px;top:720.7px" width="10" height="18.6" viewBox="0 0 10 18.6" ><path d="M11.5 0v18.600l-10-9.300z" fill="#067a60"/></svg>
<div class="t ui" style="left:918px;top:727.7px;font-size:15.6px;color:#067a60;font-weight:400;transform:translate(-50%,-50%);">3 months</div>
<svg style="left:969.5px;top:720.7px" width="10" height="18.6" viewBox="0 0 10 18.6" ><path d="M0 0v18.600l10-9.300z" fill="#067a60"/></svg>
<svg style="left:1000.5px;top:720.7px" width="20" height="18.6" viewBox="0 0 20 18.6" ><path d="M0 0v18.600l10-9.300z" fill="#067a60"/><path d="M10 0v18.600l10-9.300z" fill="#067a60"/></svg>
<svg style="left:1040px;top:720.7px" width="13.5" height="18.6" viewBox="0 0 13.5 18.6" ><path d="M0 0v18.600l10-9.300z" fill="#067a60"/><rect x="10" y="0" width="3.300" height="18.600" fill="#067a60"/></svg>
<svg style="left:1073.3px;top:722.5px" width="14" height="14" viewBox="0 0 14 14" ><path d="M2 5.600A5.400 5.400 0 0 1 11.600 4" fill="none" stroke="#067a60" stroke-width="2.200"/><path d="M13.400 .8v5.400H8z" fill="#067a60"/><path d="M12 8.400A5.400 5.400 0 0 1 2.400 10" fill="none" stroke="#067a60" stroke-width="2.200"/><path d="M.6 13.200V7.800H6z" fill="#067a60"/></svg>
<svg style="left:1104.5px;top:720.5px" width="23" height="20" viewBox="0 0 23 20" ><path d="M1.200 9.800V8.200C1.200 6 2.800 4.400 5 4.400h3.500" fill="none" stroke="#067a60" stroke-width="1.700"/><path d="M8 1.300l3.600 3.100L8 7.500z" fill="#067a60"/><path d="M8.500 13.600H5.500" fill="none" stroke="#067a60" stroke-width="1.700"/><path d="M6 10.500l-3.600 3.100L6 16.700z" fill="#067a60"/><rect x="9.800" y="6.400" width="12.400" height="12.400" rx="1.400" fill="#fff" stroke="#067a60" stroke-width="1.700"/><rect x="9.800" y="6.400" width="12.400" height="4" fill="#067a60"/><path d="M13 4.600v3M19 4.600v3" stroke="#067a60" stroke-width="1.800" stroke-linecap="round"/></svg>
<div class="abs" style="left:36px;top:745.800px;width:1884px;height:1.200px;background:#e6e8ea"></div>
<div class="abs" style="left:70px;top:760px;width:1808px;height:18.500px;border:2.500px solid #dfe0e1;background:#fff"></div>
<div class="abs" style="left:1709px;top:759.600px;width:168px;height:19.300px;border:3px solid #067a60;background:#fff"></div>
<div class="abs" style="left:1706.2px;top:757px;width:6.800px;height:24.500px;background:#067a60;border-radius:.800px"></div>
<div class="abs" style="left:1709.0px;top:759.800px;width:1.200px;height:18.900px;background:#fff"></div>
<div class="abs" style="left:1872.3px;top:757px;width:6.800px;height:24.500px;background:#067a60;border-radius:.800px"></div>
<div class="abs" style="left:1875.1px;top:759.800px;width:1.200px;height:18.900px;background:#fff"></div>
<svg style="left:1882px;top:760.8px" width="16" height="19.2" viewBox="0 0 16 19.2" ><rect x="0" y="0" width="7.400" height="19.200" rx="1.600" fill="#067a60"/><rect x="8.600" y="0" width="7.400" height="19.200" rx="1.600" fill="#067a60"/><polyline points="0,10.600 1.200,10.600 2.500,4.600 4.300,15.200 5.800,5 7.400,10" fill="none" stroke="#fff" stroke-width="1.300" stroke-linejoin="round"/><polyline points="0,10.600 1.200,10.600 2.500,4.600 4.300,15.200 5.800,5 7.400,10" fill="none" stroke="#fff" stroke-width="1.300" stroke-linejoin="round" transform="translate(8.600 0)"/></svg>
<svg style="left:0;top:0" width="1920" height="800"><path d="M222.5 778v4M368.5 778v4M513.5 778v4M659.5 778v4M801.5 778v4M946.5 778v4M1091.5 778v4M1238.5 778v4M1380.5 778v4M1525.5 778v4M1670.5 778v4M1816.5 778v4" stroke="#dfe0e1" stroke-width="1"/></svg>
<div class="t ui" style="left:223px;top:793.5px;font-size:13.9px;color:#7a7d80;font-weight:400;transform:translate(-50%,-50%);">Apr '20</div>
<div class="t ui" style="left:369px;top:793.5px;font-size:13.9px;color:#7a7d80;font-weight:400;transform:translate(-50%,-50%);">Jul '20</div>
<div class="t ui" style="left:514px;top:793.5px;font-size:13.9px;color:#7a7d80;font-weight:400;transform:translate(-50%,-50%);">Oct '20</div>
<div class="t ui" style="left:660px;top:793.5px;font-size:13.9px;color:#7a7d80;font-weight:400;transform:translate(-50%,-50%);">Jan '21</div>
<div class="t ui" style="left:802px;top:793.5px;font-size:13.9px;color:#7a7d80;font-weight:400;transform:translate(-50%,-50%);">Apr '21</div>
<div class="t ui" style="left:947px;top:793.5px;font-size:13.9px;color:#7a7d80;font-weight:400;transform:translate(-50%,-50%);">Jul '21</div>
<div class="t ui" style="left:1092px;top:793.5px;font-size:13.9px;color:#7a7d80;font-weight:400;transform:translate(-50%,-50%);">Oct '21</div>
<div class="t ui" style="left:1239px;top:793.5px;font-size:13.9px;color:#7a7d80;font-weight:400;transform:translate(-50%,-50%);">Jan '22</div>
<div class="t ui" style="left:1381px;top:793.5px;font-size:13.9px;color:#7a7d80;font-weight:400;transform:translate(-50%,-50%);">Apr '22</div>
<div class="t ui" style="left:1526px;top:793.5px;font-size:13.9px;color:#7a7d80;font-weight:400;transform:translate(-50%,-50%);">Jul '22</div>
<div class="t ui" style="left:1671px;top:793.5px;font-size:13.9px;color:#7a7d80;font-weight:400;transform:translate(-50%,-50%);">Oct '22</div>
<div class="t ui" style="left:1817px;top:793.5px;font-size:13.9px;color:#7a7d80;font-weight:400;transform:translate(-50%,-50%);">Jan '23</div>
<svg style="left:47px;top:808px" width="14" height="19" viewBox="0 0 14 19" ><path d="M7 19V4" stroke="#067a60" stroke-width="3.200"/><path d="M1.200 8.800l5.800-6.600 5.800 6.600" fill="none" stroke="#067a60" stroke-width="3.200" stroke-linejoin="miter"/></svg>
<div class="t ui" style="left:71.5px;top:818.5px;font-size:15.4px;color:#067a60;font-weight:400;transform:translateY(-50%);">1/14/2020</div>
<div class="t ui" style="left:984.5px;top:818.5px;font-size:14.6px;color:#067a60;font-weight:400;transform:translate(-50%,-50%);">3 years</div>
<div class="t ui" style="left:1897.5px;top:818.5px;font-size:15.3px;color:#067a60;font-weight:400;transform:translate(-100%,-50%);">1/13/2023</div>
<div class="abs" style="left:36px;top:838px;width:1884px;height:10px;background:#e6e7ea"></div>
<div class="abs" style="left:975px;top:841px;width:8px;height:1.500px;background:#666"></div><div class="abs" style="left:975px;top:844.500px;width:8px;height:1.500px;background:#666"></div>
<div class="abs" style="left:36px;top:848px;width:1327px;height:38.400px;background:#f8f9f9;border-bottom:1.800px solid #e3e7eb"></div>
<svg style="left:49px;top:859px" width="20" height="17" viewBox="0 0 20 17" ><path d="M1 0v15.500h18" fill="none" stroke="#067a60" stroke-width="1.800"/><path d="M3.500 13.500V8.500l3.500-4.500 3.500 3.500 3.500-4 4 5v5z" fill="#067a60"/></svg>
<div class="t ui" style="left:77px;top:867.5px;font-size:16.4px;color:#067a60;font-weight:700;transform:translateY(-50%);">Details</div>
<div class="t ui" style="left:1227px;top:867.5px;font-size:15.7px;color:#333;font-weight:400;transform:translate(-100%,-50%);">Oct 31, 2022 2:58 PM</div>
<div class="abs" style="left:1241.500px;top:852.500px;width:114px;height:28.500px;border:1px solid #dcdcdc;border-radius:4px;background:#fff"></div>
<svg style="left:1250px;top:858px" width="19" height="18" viewBox="0 0 19 18" ><polygon points="12.97,8.36 12.97,9.64 10.98,10.36 10.63,11.21 11.52,13.12 10.62,14.02 8.71,13.13 7.86,13.48 7.14,15.47 5.86,15.47 5.14,13.48 4.29,13.13 2.38,14.02 1.48,13.12 2.37,11.21 2.02,10.36 0.03,9.64 0.03,8.36 2.02,7.64 2.37,6.79 1.48,4.88 2.38,3.98 4.29,4.87 5.14,4.52 5.86,2.53 7.14,2.53 7.86,4.52 8.71,4.87 10.62,3.98 11.52,4.88 10.63,6.79 10.98,7.64" fill="#3f3f3f"/><circle cx="6.5" cy="9" r="2.08" fill="#fff"/><polygon points="18.57,3.53 18.57,4.47 17.39,4.99 17.06,5.58 17.19,6.86 16.38,7.33 15.34,6.57 14.66,6.57 13.62,7.33 12.81,6.86 12.94,5.58 12.61,4.99 11.43,4.47 11.43,3.53 12.61,3.01 12.94,2.42 12.81,1.14 13.62,0.67 14.66,1.43 15.34,1.43 16.38,0.67 17.19,1.14 17.06,2.42 17.39,3.01" fill="#3f3f3f"/><circle cx="15" cy="4" r="1.15" fill="#fff"/><polygon points="18.57,13.53 18.57,14.47 17.39,14.99 17.06,15.58 17.19,16.86 16.38,17.33 15.34,16.57 14.66,16.57 13.62,17.33 12.81,16.86 12.94,15.58 12.61,14.99 11.43,14.47 11.43,13.53 12.61,13.01 12.94,12.42 12.81,11.14 13.62,10.67 14.66,11.43 15.34,11.43 16.38,10.67 17.19,11.14 17.06,12.42 17.39,13.01" fill="#3f3f3f"/><circle cx="15" cy="14" r="1.15" fill="#fff"/></svg>
<div class="t ui" style="left:1275.5px;top:867.5px;font-size:15.2px;color:#333;font-weight:400;transform:translateY(-50%);">Customize</div>
<div class="abs" style="left:1363px;top:848px;width:9px;height:296px;background:#e6e7ea"></div>
<div class="abs" style="left:1365px;top:1009px;width:1.500px;height:11px;background:#777"></div><div class="abs" style="left:1368px;top:1009px;width:1.500px;height:11px;background:#777"></div>
<svg style="left:61.8px;top:897.7px" width="17" height="17" viewBox="0 0 17 17" ><path d="M17 0C11.800 .300 7.600 2.800 4.900 7.900L4 9.700 7.300 13 9 12.100C14.200 9.400 16.700 5.200 17 0z" fill="#067a60"/><path d="M6.300 5.900L2 6.500 0 9.900l4.300.300z" fill="#067a60"/><path d="M11.100 10.700l-.600 4.300L7.100 17l-.300-4.300z" fill="#067a60"/><path d="M4.300 9.400l3.300 3.300-1.300 3-1.500-2.800-2.800-1.500z" fill="#067a60"/><circle cx="13.300" cy="3.700" r="1.150" fill="#fff"/></svg>
<div class="cb" style="left:149.500px;top:900px"></div>
<svg style="left:216px;top:900px" width="10" height="15" viewBox="0 0 10 15" ><path d="M0 6l5-5.500 5 5.500zM0 9l5 5.500 5-5.500z" fill="#555"/></svg>
<div class="t ui" style="left:271px;top:908px;font-size:16.2px;color:#2b2b2b;font-weight:700;transform:translateY(-50%);">Name</div>
<svg style="left:323px;top:900px" width="10" height="15" viewBox="0 0 10 15" ><path d="M0 6l5-5.500 5 5.500zM0 9l5 5.500 5-5.500z" fill="#555"/></svg>
<div class="t ui" style="left:747px;top:908px;font-size:16.2px;color:#2b2b2b;font-weight:700;transform:translateY(-50%);">Full Path</div>
<svg style="left:821px;top:900px" width="10" height="15" viewBox="0 0 10 15" ><path d="M0 6l5-5.500 5 5.500zM0 9l5 5.500 5-5.500z" fill="#555"/></svg>
<div class="t ui" style="left:1186px;top:908px;font-size:16.2px;color:#067a60;font-weight:700;transform:translateY(-50%);">Lane</div>
<svg style="left:1230px;top:900px" width="10" height="6" viewBox="0 0 10 6" ><path d="M0 5.500l5-5.500 5 5.500z" fill="#067a60"/></svg>
<svg style="left:1317.3px;top:893.8px" width="23.5" height="20.5" viewBox="0 0 23.5 20.5" ><defs><pattern id="hatch1" width="2.200" height="2.200" patternUnits="userSpaceOnUse" patternTransform="rotate(-45)"><rect width="2.200" height="2.200" fill="#b0b0b0" opacity=".45"/><rect width="1.100" height="2.200" fill="#b0b0b0"/></pattern></defs><rect x=".500" y=".500" width="19.600" height="15.600" rx="1.200" fill="#fff" stroke="#6a6a6a" stroke-width="1"/><rect x="10.500" y=".800" width="9.400" height="15" fill="url(#hatch1)"/><path d="M.500 5.700h19.600M.500 10.900h19.600M10.300 .500v15.600" stroke="#6a6a6a" stroke-width="1"/><circle cx="18.500" cy="15.400" r="4.600" fill="#2f2f2f" stroke="#fff" stroke-width="1"/><path d="M16 15.400h5M18.500 12.900v5" stroke="#fff" stroke-width="1.400"/></svg>
<div class="row rowg" style="left:36px;top:923px;width:1327px"></div>
<svg style="left:61.3px;top:931.6px" width="17" height="17" viewBox="0 0 17 17" ><path d="M17 0C11.800 .300 7.600 2.800 4.900 7.900L4 9.700 7.300 13 9 12.100C14.200 9.400 16.700 5.200 17 0z" fill="#067a60"/><path d="M6.300 5.900L2 6.500 0 9.900l4.300.300z" fill="#067a60"/><path d="M11.100 10.700l-.600 4.300L7.100 17l-.300-4.300z" fill="#067a60"/><path d="M4.300 9.400l3.300 3.300-1.300 3-1.500-2.800-2.800-1.500z" fill="#067a60"/><circle cx="13.300" cy="3.700" r="1.150" fill="#fff"/></svg>
<svg style="left:95.3px;top:930.9px" width="15" height="15" viewBox="0 0 15 15" ><circle cx="7.500" cy="7.500" r="7.500" fill="#067a60"/><circle cx="7.500" cy="3.800" r="1.500" fill="#fff"/><path d="M5.400 6.400h3.400v5h1.200v1.400H5.200v-1.400h1.300V7.800H5.400z" fill="#fff"/></svg>
<svg style="left:122.5px;top:932.8px" width="12.4" height="12.2" viewBox="0 0 12.4 12.2" ><path d="M1.500 1.500l9.400 9.200M10.900 1.500l-9.400 9.200" stroke="#067a60" stroke-width="3.700"/></svg>
<div class="cb" style="left:149.500px;top:932.1px"></div>
<svg style="left:178.3px;top:928.1999999999999px" width="16.4" height="19.3" viewBox="0 0 16.4 19.3" ><rect x="0" y="0" width="7.600" height="19.300" rx="1.600" fill="#d1561f"/><rect x="8.800" y="0" width="7.600" height="19.300" rx="1.600" fill="#d1561f"/><polyline points="0,10.800 1.300,10.800 2.600,4.600 4.400,15.600 5.900,5 7.600,10.200" fill="none" stroke="#fff" stroke-width="1.250" stroke-linejoin="round"/><polyline points="0,10.800 1.300,10.800 2.600,4.600 4.400,15.600 5.900,5 7.600,10.200" fill="none" stroke="#fff" stroke-width="1.250" stroke-linejoin="round" transform="translate(8.800 0)"/></svg>
<div class="t ui" style="left:271.6px;top:940.9px;font-size:16.5px;color:#2b2b2b;font-weight:700;transform:translateY(-50%);">Downtime</div>
<a class="path" style="left:747px;top:940.9px;transform:translateY(-50%)">Global Manufacturing » America » Houston Plant » Unit 3</a>
<div class="t ui" style="left:1236px;top:940.9px;font-size:16px;color:#333;font-weight:400;transform:translate(-50%,-50%);">1</div>
<svg style="left:61.3px;top:962.0px" width="17" height="17" viewBox="0 0 17 17" ><path d="M17 0C11.800 .300 7.600 2.800 4.900 7.900L4 9.700 7.300 13 9 12.100C14.200 9.400 16.700 5.200 17 0z" fill="#067a60"/><path d="M6.300 5.900L2 6.500 0 9.900l4.300.300z" fill="#067a60"/><path d="M11.100 10.700l-.600 4.300L7.100 17l-.300-4.300z" fill="#067a60"/><path d="M4.300 9.400l3.300 3.300-1.300 3-1.500-2.800-2.800-1.500z" fill="#067a60"/><circle cx="13.300" cy="3.700" r="1.150" fill="#fff"/></svg>
<svg style="left:95.3px;top:961.3px" width="15" height="15" viewBox="0 0 15 15" ><circle cx="7.500" cy="7.500" r="7.500" fill="#067a60"/><circle cx="7.500" cy="3.800" r="1.500" fill="#fff"/><path d="M5.400 6.400h3.400v5h1.200v1.400H5.200v-1.400h1.300V7.800H5.400z" fill="#fff"/></svg>
<svg style="left:122.5px;top:963.1999999999999px" width="12.4" height="12.2" viewBox="0 0 12.4 12.2" ><path d="M1.500 1.500l9.400 9.200M10.900 1.500l-9.400 9.200" stroke="#067a60" stroke-width="3.700"/></svg>
<div class="cb" style="left:149.500px;top:962.5px"></div>
<svg style="left:178.3px;top:958.5999999999999px" width="16.4" height="19.3" viewBox="0 0 16.4 19.3" ><rect x="0" y="0" width="7.600" height="19.300" rx="1.600" fill="#3f51a5"/><rect x="8.800" y="0" width="7.600" height="19.300" rx="1.600" fill="#3f51a5"/><polyline points="0,10.800 1.300,10.800 2.600,4.600 4.400,15.600 5.900,5 7.600,10.200" fill="none" stroke="#fff" stroke-width="1.250" stroke-linejoin="round"/><polyline points="0,10.800 1.300,10.800 2.600,4.600 4.400,15.600 5.900,5 7.600,10.200" fill="none" stroke="#fff" stroke-width="1.250" stroke-linejoin="round" transform="translate(8.800 0)"/></svg>
<div class="t ui" style="left:271.6px;top:971.3px;font-size:16.4px;color:#2b2b2b;font-weight:700;transform:translateY(-50%);">Monthly</div>
<a class="path" style="left:747px;top:971.3px;transform:translateY(-50%)">Global Manufacturing » America » Houston Plant » Unit 3</a>
<div class="t ui" style="left:1236px;top:971.3px;font-size:16px;color:#333;font-weight:400;transform:translate(-50%,-50%);">2</div>
<div class="row rowg" style="left:36px;top:985px;width:1327px"></div>
<svg style="left:61.3px;top:992.9000000000001px" width="17" height="17" viewBox="0 0 17 17" ><path d="M17 0C11.800 .300 7.600 2.800 4.900 7.900L4 9.700 7.300 13 9 12.100C14.200 9.400 16.700 5.200 17 0z" fill="#067a60"/><path d="M6.300 5.900L2 6.500 0 9.900l4.300.300z" fill="#067a60"/><path d="M11.100 10.700l-.600 4.300L7.100 17l-.300-4.300z" fill="#067a60"/><path d="M4.300 9.400l3.300 3.300-1.300 3-1.500-2.800-2.800-1.500z" fill="#067a60"/><circle cx="13.300" cy="3.700" r="1.150" fill="#fff"/></svg>
<svg style="left:95.3px;top:992.2px" width="15" height="15" viewBox="0 0 15 15" ><circle cx="7.500" cy="7.500" r="7.500" fill="#067a60"/><circle cx="7.500" cy="3.800" r="1.500" fill="#fff"/><path d="M5.400 6.400h3.400v5h1.200v1.400H5.200v-1.400h1.300V7.800H5.400z" fill="#fff"/></svg>
<svg style="left:122.5px;top:994.1px" width="12.4" height="12.2" viewBox="0 0 12.4 12.2" ><path d="M1.500 1.500l9.400 9.200M10.900 1.500l-9.400 9.200" stroke="#067a60" stroke-width="3.700"/></svg>
<div class="cb" style="left:149.500px;top:993.4000000000001px"></div>
<svg style="left:176.8px;top:990.5px" width="20" height="17.5" viewBox="0 0 18 16" ><polyline points="1,12 4.800,1.500 8.600,12.500 11.500,7.500 14.200,14.500 17,9.500" fill="none" stroke="#9c1f8f" stroke-width="2" stroke-linejoin="round" stroke-linecap="round"/></svg>
<div class="t ui" style="left:209.5px;top:1002.2px;font-size:16.4px;color:#333;font-weight:400;transform:translateY(-50%);letter-spacing:.900px">ft<span style="font-size:.62em;position:relative;top:-.55em">3</span>/h</div>
<div class="t ui" style="left:271.6px;top:1002.2px;font-size:15.75px;color:#2b2b2b;font-weight:700;transform:translateY(-50%);">Fuel Gas Flow (Corrected)</div>
<a class="path" style="left:747px;top:1002.2px;transform:translateY(-50%)">Global Manufacturing » America » Houston Plant » Unit 3</a>
<div class="t ui" style="left:1236px;top:1002.2px;font-size:16px;color:#333;font-weight:400;transform:translate(-50%,-50%);">3</div>
<div class="t ui" style="left:1357.5px;top:1002.2px;font-size:15.7px;color:#9c1f8f;font-weight:400;transform:translate(-100%,-50%);">708.34</div>
<svg style="left:61.3px;top:1023.5px" width="17" height="17" viewBox="0 0 17 17" ><path d="M17 0C11.800 .300 7.600 2.800 4.900 7.900L4 9.700 7.300 13 9 12.100C14.200 9.400 16.700 5.200 17 0z" fill="#067a60"/><path d="M6.300 5.900L2 6.500 0 9.900l4.300.300z" fill="#067a60"/><path d="M11.100 10.700l-.600 4.300L7.100 17l-.300-4.300z" fill="#067a60"/><path d="M4.300 9.400l3.300 3.300-1.300 3-1.500-2.800-2.800-1.500z" fill="#067a60"/><circle cx="13.300" cy="3.700" r="1.150" fill="#fff"/></svg>
<svg style="left:95.3px;top:1022.8px" width="15" height="15" viewBox="0 0 15 15" ><circle cx="7.500" cy="7.500" r="7.500" fill="#067a60"/><circle cx="7.500" cy="3.800" r="1.500" fill="#fff"/><path d="M5.400 6.400h3.400v5h1.200v1.400H5.200v-1.400h1.300V7.800H5.400z" fill="#fff"/></svg>
<svg style="left:122.5px;top:1024.7px" width="12.4" height="12.2" viewBox="0 0 12.4 12.2" ><path d="M1.500 1.500l9.400 9.200M10.900 1.500l-9.400 9.200" stroke="#067a60" stroke-width="3.700"/></svg>
<div class="cb" style="left:149.500px;top:1024.0px"></div>
<svg style="left:176.8px;top:1021.0999999999999px" width="20" height="17.5" viewBox="0 0 18 16" ><polyline points="1,12 4.800,1.500 8.600,12.500 11.500,7.500 14.200,14.500 17,9.500" fill="none" stroke="#4a7ac0" stroke-width="2" stroke-linejoin="round" stroke-linecap="round"/></svg>
<div class="t ui" style="left:209.5px;top:1032.8px;font-size:16.4px;color:#333;font-weight:400;transform:translateY(-50%);">BTU/ft<span style="font-size:.62em;position:relative;top:-.55em">3</span></div>
<div class="t ui" style="left:271.6px;top:1032.8px;font-size:15.75px;color:#2b2b2b;font-weight:700;transform:translateY(-50%);">Fuel Gas Heating Value (Cleansed)</div>
<a class="path" style="left:747px;top:1032.8px;transform:translateY(-50%)">Global Manufacturing » America » Houston Plant » Unit 3</a>
<div class="t ui" style="left:1236px;top:1032.8px;font-size:16px;color:#333;font-weight:400;transform:translate(-50%,-50%);">4</div>
<div class="t ui" style="left:1357.5px;top:1032.8px;font-size:15.7px;color:#4a7ac0;font-weight:400;transform:translate(-100%,-50%);">1263.2</div>
<div class="row rowg" style="left:36px;top:1047px;width:1327px"></div>
<svg style="left:61.3px;top:1054.5px" width="17" height="17" viewBox="0 0 17 17" ><path d="M17 0C11.800 .300 7.600 2.800 4.900 7.900L4 9.700 7.300 13 9 12.100C14.200 9.400 16.700 5.200 17 0z" fill="#067a60"/><path d="M6.300 5.900L2 6.500 0 9.900l4.300.300z" fill="#067a60"/><path d="M11.100 10.700l-.600 4.300L7.100 17l-.300-4.300z" fill="#067a60"/><path d="M4.300 9.400l3.300 3.300-1.300 3-1.500-2.800-2.800-1.500z" fill="#067a60"/><circle cx="13.300" cy="3.700" r="1.150" fill="#fff"/></svg>
<svg style="left:95.3px;top:1053.8px" width="15" height="15" viewBox="0 0 15 15" ><circle cx="7.500" cy="7.500" r="7.500" fill="#067a60"/><circle cx="7.500" cy="3.800" r="1.500" fill="#fff"/><path d="M5.400 6.400h3.400v5h1.200v1.400H5.200v-1.400h1.300V7.800H5.400z" fill="#fff"/></svg>
<svg style="left:122.5px;top:1055.7px" width="12.4" height="12.2" viewBox="0 0 12.4 12.2" ><path d="M1.500 1.500l9.400 9.200M10.900 1.500l-9.400 9.200" stroke="#067a60" stroke-width="3.700"/></svg>
<div class="cb" style="left:149.500px;top:1055.0px"></div>
<svg style="left:176.8px;top:1052.1px" width="20" height="17.5" viewBox="0 0 18 16" ><polyline points="1,12 4.800,1.500 8.600,12.500 11.500,7.500 14.200,14.500 17,9.500" fill="none" stroke="#0e8a45" stroke-width="2" stroke-linejoin="round" stroke-linecap="round"/></svg>
<div class="t ui" style="left:209.5px;top:1063.8px;font-size:16.4px;color:#333;font-weight:400;transform:translateY(-50%);">BTU/h</div>
<div class="t ui" style="left:271.6px;top:1063.8px;font-size:15.75px;color:#2b2b2b;font-weight:700;transform:translateY(-50%);">Fuel Gas Consumption</div>
<a class="path" style="left:747px;top:1063.8px;transform:translateY(-50%)">Global Manufacturing » America » Houston Plant » Unit 3</a>
<div class="t ui" style="left:1236px;top:1063.8px;font-size:16px;color:#333;font-weight:400;transform:translate(-50%,-50%);">5</div>
<div class="t ui" style="left:1357.5px;top:1063.8px;font-size:15.7px;color:#0e8a45;font-weight:400;transform:translate(-100%,-50%);">894083</div>
<svg style="left:61.5px;top:1086.3px" width="15" height="15" viewBox="0 0 15 15" ><circle cx="7.500" cy="7.500" r="7.500" fill="#f0a83a"/><rect x="6.400" y="3" width="2.200" height="6" rx=".8" fill="#fff"/><circle cx="7.500" cy="11.400" r="1.300" fill="#fff"/></svg>
<svg style="left:95.3px;top:1084.8px" width="15" height="15" viewBox="0 0 15 15" ><circle cx="7.500" cy="7.500" r="7.500" fill="#067a60"/><circle cx="7.500" cy="3.800" r="1.500" fill="#fff"/><path d="M5.400 6.400h3.400v5h1.200v1.400H5.200v-1.400h1.300V7.800H5.400z" fill="#fff"/></svg>
<svg style="left:122.5px;top:1086.7px" width="12.4" height="12.2" viewBox="0 0 12.4 12.2" ><path d="M1.500 1.500l9.400 9.200M10.900 1.500l-9.400 9.200" stroke="#067a60" stroke-width="3.700"/></svg>
<div class="cb" style="left:149.500px;top:1086.0px"></div>
<svg style="left:176.8px;top:1083.1px" width="20" height="17.5" viewBox="0 0 18 16" ><polyline points="1,12 4.800,1.500 8.600,12.500 11.500,7.500 14.200,14.500 17,9.500" fill="none" stroke="#aa4525" stroke-width="2" stroke-linejoin="round" stroke-linecap="round"/></svg>
<div class="t ui" style="left:209.5px;top:1094.8px;font-size:15.2px;color:#333;font-weight:400;transform:translateY(-50%);">BTU</div>
<div class="t ui" style="left:271.6px;top:1094.8px;font-size:15.75px;color:#2b2b2b;font-weight:700;transform:translateY(-50%);">Fuel Gas Consumption- Monthly</div>
<a class="path" style="left:747px;top:1094.8px;transform:translateY(-50%)">Global Manufacturing » America » Houston Plant » Unit 3</a>
<div class="t ui" style="left:1236px;top:1094.8px;font-size:16px;color:#333;font-weight:400;transform:translate(-50%,-50%);">6</div>
<div class="t ui" style="left:1357.5px;top:1094.8px;font-size:15.7px;color:#aa4525;font-weight:400;transform:translate(-100%,-50%);">5.1e+8</div>
<div class="abs" style="left:1372px;top:848px;width:548px;height:38.400px;background:#f8f9f9;border-bottom:1.800px solid #e3e7eb"></div>
<svg style="left:1389.8px;top:855px" width="13.2" height="20.4" viewBox="0 0 13.2 20.4" ><path d="M3.900 .900H.900v18.600h3M9.300 .900h3v18.600h-3" fill="none" stroke="#067a60" stroke-width="1.800"/><polyline points="3.300,12.500 4.500,4.800 6.400,12 7.900,6.200 9.500,15.500" fill="none" stroke="#067a60" stroke-width="1.250" stroke-linejoin="round"/></svg>
<div class="t ui" style="left:1413px;top:867.5px;font-size:15.9px;color:#067a60;font-weight:700;transform:translateY(-50%);">Capsules</div>
<div class="abs" style="left:1854px;top:853.300px;width:61.500px;height:26.500px;border:1px solid #dcdfe2;border-radius:4.500px;background:#fff"></div>
<div class="abs" style="left:1886px;top:853.300px;width:1px;height:26.500px;background:#dcdfe2"></div>
<svg style="left:1861.9px;top:858.9px" width="18" height="18" viewBox="0 0 18 18" ><circle cx="7.300" cy="7.300" r="6.100" fill="none" stroke="#2b2b2b" stroke-width="2.300"/><path d="M11.900 11.900l4.600 4.400" stroke="#2b2b2b" stroke-width="3.100" stroke-linecap="round"/><path d="M4.300 7.300h6M7.300 4.300v6" stroke="#2b2b2b" stroke-width="1.600"/></svg>
<svg style="left:1893.2px;top:858.8px" width="14.4" height="13.8" viewBox="0 0 14.4 13.8" ><rect x=".950" y=".950" width="12.500" height="11.900" rx="2.800" fill="none" stroke="#333" stroke-width="1.900"/><path d="M3.700 6.900h7" stroke="#333" stroke-width="1.800"/></svg>
<div class="cb" style="left:1381.200px;top:900.400px"></div>
<div class="t ui" style="left:1441px;top:908px;font-size:16.2px;color:#067a60;font-weight:700;transform:translateY(-50%);">Start</div>
<svg style="left:1486px;top:900px" width="10" height="6" viewBox="0 0 10 6" ><path d="M0 5.500l5-5.500 5 5.500z" fill="#067a60"/></svg>
<svg style="left:1505.9px;top:896.6px" width="5.6" height="19.2" viewBox="0 0 5.6 19.2" ><circle cx="2.800" cy="2.8" r="2.750" fill="#dde1e4"/><circle cx="2.800" cy="9.5" r="2.750" fill="#dde1e4"/><circle cx="2.800" cy="16.3" r="2.750" fill="#dde1e4"/></svg>
<div class="t ui" style="left:1676px;top:908px;font-size:16.2px;color:#2b2b2b;font-weight:700;transform:translateY(-50%);">Duration</div>
<svg style="left:1750px;top:900px" width="10" height="15" viewBox="0 0 10 15" ><path d="M0 6l5-5.500 5 5.500zM0 9l5 5.500 5-5.500z" fill="#555"/></svg>
<svg style="left:1769.4px;top:896.6px" width="5.6" height="19.2" viewBox="0 0 5.6 19.2" ><circle cx="2.800" cy="2.8" r="2.750" fill="#dde1e4"/><circle cx="2.800" cy="9.5" r="2.750" fill="#dde1e4"/><circle cx="2.800" cy="16.3" r="2.750" fill="#dde1e4"/></svg>
<svg style="left:1809.6px;top:894.8px" width="23.5" height="20.5" viewBox="0 0 23.5 20.5" ><defs><pattern id="hatch2" width="2.200" height="2.200" patternUnits="userSpaceOnUse" patternTransform="rotate(-45)"><rect width="2.200" height="2.200" fill="#b0b0b0" opacity=".45"/><rect width="1.100" height="2.200" fill="#b0b0b0"/></pattern></defs><rect x=".500" y=".500" width="19.600" height="15.600" rx="1.200" fill="#fff" stroke="#6a6a6a" stroke-width="1"/><rect x="10.500" y=".800" width="9.400" height="15" fill="url(#hatch2)"/><path d="M.500 5.700h19.600M.500 10.900h19.600M10.300 .500v15.600" stroke="#6a6a6a" stroke-width="1"/><circle cx="18.500" cy="15.400" r="4.600" fill="#2f2f2f" stroke="#fff" stroke-width="1"/><path d="M16 15.400h5M18.500 12.900v5" stroke="#fff" stroke-width="1.400"/></svg>
<div class="abs" style="left:1840.800px;top:890.300px;width:1.200px;height:28.400px;background:#e1e4e7"></div>
<svg style="left:1865.6px;top:894.8px" width="23.5" height="20.5" viewBox="0 0 23.5 20.5" ><defs><pattern id="hatch3" width="2.200" height="2.200" patternUnits="userSpaceOnUse" patternTransform="rotate(-45)"><rect width="2.200" height="2.200" fill="#e3a3e0" opacity=".45"/><rect width="1.100" height="2.200" fill="#e3a3e0"/></pattern></defs><rect x=".500" y=".500" width="19.600" height="15.600" rx="1.200" fill="#fff" stroke="#d56bd2" stroke-width="1"/><rect x="10.500" y=".800" width="9.400" height="15" fill="url(#hatch3)"/><path d="M.500 5.700h19.600M.500 10.900h19.600M10.300 .500v15.600" stroke="#d56bd2" stroke-width="1"/><circle cx="18.500" cy="15.400" r="4.600" fill="#a3219f" stroke="#fff" stroke-width="1"/><path d="M16 15.400h5M18.500 12.900v5" stroke="#fff" stroke-width="1.400"/></svg>
<svg style="left:1913.2px;top:894.8px" width="23.5" height="20.5" viewBox="0 0 23.5 20.5" ><defs><pattern id="hatch4" width="2.200" height="2.200" patternUnits="userSpaceOnUse" patternTransform="rotate(-45)"><rect width="2.200" height="2.200" fill="#b9cdee" opacity=".45"/><rect width="1.100" height="2.200" fill="#b9cdee"/></pattern></defs><rect x=".500" y=".500" width="19.600" height="15.600" rx="1.200" fill="#fff" stroke="#7fa1dc" stroke-width="1"/><rect x="10.500" y=".800" width="9.400" height="15" fill="url(#hatch4)"/><path d="M.500 5.700h19.600M.500 10.900h19.600M10.300 .500v15.600" stroke="#7fa1dc" stroke-width="1"/><circle cx="18.500" cy="15.400" r="4.600" fill="#3a66b5" stroke="#fff" stroke-width="1"/><path d="M16 15.400h5M18.500 12.900v5" stroke="#fff" stroke-width="1.400"/></svg>
<div class="row rowg" style="left:1372px;top:924px;width:548px;height:31.200px"></div>
<svg style="left:1381.2px;top:932.6px" width="14.8" height="14.8" viewBox="0 0 14.8 14.8" ><circle cx="7.400" cy="7.400" r="6.400" fill="none" stroke="#c2c2c2" stroke-width="1.900"/><path d="M2.900 11.900l9-9" stroke="#c2c2c2" stroke-width="1.900"/></svg>
<svg style="left:1415.4px;top:928.8px" width="13.2" height="20.4" viewBox="0 0 13.2 20.4" ><path d="M3.900 .900H.900v18.600h3M9.300 .900h3v18.600h-3" fill="none" stroke="#3f51a5" stroke-width="1.800"/><polyline points="3.300,12.500 4.500,4.800 6.400,12 7.900,6.200 9.500,15.500" fill="none" stroke="#3f51a5" stroke-width="1.250" stroke-linejoin="round"/></svg>
<div class="t ui" style="left:1441px;top:941px;font-size:15.5px;color:#2b2b2b;font-weight:400;transform:translateY(-50%);">Sep 30, 2022 7:00 PM</div>
<div class="t ui" style="left:1770.5px;top:941px;font-size:15.95px;color:#2b2b2b;font-weight:400;transform:translate(-100%,-50%);">1m 01d 00:00:00.000</div>
<div class="cb" style="left:1381.300px;top:964.2px"></div>
<svg style="left:1415.4px;top:960.0px" width="13.2" height="20.4" viewBox="0 0 13.2 20.4" ><path d="M3.900 .900H.900v18.600h3M9.300 .900h3v18.600h-3" fill="none" stroke="#3f51a5" stroke-width="1.800"/><polyline points="3.300,12.500 4.500,4.800 6.400,12 7.900,6.200 9.500,15.500" fill="none" stroke="#3f51a5" stroke-width="1.250" stroke-linejoin="round"/></svg>
<div class="t ui" style="left:1441px;top:972.2px;font-size:15.5px;color:#2b2b2b;font-weight:400;transform:translateY(-50%);">Oct 31, 2022 7:00 PM</div>
<div class="t ui" style="left:1770.5px;top:972.2px;font-size:15.95px;color:#2b2b2b;font-weight:400;transform:translate(-100%,-50%);">30d 00:00:00.000</div>
<div class="row rowg" style="left:1372px;top:986px;width:548px;height:31.200px"></div>
<div class="cb" style="left:1381.300px;top:995px"></div>
<svg style="left:1415.4px;top:990.8px" width="13.2" height="20.4" viewBox="0 0 13.2 20.4" ><path d="M3.900 .900H.900v18.600h3M9.300 .900h3v18.600h-3" fill="none" stroke="#3f51a5" stroke-width="1.800"/><polyline points="3.300,12.500 4.500,4.800 6.400,12 7.900,6.200 9.500,15.500" fill="none" stroke="#3f51a5" stroke-width="1.250" stroke-linejoin="round"/></svg>
<div class="t ui" style="left:1441px;top:1003px;font-size:15.5px;color:#2b2b2b;font-weight:400;transform:translateY(-50%);">Nov 30, 2022 6:00 PM</div>
<div class="t ui" style="left:1770.5px;top:1003px;font-size:15.95px;color:#2b2b2b;font-weight:400;transform:translate(-100%,-50%);">1m 01d 00:00:00.000</div>
<div class="cb" style="left:1381.300px;top:1026px"></div>
<svg style="left:1415.4px;top:1021.8px" width="13.2" height="20.4" viewBox="0 0 13.2 20.4" ><path d="M3.900 .900H.900v18.600h3M9.300 .900h3v18.600h-3" fill="none" stroke="#d1561f" stroke-width="1.800"/><polyline points="3.300,12.500 4.500,4.800 6.400,12 7.900,6.200 9.500,15.500" fill="none" stroke="#d1561f" stroke-width="1.250" stroke-linejoin="round"/></svg>
<div class="t ui" style="left:1441px;top:1034px;font-size:15.5px;color:#2b2b2b;font-weight:400;transform:translateY(-50%);">Dec 26, 2022 2:00 AM</div>
<div class="t ui" style="left:1770.5px;top:1034px;font-size:15.95px;color:#2b2b2b;font-weight:400;transform:translate(-100%,-50%);">11d 04:00:00.000</div>
<div class="row rowg" style="left:1372px;top:1048.3px;width:548px;height:31.200px"></div>
<svg style="left:1381.2px;top:1056.6px" width="14.8" height="14.8" viewBox="0 0 14.8 14.8" ><circle cx="7.400" cy="7.400" r="6.400" fill="none" stroke="#c2c2c2" stroke-width="1.900"/><path d="M2.900 11.900l9-9" stroke="#c2c2c2" stroke-width="1.900"/></svg>
<svg style="left:1415.4px;top:1052.8px" width="13.2" height="20.4" viewBox="0 0 13.2 20.4" ><path d="M3.900 .900H.900v18.600h3M9.300 .900h3v18.600h-3" fill="none" stroke="#3f51a5" stroke-width="1.800"/><polyline points="3.300,12.500 4.500,4.800 6.400,12 7.900,6.200 9.500,15.500" fill="none" stroke="#3f51a5" stroke-width="1.250" stroke-linejoin="round"/></svg>
<div class="t ui" style="left:1441px;top:1065px;font-size:15.5px;color:#2b2b2b;font-weight:400;transform:translateY(-50%);">Dec 31, 2022 6:00 PM</div>
<div class="t ui" style="left:1770.5px;top:1065px;font-size:15.95px;color:#2b2b2b;font-weight:400;transform:translate(-100%,-50%);">1m 01d 00:00:00.000</div>
<div class="abs" style="left:1374px;top:1128px;width:546px;height:10.500px;border-radius:5px 0 0 5px;background:#e8e8e8"></div>
<div class="abs" style="left:1373.500px;top:1128px;width:450px;height:10.500px;border-radius:5.250px;background:#b7b7b7"></div>
<div class="abs" style="left:1429px;top:1141px;width:65px;height:6px;border:1px solid #d9d9d9;border-radius:3px 3px 0 0;background:#fff"></div>
<div class="abs" style="left:1557px;top:1141px;width:65px;height:6px;border:1px solid #d9d9d9;border-radius:3px 3px 0 0;background:#fff"></div>
<div class="abs" style="left:1864px;top:1141.500px;width:28px;height:3px;background:#067a60"></div>
</body></html>
